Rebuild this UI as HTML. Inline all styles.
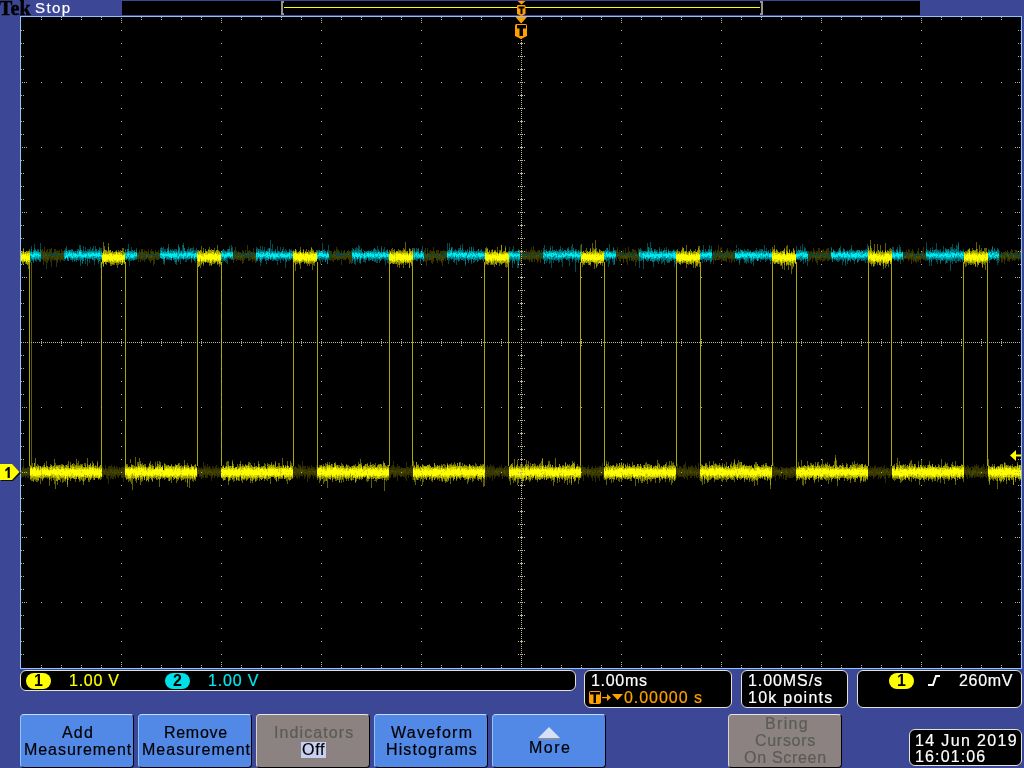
<!DOCTYPE html>
<html><head><meta charset="utf-8">
<style>
*{box-sizing:border-box}
html,body{margin:0;padding:0}
body{width:1024px;height:768px;overflow:hidden;background:#3c4896;position:relative;font-family:"Liberation Sans",sans-serif;}
.a{position:absolute;white-space:nowrap;line-height:17px;font-size:16px;-webkit-text-stroke:0.2px currentColor;will-change:transform}
.pn{position:absolute;background:#000;border:1px solid #e4e0d4;border-radius:6px}
.bt{position:absolute;top:714px;height:54px;background:#5288e6;border-radius:4px;border-top:1px solid #c0dcff;border-left:1px solid #8cc4ff;border-right:1px solid #000;border-bottom:1px solid #000;color:#000;font-size:15px;line-height:17px;text-align:center;letter-spacing:1.3px;white-space:nowrap}
.gr{background:#8c8282;border-top-color:#e8e4e0;border-left-color:#d8d4d0;color:#5c5c54}
.w{color:#fff}.y{color:#ffff00}.c{color:#00e8f0}.o{color:#ffa000}
</style></head><body>
<svg class="a" style="left:0;top:0" width="1024" height="768" viewBox="0 0 1024 768">
<g shape-rendering="crispEdges">
<rect x="122" y="1" width="798" height="14" fill="#000"/>
<rect x="281" y="1" width="2" height="14" fill="#9a9090"/>
<rect x="283" y="1" width="1" height="2" fill="#9a9090"/>
<rect x="283" y="13" width="1" height="2" fill="#9a9090"/>
<rect x="761" y="1" width="2" height="14" fill="#9a9090"/>
<rect x="760" y="1" width="1" height="2" fill="#9a9090"/>
<rect x="760" y="13" width="1" height="2" fill="#9a9090"/>
<rect x="284" y="7" width="476" height="1" fill="#ffff00"/>
<rect x="20" y="16" width="1002" height="653" fill="#8cc4ff"/>
<rect x="21" y="17" width="1000" height="651" fill="#000"/>
<g fill="none" stroke-width="1"><path stroke="#303000" d="M41.5 250v1m1-2v3m0 6v2m1-9v2m0 7v5m1-18v4m0 7v3m1-9v1m0 6v3m1-12v2m0 7v10m1-20v5m0 6v3m1-11v2m0 6v1m1-12v4m0 4v2m1-10v3m0 1v1m0 2v6m1-14v4m0 3v1m0 3v8m1-14v1m0 4v2m1-8v1m0 4v3m1-11v3m0 7v2m1-12v3m0 7v1m1-9v2m0 7v7m1-17v3m0 8v2m1-12v2m0 6v1m1-10v3m0 3v4m1-7v1m0 4v4m1-13v4m0 6v1m1-9v2m0 6v1m1-9v2m0 4v4m74-3v1m1-7v1m0 6v3m1-12v2m0 1v1m0 2v3m1-7v1m0 5v4m1-13v2m0 7v2m1-11v2m0 7v3m1-9v1m0 5v2m1-10v3m0 4v5m1-11v3m0 5v1m2-8v2m1-5v3m0 6v2m1-2v3m1-10v3m0 5v4m1-14v3m0 7v2m1-10v1m0 6v2m1-9v2m0 7v6m1-13v3m0 2v6m1-14v2m0 5v2m1-7v1m0 4v3m1-2v2m1-10v3m0 5v2m1-3v2m74-7v3m0 5v3m1-13v1m0 8v1m1-13v6m0 5v1m1-8v3m0 4v3m1-9v1m0 6v1m1-9v2m0 5v2m1-8v1m0 5v2m1-8v1m0 6v2m1-8v1m0 4v2m1-10v4m0 7v3m1-13v1m0 6v5m1-10v1m0 3v3m1-10v3m0 4v1m1 0v1m1-14v7m0 5v1m1-7v1m0 7v2m1-11v4m0 3v4m1-10v2m0 4v3m1-2v1m1 0v3m1-14v5m0 5v2m1-8v1m0 5v3m1-8v1m0 6v3m74-13v4m0 1v1m0 3v1m1-9v1m0 6v3m1-10v3m0 3v3m1-6v1m0 3v3m1-3v4m1-12v1m0 7v2m1-9v3m0 5v1m1-13v6m1-4v3m0 7v2m1-11v2m0 6v2m1-9v3m0 5v1m1-2v1m1-9v2m0 6v7m1-7v1m1-8v2m0 5v2m1-10v1m0 7v2m1-4v1m1-5v1m0 5v1m1-2v1m1-8v3m0 5v2m1-3v2m0 2v3m1-10v1m0 4v4m1-13v1m0 6v7m73-14v3m0 7v1m1-13v5m0 6v3m1-8v1m0 3v8m1-18v4m0 8v1m1-3v2m1-9v3m0 6v1m1-11v4m1-3v2m0 7v3m1-12v1m0 7v5m1-17v7m0 6v2m1-11v1m1 1v1m1-4v4m0 5v2m1-11v3m0 5v1m0 1v3m1-13v4m0 5v1m1-7v1m0 5v2m1-10v2m0 5v3m1-10v4m0 6v2m1-12v3m0 6v6m1-16v4m0 6v1m1-10v1m0 6v1m1-8v1m0 5v4m1-10v2m0 4v1m74-6v2m0 5v3m1-10v1m0 4v1m0 1v3m1-12v1m0 7v1m1-7v2m1-2v1m0 6v1m1-9v3m0 5v1m1-11v3m0 6v1m1-7v2m0 4v2m1-9v3m0 5v1m1-8v1m0 6v3m1-12v2m0 2v1m0 2v3m1-13v6m0 7v2m1-12v2m0 6v4m1-16v6m0 3v1m0 2v1m1-9v3m0 1v1m0 4v3m1-11v2m0 5v1m1-7v1m0 6v1m1-9v3m0 7v2m1-13v3m0 5v3m1-11v1m0 6v2m1-7v1m0 5v1m0 2v2m1-13v3m0 5v1m1-7v1m0 5v1m74-9v2m0 6v3m1-14v4m1 1v1m0 3v1m0 1v1m1-9v3m0 4v4m1-9v2m0 4v4m1-10v1m0 5v1m1-7v2m0 4v1m1-9v3m0 1v1m0 6v2m1-10v2m0 3v1m1-11v6m1 5v3m1-10v1m0 6v6m1-18v6m1-2v4m0 5v1m1-9v1m0 4v1m1-6v2m0 6v1m1-12v6m0 4v2m1-12v5m0 4v4m1-12v3m1-3v4m0 3v9m1-8v4m1-4v2m1-12v3m0 8v2m74-8v1m1-3v1m0 6v6m1-13v2m0 5v2m1-10v3m0 7v1m1-9v2m0 4v2m1-10v1m0 7v2m1-15v8m0 6v1m1-9v2m0 5v2m1-12v5m1-6v7m0 3v5m1-12v3m0 5v2m1-7v1m1-3v2m0 5v3m1-9v1m0 5v3m1-11v2m0 7v3m1-14v2m0 7v1m1-7v2m1-1v1m0 5v4m1-12v3m0 1v1m0 3v1m1-8v3m0 5v4m1-5v3m1-11v3m0 5v2m1-9v2m0 6v3m74-11v1m0 5v5m1-10v2m0 3v1m0 1v2m1-10v3m0 5v1m1-9v3m0 3v1m1-6v2m0 4v4m1-14v4m0 5v2m1-9v2m1 0v3m0 4v2m1-10v2m0 6v4m1-12v2m0 5v7m1-17v6m0 4v2m1-12v7m0 4v1m1-8v1m0 5v3m1-11v3m0 5v2m1-10v4m0 3v1m0 1v3m1-13v4m0 5v3m1-10v2m0 5v3m1-10v2m0 5v2m1-11v2m0 6v2m1-11v5m0 5v3m1-13v5m0 5v3m1-10v4m0 4v1m1-9v1m0 6v1m73-7v6m0 1v3m1-10v2m0 4v1m1-7v3m0 3v1m1-9v3m0 4v2m1-7v1m0 5v1m1-10v5m0 4v3m1-11v3m0 5v2m1-2v1m1-8v2m0 7v4m1-15v3m0 5v3m1-9v3m0 5v3m1-9v1m0 5v2m1 0v1m1-9v1m0 5v4m1-12v3m0 5v2m1-13v4m0 7v3m1-9v1m0 5v1m1-7v1m0 6v3m1-12v2m0 5v1m1-8v2m0 5v1m1-12v6m0 6v1m1-2v2m1-9v2m0 5v3m74-10v3m0 4v3m1-4v1m1-6v1m0 6v4m1-9v1m0 2v1m0 1v3m1-10v2m0 4v1m1-7v2m0 6v4m1-13v2m0 4v3m1-8v1m0 4v1m1-8v2m0 5v4m1-9v2m0 5v2m1-8v1m0 6v2m1-11v2m1-4v4m0 4v2m1-9v3m0 6v2m1-8v1m0 4v2m1-10v1m0 1v2m0 4v3m1-11v4m0 4v2m1-10v3m0 1v1m0 3v1m1-8v3m0 3v2m1-6v2m0 4v2m1-9v2m0 4v1m1-10v3m0 6v2"/><path stroke="#404000" d="M41.5 251v4m1-3v6m1-5v1m0 3v3m1-9v7m1-5v1m0 2v3m1-7v3m0 1v3m1-1v2m1-6v1m0 1v4m1-7v1m0 2v1m1-5v1m0 2v1m1-2v1m0 1v3m1-2v1m1-5v1m0 2v1m1-5v1m0 4v2m1-7v2m0 3v2m1-6v1m0 2v4m1-7v8m1-8v6m1-6v1m1 0v1m0 1v2m1-5v1m0 2v3m1-6v1m0 2v3m1-6v1m0 1v2m74-4v2m0 2v1m1-5v2m0 2v2m1-7v1m1 0v2m0 2v1m1-7v4m1-4v7m1-5v2m0 2v1m1-5v4m1 1v1m1-8v4m0 2v2m1-5v1m0 1v2m1-6v3m0 2v1m1-4v4m1-1v2m1-7v3m0 2v2m1-7v2m0 2v2m1-5v1m0 2v4m1-4v2m1-6v2m0 2v1m1-4v1m0 1v1m1-4v2m0 2v2m1-5v1m0 3v1m1-5v2m74 0v5m1-9v4m0 3v1m1-6v2m0 1v2m1-2v2m1-1v2m1-6v3m0 1v1m1-5v3m0 1v1m1-5v1m0 3v2m1-5v1m0 2v1m1-1v4m1-9v3m0 2v1m1-2v1m2-4v1m0 2v2m1-6v2m1-2v2m0 3v2m1-5v1m0 1v1m2-5v3m0 2v1m1-2v3m1-6v2m0 2v1m2-4v2m0 2v2m74-6v1m0 1v3m1-7v3m1 1v1m1-2v3m1-6v2m0 2v2m1-7v3m0 1v3m1-2v3m1-6v1m0 2v3m1-3v1m0 1v1m1-7v2m0 3v1m1-1v2m1-2v1m1-6v1m0 4v1m1-2v2m1-5v5m1-7v4m0 1v2m1-4v2m0 1v3m1-6v4m1-7v2m0 1v1m0 1v1m1-4v1m0 2v2m1-7v4m0 1v1m0 2v2m1-6v4m1-8v3m0 2v1m73-1v4m1-7v2m1 0v1m1-4v2m0 2v4m1-7v1m0 1v1m1-2v2m0 1v3m1-6v6m1-7v1m0 3v3m1-8v7m1-4v1m0 1v3m1-8v2m0 3v1m1-4v1m0 1v2m1-4v5m1-6v5m0 1v1m1-2v1m1-5v1m0 1v3m1-6v5m1-1v4m1-5v4m1-4v4m1-8v3m0 1v2m1-6v5m1-4v4m74-1v3m1-6v2m0 1v1m0 1v1m1-8v3m0 3v1m1-1v2m1-5v5m1-5v1m0 2v2m1-7v2m0 3v1m1-1v1m1-4v5m1-6v1m0 3v2m1-7v2m1-1v1m0 1v1m0 1v3m1-8v6m1-6v3m0 1v2m1-3v4m1-6v1m0 1v3m1-1v2m1-5v2m0 1v4m1-8v1m0 2v2m1-7v2m0 3v1m1-4v5m0 1v2m1-8v1m0 3v1m1-5v2m0 2v1m74-6v6m1-7v2m0 1v1m0 1v1m1-4v2m0 2v1m1-5v1m0 2v1m1-3v4m1-2v2m1-1v1m1-5v1m0 1v6m1-5v2m1 0v1m1-4v1m0 1v2m1-6v6m1-6v2m0 1v2m1-3v5m1-7v1m1 3v3m1-3v2m1-2v1m1-2v4m1-6v1m0 1v1m1-5v3m0 1v1m1-3v4m1-7v4m0 1v3m74-2v3m1-8v2m1-1v1m0 2v2m1-1v3m1-6v1m0 1v2m1-7v5m1-3v1m0 2v3m1-6v2m0 2v1m1-5v1m0 4v1m1-4v2m1-4v1m0 2v2m1-4v2m0 1v4m1-8v1m0 3v1m1-4v1m0 1v2m1-6v1m0 5v1m1-9v7m1-4v6m1-4v3m1-5v1m0 1v3m1-1v2m1-7v6m1-5v1m0 3v1m1-5v1m0 3v2m74-7v5m1-3v1m0 1v1m0 1v1m1-2v2m2-5v1m0 1v2m1-6v2m0 2v1m1-5v3m1 0v1m0 1v2m1-6v2m0 2v2m1-6v1m0 2v2m1-2v2m1-3v2m0 1v1m1-6v2m0 1v2m1-5v1m0 3v1m1-3v1m1-3v1m0 1v3m1-5v1m0 1v1m0 1v1m1-5v2m0 2v1m1-7v4m0 1v1m1-4v2m0 2v1m1-1v1m1-3v4m1-6v5m73 0v1m1-2v1m1-3v1m1-3v1m0 1v2m1-4v1m0 2v2m1-2v2m1-4v4m1-5v1m0 2v2m1-5v2m0 2v3m1-8v2m0 2v1m1-2v4m1-5v1m0 2v2m1-5v1m0 2v4m1-3v1m1-5v1m0 2v2m1-7v3m0 1v3m1-1v1m1-5v1m0 1v4m1-7v1m0 3v1m1-5v2m0 2v1m1-2v3m1-4v1m0 1v1m1-5v5m74-3v2m1-3v1m0 1v1m1-3v1m0 3v1m1-3v1m0 1v1m1-3v2m1-4v3m0 1v2m1-7v2m1-2v2m1-3v2m0 2v1m1 0v2m1-5v6m1-3v2m1-6v1m0 2v1m1-3v2m0 2v1m1-5v1m1-1v1m0 1v2m1-2v2m1-5v1m0 1v1m0 1v1m1-4v1m0 1v1m1-1v3m1-2v1m1-6v2"/><path stroke="#505000" d="M43.5 255v2m2-3v2m1-1v1m1 1v1m1-3v1m4 0v1m7-3v1m4-1v1m74 0v2m1-2v2m3-1v2m5-3v2m1-2v1m3 0v1m1-2v2m4-3v1m3-1v1m1 0v1m76-1v1m2 0v1m1-1v1m2-1v1m1-2v2m2-2v1m3-2v1m2-1v1m6 0v3m1-2v2m78-4v1m2 0v1m2 1v1m2-2v1m9-3v1m77 0v1m1 0v2m1-4v2m2 0v1m4-1v1m6-2v1m83-1v2m3-1v1m1-1v1m3-1v1m7-2v2m2-2v1m79-1v1m1-1v1m4 0v1m2-2v1m1 0v2m1-2v1m4-3v1m1 1v1m4-2v1m1-1v1m77-2v1m6 1v1m3-2v1m2 0v1m1-2v1m6-1v2m84-1v1m4 0v1m1-3v1m4 0v1m80-1v1m1-1v2m5-4v2m1-1v2m1-3v2m4 0v2m1-2v1m2-1v2m2-4v1m1 0v1m2 0v1m77-2v3m3-1v1m3-4v2m1-1v2m5-2v3m7-4v1"/><path stroke="#606000" d="M21.5 252v1m0 8v1m1-11v1m0 11v1m1-16v1m0 13v3m1-13v1m1 8v3m2-13v1m1 12v5m1-20v2m0 12v1m1 201v1m0 13v1m1-17v3m0 13v2m1-18v5m0 10v3m1 0v1m1-3v1m1-22v9m0 12v2m1-1v2m1-18v3m0 13v2m1-17v1m0 14v1m1-15v3m1 9v6m1-17v1m0 10v1m1-13v1m0 13v1m1-16v2m0 11v1m1-16v2m0 12v1m1-1v1m1-17v5m0 11v1m1-1v2m1-12v2m0 8v1m1 2v6m1-22v2m0 10v3m1-1v3m1-15v1m0 10v1m1 0v2m1-21v6m0 13v6m1-21v4m0 11v11m1-24v1m1-1v1m0 15v4m1-20v1m2-1v2m0 1v1m0 9v4m1-18v2m0 12v1m1-15v1m0 13v5m1-5v4m1-16v2m0 11v2m1-16v2m0 13v2m1-4v1m1-15v2m0 19v2m1-26v5m0 11v3m2-18v3m0 14v2m1-16v1m0 12v1m2-16v3m0 12v1m1-15v3m1-2v1m0 13v3m1-23v6m1-2v3m1-5v5m1-1v1m0 14v2m1-18v2m0 12v3m1-17v1m0 14v1m1-16v2m0 11v4m1 1v3m1-22v3m0 11v4m1-18v2m0 14v1m2-22v6m1 1v2m0 13v2m1-4v4m1-19v1m1 2v1m0 11v1m1-18v4m0 11v2m1-15v1m0 14v2m1-14v2m1-3v1m1 0v2m1-7v2m1 4v1m0 11v1m1-14v1m0 11v1m1-2v3m1-18v4m0 11v2m1-216v1m1-22v9m0 15v1m1-21v3m2 1v1m0 11v3m1-14v1m1-9v4m0 15v1m1-13v1m0 11v1m1 1v2m1-2v2m1-2v1m1-13v1m0 11v1m1-2v2m1-14v1m1-2v1m0 12v2m1-2v5m1-18v2m0 11v2m1-14v1m0 10v2m1-14v2m0 11v1m1-13v2m0 9v3m1-17v3m0 1v2m0 10v1m1-17v4m0 10v1m1-11v1m1 224v1m1-14v1m0 14v1m1-16v2m1 13v3m1-16v1m0 12v2m1-22v4m0 17v2m1-18v1m0 13v6m1-6v12m1-25v3m2-11v10m0 12v2m1-15v1m0 13v3m1-21v5m1-5v2m1-6v8m0 10v2m1-17v3m0 16v5m1-21v1m0 14v3m1-19v3m0 13v2m2-17v3m1-3v2m0 10v1m1-10v1m1-1v1m1-2v1m0 14v1m1-19v1m0 13v2m1-18v4m1 0v3m0 11v1m1-16v2m0 15v1m2-5v2m1-17v5m1-1v1m0 12v1m1-19v3m0 13v3m1-16v2m1-5v4m0 15v7m1-25v3m1 12v1m1-13v1m0 11v2m2-16v1m0 14v2m1-16v2m0 11v2m1-14v1m0 11v1m1-13v1m1 12v3m2-3v2m1-16v1m0 14v4m1-17v1m1-1v1m0 11v2m1-14v1m1-3v1m1 14v4m1-4v2m1-18v1m0 15v1m1-17v3m0 11v1m1-1v2m1-14v3m0 12v1m1-15v1m0 11v2m1-14v2m0 11v1m1-20v5m0 13v1m1-14v2m0 11v4m1-17v2m0 11v1m1-16v3m0 17v4m1-22v1m0 12v1m1-12v1m0 10v10m1-9v1m1-16v1m0 13v1m1 0v2m1-15v1m0 10v5m1-17v4m0 10v1m1-16v1m0 14v2m2-231v2m0 11v2m1-15v1m2 10v7m1-22v5m0 13v1m1-13v1m0 9v1m1-15v3m0 13v2m2-17v2m0 11v1m2-12v1m0 10v1m1-14v1m0 12v1m1-16v3m0 13v3m1-3v2m1-16v2m0 14v1m1-5v3m1-2v2m1-16v5m0 10v1m1-13v1m0 10v1m1-2v1m1-17v5m0 14v1m1-15v1m0 11v2m1-13v1m0 12v3m1-15v1m0 11v1m1 202v1m1-2v1m0 11v1m1-14v1m0 14v1m2-15v1m0 11v2m1-18v4m1-5v6m0 10v1m1-17v4m0 16v4m1-5v1m1-3v2m1-14v2m1-8v2m0 17v1m1-16v2m0 13v3m1-4v3m1-4v1m1 2v1m1-17v5m0 8v3m1-14v2m0 12v1m1-17v3m0 10v4m1-20v3m0 12v1m1-11v1m0 13v1m1-17v2m0 13v4m1-18v1m0 13v1m1-14v1m0 12v1m1-16v1m0 13v1m1-14v1m0 14v1m1-16v1m0 13v1m1-18v2m0 14v1m1-17v4m1-3v4m0 13v3m1-5v3m1-15v1m0 14v2m1-4v1m1-17v4m0 11v1m1-13v1m0 14v1m1-3v2m1-3v2m1-19v3m0 13v1m1-14v3m0 11v3m1-14v1m1-2v1m1-1v1m2-4v3m0 13v2m1-17v3m1 1v1m0 9v2m1-17v2m0 1v1m0 9v5m1-17v2m1-2v2m0 12v1m1-1v6m1-22v2m1 1v1m1-2v1m1 0v2m0 11v1m1-18v2m0 15v2m1 1v1m1-16v1m1-4v4m0 12v2m1-18v3m0 12v1m1-13v2m0 9v2m1-13v1m0 11v1m1-21v10m0 10v1m1-4v1m1-9v1m1-3v1m0 12v1m1-13v2m0 10v3m1-20v4m0 12v7m1-5v1m1-13v1m0 12v1m1-20v4m1-2v3m0 11v2m1-1v1m1-229v1m0 13v1m1-14v1m0 10v1m1 2v6m1-21v2m0 10v2m1-12v1m0 9v2m1-2v1m1 1v1m1-18v3m0 13v6m1-17v1m0 9v1m1-11v1m1-4v1m0 11v1m1 1v1m1-13v1m0 10v1m1-14v3m0 11v1m1-1v3m1-16v3m1-2v1m0 11v3m1-16v2m0 11v1m1-17v1m0 14v2m1-15v2m0 11v8m1-20v1m0 12v2m1-13v1m0 10v3m2-16v2m0 9v1m1 199v4m0 13v2m1-13v1m0 9v1m1-13v2m0 12v4m1-18v1m0 14v1m1-4v2m1-13v1m1-3v2m0 12v6m1-7v5m1-19v4m0 11v3m1-17v2m1-4v2m0 14v10m1-10v1m1-17v3m1 0v1m0 13v1m1-4v2m1-14v3m0 13v2m1-5v2m1-1v1m1-17v2m0 15v2m1-16v1m0 12v3m2-16v2m0 11v2m1-15v3m0 14v1m1-4v1m1-17v3m0 11v6m1-19v2m0 13v1m1-15v1m0 11v5m1-15v1m0 9v1m1-12v2m0 10v1m1-15v1m0 14v2m1-16v1m0 12v1m1-14v3m0 11v2m1-15v1m1 10v3m1-14v2m0 12v1m1-5v4m1-15v1m0 12v2m1-15v1m1-2v3m0 15v1m1-17v1m0 12v2m1-3v1m1-17v3m0 12v2m1 0v1m1-21v5m0 13v2m1-16v2m0 13v2m1-13v2m2-4v1m0 11v1m2-14v3m0 9v5m1-18v1m0 15v3m1-3v2m1-16v2m1-5v3m0 12v1m1 1v9m1-24v3m0 10v2m1-15v2m1 14v1m1-18v4m0 12v2m1-2v3m1-17v1m0 12v2m1-16v1m1-1v1m1 13v1m1-15v1m0 13v1m1-13v2m0 10v2m1-19v2m1 17v11m1-26v1m0 12v2m1-14v1m0 11v3m1-16v2m0 11v2m1-3v3m1-230v3m0 9v1m2-14v4m1-5v4m0 11v1m1-14v2m1-3v2m0 12v1m1-12v1m0 9v2m2-2v5m1-18v3m0 11v2m1-15v1m0 14v3m1-18v1m0 12v1m1-13v1m0 11v2m1-15v2m0 11v1m1-16v3m0 12v5m1-19v1m1-8v9m0 12v2m1-14v1m0 10v1m1 0v1m1-11v1m1-6v1m1 0v2m0 11v1m1 1v2m1-18v2m0 13v3m1 195v6m0 10v3m1-15v1m0 14v2m1-15v1m0 9v8m1-6v1m2-16v2m0 12v2m1-13v1m1 9v4m2-17v1m0 12v8m1-20v1m0 12v4m1-5v2m1-1v1m2-2v1m2-14v1m0 14v1m1-3v2m1-12v1m0 10v3m1-1v2m1-15v1m0 9v1m2-13v2m0 11v1m1-13v1m0 10v1m1 1v1m1-2v1m1-14v1m0 12v3m1-15v2m1-4v2m0 13v2m1-16v1m0 15v1m1-18v2m0 1v1m0 10v1m1-15v4m0 11v2m1-16v2m0 14v2m1-16v1m0 13v1m1-19v1m0 15v3m1-17v1m0 14v1m1-17v2m1-2v1m0 14v5m1-21v2m0 12v1m1-13v1m0 11v1m1-14v1m0 15v1m1-19v4m1-2v1m0 11v1m1 3v1m1-4v2m1-2v1m1-16v1m0 15v1m1-17v4m0 12v2m1-3v1m1-15v4m2-3v1m0 13v2m1-15v1m0 12v2m1-15v1m1 0v1m0 12v5m1-18v1m0 13v2m1-4v1m1-14v1m0 12v2m2-15v2m0 12v3m1-17v1m0 12v3m1-15v1m0 11v1m1-16v4m0 10v2m1-15v3m1 11v2m1-14v1m0 12v2m2-17v2m0 13v1m1-15v1m0 13v3m1-18v2m1-2v1m0 13v9m1-29v3m0 18v7m1-238v3m0 11v3m1-18v2m1-1v1m0 15v1m1-2v2m1-15v1m0 2v1m0 8v1m1-11v1m0 9v3m1-15v2m0 12v1m1-16v1m0 14v1m1-2v2m1-15v1m0 10v6m1-17v1m2-4v5m0 10v1m1-10v1m0 8v1m1-13v2m0 11v3m1-16v1m0 12v1m1 0v1m1-13v1m0 10v1m1-13v1m1 10v1m1-17v2m0 15v4m1-4v5m1-16v1m0 11v3m1-16v1m0 13v2m1 199v1m0 12v2m1-16v1m0 12v7m2-22v2m0 13v2m1-13v1m0 9v6m1-24v7m0 14v1m1-14v1m0 12v2m1-17v1m0 12v1m1-19v4m0 15v6m1-19v2m0 11v4m1-17v1m0 11v1m1-15v3m1-4v2m0 14v1m1-16v4m0 13v3m1-18v1m1-1v2m1-4v1m0 12v4m1-21v6m1-2v2m0 11v2m1-18v4m0 12v3m1-14v3m0 10v3m1-19v4m0 13v1m1-4v2m1-1v2m1-16v3m1-4v3m1-2v2m0 13v1m1-14v1m0 11v2m1-15v1m0 14v2m1-16v1m1-3v1m1-2v3m0 13v1m1-19v5m0 12v1m1-21v1m1 6v1m0 11v1m1 1v1m1-3v1m1-12v1m1-2v1m0 12v1m1-18v3m0 14v1m1-18v6m0 10v1m1-14v1m0 13v1m1-1v3m1-3v2m1-13v1m0 12v6m1-19v1m0 11v3m1-24v8m1 11v1m1-11v1m0 12v3m2-4v3m1-5v1m1-11v1m0 10v1m1-14v1m0 13v1m1-15v1m0 11v1m1-12v1m0 12v4m1-21v1m0 17v1m1-3v2m1-16v1m0 15v5m1-20v1m0 12v1m1-15v2m0 12v5m1-17v1m0 9v3m1 4v2m1-24v3m2-2v2m0 17v1m1-14v1m0 11v1m1-15v1m0 10v1m1-14v2m0 11v1m1-12v1m0 11v6m1-18v1m0 11v2m1-15v2m1-223v7m1 12v4m1-3v1m1-13v1m0 10v2m1-15v2m0 10v1m1-15v4m1 10v1m1 0v2m2-17v1m0 15v2m2-23v8m1-3v3m0 11v1m1-14v1m0 13v6m1-29v9m0 14v1m1-16v4m0 15v1m1-17v1m0 11v3m1-14v1m1-4v1m1 0v2m0 12v1m2-14v1m0 11v3m1-4v1m1 215v2m1-1v1m1-19v3m0 15v6m1-21v3m0 11v1m1-17v4m1 0v1m0 12v1m1-15v2m1 11v5m1-18v1m1 13v3m1-16v1m0 12v1m1-14v1m0 9v1m1-14v2m0 14v1m1-16v3m1 10v4m1-3v4m1-17v2m0 11v1m1-17v1m0 16v3m1-17v1m0 10v4m1-17v1m1 14v1m1-15v1m1 1v1m0 10v2m1-16v2m0 14v1m1-14v1m1-3v2m0 12v1m1-13v1m0 12v2m1-3v3m1-19v4m0 10v1m1-12v1m1 12v1m1-2v9m1-20v1m2-3v2m0 14v3m1-17v1m0 11v1m1 0v2m1-15v1m0 9v7m1-2v2m1-18v3m0 9v4m1-2v3m1-19v4m1-5v6m0 10v3m1-17v1m0 15v4m1-20v3m1-3v3m0 12v1m1-15v1m0 13v3m1-4v3m2-15v1m0 11v1m1-13v1m0 11v1m1-14v1m0 13v4m2-23v5m1-2v5m0 9v1m1-14v1m0 15v3m1-16v1m0 10v3m1-3v1m1 0v1m1-15v1m1-1v2m0 11v1m1 0v3m1-20v5m0 10v2m1-13v2m0 8v3m1-14v2m1-6v5m0 14v2m1-17v1m0 12v2m1-19v5m0 12v7m1-22v3m0 13v4m1-21v3m0 12v3m1-15v1m1 0v1m0 11v2m1-230v2m1-3v2m0 11v1m1-12v2m0 9v1m1-12v1m1 0v1m0 11v1m1-15v1m0 10v2m1-16v2m0 14v1m1-2v1m1-12v1m0 10v1m1-2v2m1-18v6m0 13v4m1-16v1m1-2v2m0 9v3m1-2v1m1-15v1m0 1v2m1 11v1m1-13v1m1-2v1m0 12v4m1-7v1m1-13v3m0 11v5m2-18v1m0 14v2m1-21v2m0 15v1m1-18v4m0 13v4m1 197v3m0 11v3m1-17v2m0 13v3m1-3v6m1-9v1m1 3v4m1-21v1m0 14v1m1-16v2m0 14v1m1-15v2m0 14v2m1-16v1m0 12v2m1-21v4m0 12v3m1-1v1m1-2v1m1-2v1m1-17v5m0 11v1m1-14v2m0 13v3m1-19v1m0 15v1m1-16v1m0 14v1m1-15v1m0 13v1m1-15v1m0 12v2m1-17v2m0 13v1m1-14v2m0 11v1m1-13v1m0 10v4m1-18v2m0 13v4m1-15v1m0 10v2m1-16v4m0 9v2m1-13v1m0 10v3m1-18v4m0 12v4m1-3v1m2-3v1m1-14v1m0 13v1m1-17v4m0 12v2m1-14v1m0 12v1m1-17v2m0 13v2m1-21v2m0 15v6m1-18v1m1 0v2m0 11v1m1-16v1m1-4v8m0 9v1m1-16v4m0 12v1m1-17v3m0 13v2m2-15v1m1 11v1m1-14v1m0 15v2m1-4v1m1-14v1m0 13v1m1-1v1m2-15v1m0 14v2m1-4v1m1-14v1m0 12v3m1-14v1m0 12v2m1-3v2m1-17v1m0 15v6m1-24v4m0 13v1m1-18v4m0 14v1m1-1v5m1-8v2m1-13v1m1 11v1m1-14v2m0 10v1m1-13v2m0 11v1m1-15v1m0 11v1m1-11v1m0 12v1m1-17v2m0 12v3m1-17v2m1 15v1m1-15v1m0 11v1m1-13v1m0 11v2m1 5v4m1-11v1m1-232v4m0 12v1m1-15v1m0 12v1m1-18v4m1 2v2m0 10v1m1-15v1m0 12v1m1-13v1m0 12v1m2-12v1m0 9v2m1-13v1m0 11v3m1-15v2m0 12v1m1-3v6m1-19v1m1-3v1m0 16v5m2-24v4m0 15v1m1-21v6m0 13v1m1 0v5m1-21v1m0 12v3m1 0v1m1-15v1m0 11v11m1-22v1m0 11v5m1-21v1m0 17v1m1-17v1m0 11v1m2 202v1m0 12v3m1-14v1m0 11v1m1-18v5m1 12v1m1-13v1m1-8v7m0 11v1m1-13v1m0 11v7m1-6v7m1-9v3m1 0v4m1-18v1m0 12v1m1-19v5m0 11v1m2-12v1m1-4v3m1-3v2m1 11v1m1-13v1m0 13v2m1-14v2m0 13v2m1-21v4m0 13v1m1-14v1m1-5v2m0 13v1m1-16v4m0 13v3m1-17v1m0 11v1m1-12v2m0 11v1m1-16v1m0 14v1m1-21v8m0 10v3m1-16v2m0 11v1m1-13v2m1-4v1m0 15v1m1-16v1m0 13v3m1-19v3m0 13v2m1-2v6m1-20v1m0 12v3m1-14v1m1-1v1m0 13v2m1-16v1m2-6v6m0 10v2m1-24v3m0 20v1m1-19v5m0 13v1m1-13v1m0 14v5m1-8v1m1-14v1m1 1v1m1 9v1m1-15v2m0 12v1m1-13v2m0 9v2m1-11v1m0 10v3m2-18v2m0 13v1m1-15v3m0 12v2m1-3v2m1-2v1m1 1v3m1-18v1m0 12v1m1-17v5m0 10v1m1-14v1m1-4v4m0 13v4m1-18v2m0 14v2m1-18v4m1-5v4m0 11v1m1-14v2m0 9v1m1-13v2m0 11v1m1 3v2m1-3v1m2 0v1m1-17v1m0 12v3m1-17v1m0 15v2m1-4v1m1 0v1m1-234v2m0 14v2m1-14v1m0 11v1m1-23v6m0 16v2m1-16v2m0 14v2m1-15v1m0 11v1m1-14v2m0 14v1m1-23v7m0 13v2m1-13v1m0 7v3m1-13v1m1-8v9m0 10v2m1-3v1m1-12v1m1-7v6m0 14v1m1-4v1m1-13v1m0 10v3m1-12v1m0 13v3m1-17v1m1-10v7m0 14v4m1-4v2m1-16v1m1 12v4m1-18v3m1-4v3m1-2v2m0 12v1m1 214v1m1-14v1m0 12v2m1-16v2m0 12v3m1-3v2m1-17v4m0 11v1m1-21v7m0 13v1m1-14v2m0 10v2m1-18v7m1 12v3m1-18v1m0 12v4m1-17v1m0 14v1m1-17v1m0 12v3m1-15v3m1-4v3m1-1v2m0 9v1m2-12v1m0 12v1m1-17v1m0 15v2m1-20v6m1-7v6m0 11v5m1-18v2m0 11v1m1-12v1m2-3v2m0 12v3m1-14v1m0 10v1m1-12v1m0 10v1m1-18v4m1 15v5m2-26v6m0 13v1m1-13v1m1-2v3m1-2v1m0 12v3m1-17v2m1 11v2m1-15v2m0 10v1m1 2v1m1-20v3m0 14v1m1-14v1m0 12v1m1-13v1m0 12v1m1-1v3m1-4v1m1-1v3m1-16v1m0 13v2m2-3v4m1-18v2m0 13v1m1-15v2m0 10v2m1-12v1m0 11v4m1-24v7m1 1v1m1 10v2m1-15v1m0 12v6m1-22v2m0 13v2m1-15v2m0 11v2m1-16v3m0 12v1m1-13v1m0 12v2m1-14v1m0 11v1m1-4v1m1-13v4m0 10v2m1-18v3m0 13v1m1-14v2m2-6v5m0 15v4m1-19v1m1-2v1m0 12v2m1-14v1m0 10v1m2-1v2m1-15v1m1 13v1m1-15v2m0 12v4m1-219v1m1-13v2m0 9v5m1-16v1m0 10v4m1-16v2m0 10v1m1-14v1m0 13v2m1-17v1m0 14v1m1-13v2m0 10v2m1-14v1m0 11v2m1-17v3m0 12v1m1-1v2m1-15v1m1-1v1m0 15v1m1-25v7m1 0v3m0 12v3m1-15v1m1-8v6m1-1v2m0 10v1m1-15v4m0 10v2m1-13v1m0 15v1m1-6v2m1-16v4m0 11v2m1-17v5m0 9v8m1-22v4m0 10v1m1-11v1m0 9v1m1 196v6m0 12v4m1 2v2m1-8v3m1-14v1m0 11v1m1-15v3m0 11v2m1-14v2m0 11v2m1-17v2m0 12v1m1-11v1m0 10v1m1-2v3m1-15v1m0 14v8m2-23v1m0 13v1m1-17v1m0 16v2m1-19v3m0 14v1m1-18v1m0 14v1m1-13v1m0 11v1m0 1v1m1-20v1m1 0v3m0 11v1m1 3v3m1-19v1m0 11v1m1-13v2m1 13v1m1-16v1m1 0v2m0 11v1m1-16v2m0 12v2m2-14v1m1 13v2m1-16v1m1-5v2m0 13v1m1-13v3m1 11v2m1-2v1"/><path stroke="#2a2a00" d="M21.5 476v2m1-11v1m0 7v2m1-18v7m0 10v1m1-9v1m0 6v1m1-8v1m0 7v2m1-10v1m0 6v1m1-9v1m0 7v3m1-11v1m0 7v3m1-14v5m0 6v1m73-10v1m0 9v1m1-9v1m0 5v3m1-8v1m1-5v3m0 6v1m1-7v1m0 7v2m1-9v2m0 5v3m1-13v2m0 8v8m1-18v3m0 6v1m1-10v2m0 7v4m1-14v4m0 7v2m1-11v2m0 6v4m1-12v3m0 6v3m1-3v1m1-9v1m0 6v4m1-13v3m1-2v2m0 6v2m1-8v1m0 5v3m1-3v1m1-8v2m0 4v1m1-8v2m0 7v2m1-11v2m0 8v1m1-11v1m0 9v5m1-16v2m0 6v3m73-9v2m0 5v2m1-11v3m1-1v1m0 6v2m1-9v1m0 7v1m1-10v2m0 7v3m1-3v2m1-16v7m0 6v3m1-12v2m0 6v1m1-10v4m0 8v1m1-11v2m0 6v3m1-14v4m0 7v3m1-11v2m0 5v1m1-9v2m0 7v1m1-9v2m0 6v1m1 0v5m1-15v4m0 6v2m1-11v2m1-1v1m0 8v1m1-12v3m1-4v3m0 6v2m1-8v1m0 7v2m1-11v2m0 7v1m1-9v2m0 4v3m1-10v3m0 5v1m73-10v3m0 6v3m1-4v3m1-11v1m0 8v1m1-9v1m0 7v3m1-10v1m0 5v5m1-15v5m0 5v3m1-12v3m0 7v3m1-13v2m0 7v2m1-9v2m0 6v1m1-15v7m0 5v4m1-11v3m0 5v1m1-9v3m0 7v3m1-13v3m0 6v2m1-3v1m1-9v4m0 7v5m1-15v1m0 8v2m1-12v3m0 7v3m1-11v1m0 6v2m1-12v3m0 6v1m1-8v2m0 6v1m1-9v2m0 5v5m1-12v3m0 5v1m1-7v1m0 5v2m1-12v3m0 4v1m0 3v2m73-11v3m0 7v1m1-11v3m0 7v1m1-12v3m0 5v1m1-10v3m1-7v6m0 8v3m1-12v4m1-3v2m0 7v2m1-11v2m0 4v3m1-12v5m0 7v5m1-15v2m0 6v1m1-9v3m0 6v1m1-8v1m0 7v1m1-10v2m0 7v1m1-2v1m1-8v1m0 6v2m1-3v3m1-3v4m1-16v8m0 1v1m0 3v6m2-14v2m0 6v3m1-10v1m0 4v2m1-9v2m0 5v1m0 1v1m1-11v4m0 7v1m1-11v3m0 5v1m0 1v4m73-14v1m0 8v2m1-10v3m0 7v3m1-15v1m0 9v2m1-10v2m0 6v2m1-11v2m0 8v2m1-14v7m0 4v3m1-12v2m0 7v1m1-10v3m0 7v5m1-16v5m1-3v1m0 8v3m1-10v1m0 5v2m1-2v1m1-9v2m0 6v1m1-8v1m0 6v2m1-11v3m0 6v2m1-10v1m0 5v1m1-9v4m0 5v2m1-8v1m0 7v3m1-11v2m0 4v2m1-9v1m0 7v2m1-11v3m1-3v3m0 7v1m1-11v4m0 6v1m1-10v1m0 6v5m73-12v1m0 8v2m1-13v2m1 0v1m0 7v6m1-14v1m0 6v1m1-8v1m0 7v1m2-9v1m0 7v2m1-12v3m0 7v3m2-4v2m1-9v2m0 7v2m1-12v2m0 9v4m1-13v2m0 5v1m1-8v1m0 7v2m1-12v2m0 7v7m1-14v1m0 1v2m1-5v1m0 7v3m1-11v3m0 6v2m1-12v2m0 8v5m1-15v1m0 7v2m1-9v1m0 7v1m1-13v5m0 6v1m1-8v1m0 9v2m73-15v3m0 1v1m0 4v5m1-14v3m0 7v2m1-8v1m0 6v3m1-12v2m0 8v1m1-11v2m0 1v1m0 6v1m1-10v2m0 5v3m1-9v1m0 7v1m1-12v4m0 7v2m1-14v4m0 7v4m1-17v7m0 7v1m1-10v2m0 5v4m1-9v1m0 6v4m1-14v2m0 7v1m1-9v2m0 5v2m1-1v3m1-13v3m0 7v3m1-12v3m0 6v1m1-9v2m0 4v3m1-9v4m0 5v2m1-13v4m0 5v2m1-9v1m0 8v2m1-9v2m0 3v1m0 1v2m1-15v5m0 6v3m1-8v1m0 8v2m73-4v2m1-15v5m0 8v1m1-11v2m0 7v2m1-10v2m0 6v6m1-14v2m0 6v1m1-9v3m1 5v1m1-8v1m0 7v3m1-12v1m1-1v2m0 7v2m1-11v1m1 0v1m0 7v3m1-11v1m1-1v1m0 6v5m1-13v1m0 9v3m1-12v2m0 5v2m1-9v1m0 6v3m1-10v1m0 1v1m0 5v2m1-11v2m0 7v2m1-11v2m0 5v4m1-3v3m1-11v1m0 7v2m1-11v2m0 6v2m1-9v2m0 7v1m73-9v1m0 5v3m1-9v2m0 5v1m1-10v4m0 5v2m1-9v2m0 5v1m1-9v2m0 6v1m1-8v1m0 8v2m1-13v2m0 7v2m1-12v3m0 7v2m1-9v1m0 6v1m1-9v2m0 5v1m1-8v2m0 1v1m0 4v4m1-12v2m0 6v2m1-10v2m0 6v4m1-13v5m0 6v1m1-10v2m0 5v1m1-9v2m0 6v2m1-12v3m0 7v4m1-4v8m1-16v2m0 5v1m1 0v1m1-8v3m0 4v3m1-9v1m0 6v2m1-13v3m0 7v2m1-10v2m73-4v1m0 7v1m1-7v2m0 5v1m1-8v3m0 6v1m1-12v4m0 5v5m1-13v1m0 6v2m1-7v1m0 6v3m1-11v1m0 8v1m1-10v1m0 8v2m1-12v3m0 8v1m1-11v2m0 6v1m1-11v3m0 7v3m1-12v3m0 5v3m1-13v3m0 2v2m0 4v2m1-11v3m0 7v1m1-12v2m0 7v3m1-9v2m0 5v2m1-1v2m1-12v2m0 6v3m1-10v3m0 4v4m1-14v6m0 5v2m1-10v3m0 5v1m1-7v3m0 3v2m1-11v3m0 5v4m1-10v1m0 5v2"/><path stroke="#383800" d="M21.5 470v1m0 2v3m1-8v7m1-9v10m1-7v3m0 1v2m1-6v2m0 3v2m1-7v2m0 2v2m1-7v4m0 2v1m1-7v7m1-6v3m0 1v2m73-8v9m1-7v2m0 1v2m1-4v1m0 2v2m1-7v6m1-5v7m1-5v1m0 1v3m1-8v8m1-7v6m1-7v3m0 2v2m1-6v1m0 2v4m1-7v3m0 1v2m1-5v2m0 1v3m1-10v4m0 4v2m1-7v3m0 1v2m1-6v3m0 1v2m1-6v1m0 2v3m1-5v2m0 1v2m1-8v5m0 1v2m1-5v4m1-5v2m0 2v3m1-7v8m1-9v4m0 3v2m1-9v3m0 1v2m73-4v2m0 2v1m1-6v1m0 2v2m1-5v6m1-6v2m0 1v4m1-7v2m0 1v4m1-7v1m0 4v2m1-7v6m1-7v1m0 2v3m1-5v2m0 2v4m1-8v1m0 1v4m1-7v4m0 2v1m1-6v2m0 2v1m1-6v3m0 1v3m1-6v2m0 2v2m1-6v3m0 1v3m1-6v2m0 3v1m1-7v6m1-6v2m0 3v3m1-8v7m1-8v3m0 2v1m1-5v7m1-7v3m0 1v3m1-6v1m0 2v1m1-4v1m0 1v3m73-6v6m1-8v5m0 1v1m1-7v5m0 1v2m1-7v7m1-6v1m0 2v2m1-5v5m1-6v4m0 1v2m1-8v2m0 3v2m1-5v1m0 2v1m0 1v1m1-7v2m0 2v1m1-4v2m0 1v2m1-5v3m0 1v3m1-7v3m0 1v2m1-6v5m1-4v2m0 1v4m1-9v3m0 1v4m1-7v2m0 1v1m0 1v2m1-7v2m0 2v2m1-7v6m1-5v1m0 2v3m1-6v2m0 1v2m1-4v1m0 3v1m1-5v1m0 2v2m1-7v4m0 1v3m73-6v7m1-7v2m0 1v4m1-8v1m0 2v2m1-6v2m0 2v2m1-7v4m0 1v3m1-5v1m0 1v5m1-8v2m0 3v2m1-7v4m1-4v2m0 1v4m1-8v6m1-5v2m0 1v3m1-6v7m1-7v2m0 3v2m1-8v4m0 1v2m1-6v2m0 1v3m1-7v2m0 1v3m1-6v2m0 3v1m1-4v1m0 1v3m1-8v8m1-6v3m0 1v2m1-6v1m0 1v2m1-5v5m0 1v1m1-6v3m0 1v3m1-7v1m0 3v1m0 1v1m73-9v3m0 2v3m1-5v3m0 1v3m1-11v9m1-6v2m0 1v3m1-7v8m1-5v4m1-7v7m1-6v7m1-6v5m1-7v3m0 2v3m1-6v1m0 1v3m1-7v2m0 3v2m1-6v3m0 1v2m1-6v2m0 1v1m0 1v1m1-6v2m0 1v3m1-7v5m1-4v2m0 1v2m1-5v7m1-6v1m0 1v2m1-6v2m0 4v1m1-6v2m0 3v2m1-7v7m1-6v6m1-8v2m0 2v2m73-6v3m0 1v4m1-9v4m0 2v3m1-8v2m0 3v2m1-7v2m0 2v2m1-6v3m0 2v2m1-6v5m1-6v2m0 4v1m1-7v2m0 3v2m1-6v2m0 2v2m1-6v1m0 2v2m1-5v7m1-8v4m0 2v3m1-7v2m0 1v2m1-6v3m0 1v3m1-8v2m0 2v3m1-6v1m0 2v4m1-8v3m0 2v2m1-5v1m0 1v4m1-8v2m0 2v4m1-9v3m0 3v1m1-6v5m0 1v1m1-7v3m0 1v2m1-6v5m0 1v3m73-8v2m0 1v1m1-6v5m0 1v1m1-5v2m0 1v1m1-5v2m0 3v3m1-8v1m0 1v6m1-7v5m1-5v1m0 2v4m1-7v1m0 1v5m1-8v3m0 3v1m1-6v7m1-7v5m1-4v1m0 3v2m1-8v7m1-6v2m0 2v1m1-7v3m0 3v2m1-7v4m0 1v2m1-6v3m0 1v2m1-6v4m1-2v1m0 2v2m1-7v2m0 1v2m1-6v4m0 3v1m1-5v1m0 1v1m1-6v2m0 1v1m0 1v1m1-4v2m0 2v4m73-11v3m0 3v3m1-8v8m1-8v3m0 2v2m1-6v2m0 1v3m1-6v1m0 2v3m1-5v1m0 2v2m1-6v2m0 1v3m1-6v1m0 3v3m1-6v2m0 2v2m1-7v2m0 2v3m1-8v2m0 3v1m1-5v3m0 1v3m1-7v6m1-6v1m0 3v2m1-7v2m0 4v3m1-7v2m0 1v2m1-6v6m1-6v1m0 1v5m1-7v2m0 1v4m1-7v1m0 3v1m1-7v5m0 1v2m1-7v1m0 2v4m1-7v1m0 3v2m1-5v7m73-7v3m0 1v1m1-4v1m0 3v1m1-5v5m1-5v1m0 2v2m1-6v3m0 1v2m1-6v8m1-9v7m1-7v7m1-6v1m0 1v1m0 1v2m1-6v3m0 1v1m1-5v1m0 1v2m0 1v1m1-6v2m0 3v1m1-6v6m1-4v6m1-5v3m1-6v2m0 2v2m1-7v7m1-6v3m0 1v2m1-6v1m0 2v2m1-6v3m0 1v3m1-4v1m0 1v2m1-5v4m0 1v1m1-8v7m1-6v3m0 1v2m73-9v7m1-4v1m0 1v3m1-4v3m0 1v2m1-7v5m1-7v4m1-2v2m0 3v1m1-7v8m1-6v3m0 1v2m1-7v2m0 4v2m1-8v1m0 4v1m1-7v3m0 1v3m1-6v1m0 3v1m1-7v2m0 2v4m1-6v3m0 2v2m1-9v5m0 1v1m1-4v1m0 3v1m1-7v4m0 2v2m1-8v3m1-1v3m1-3v2m0 1v2m1-5v1m0 2v1m1-2v1m0 1v1m1-6v2m1-2v2m0 2v1"/><path stroke="#484800" d="M21.5 471v2m3-1v1m1-2v3m1-3v2m1-1v2m2-2v1m74-2v1m1-1v2m3-1v1m3-2v2m1-3v2m1 0v1m1-1v1m1-3v4m1-2v1m1-1v1m1-3v2m1 0v1m1-1v1m2-2v2m2-1v3m1-4v1m73 0v2m1-4v2m2-1v1m1-1v1m1-2v4m2-5v2m1 0v2m1-3v1m1 1v2m1-3v2m1-2v1m1-1v2m1-1v1m1-1v3m2-4v3m2-3v2m2-1v1m1-2v2m1-2v1m74 0v1m1-1v1m2-3v2m2 0v1m1-4v3m1-2v2m0 1v1m1-4v2m1-1v1m1 0v1m1-1v1m2-1v1m1-2v1m1-1v1m0 1v1m1-3v2m2-3v2m1-1v1m1-1v3m1-3v2m75-1v1m1-3v2m1-2v2m1-1v1m1-1v1m1-1v3m2-3v1m2-1v1m2-1v3m1-2v1m1-2v1m1-2v1m1-1v3m3-1v1m1-3v1m2 1v1m1-3v3m73-3v2m1 1v1m2-3v1m6-1v2m1-2v1m1-2v3m1-1v1m1-2v1m0 1v1m1-3v1m2-1v1m2-1v1m1-2v4m1-3v3m3-4v2m73-1v1m1-1v2m1-3v3m1-3v2m1-1v2m2-3v4m1-4v3m1-2v2m1-3v2m2 0v2m1-2v1m1-1v1m1-3v2m2-1v2m1-2v1m1-2v2m1-2v3m1 0v1m1-3v1m1 1v1m73-3v1m1 0v1m1-2v1m0 1v2m1-5v3m3-3v2m1-2v1m1 0v3m3-3v3m2-3v2m1-3v3m1-1v1m1-1v1m2-1v2m1-3v1m1 0v3m1-3v1m1-3v1m0 1v1m1-1v2m73-4v3m2-2v2m1-2v1m1-2v2m1-1v2m1-2v1m1-2v3m1-1v2m1-3v2m1-3v3m1-1v1m2-3v3m1-3v4m1-2v1m3-2v1m1-2v3m1-1v1m1-4v2m1-2v3m74 0v1m1-2v3m2-3v2m1-1v1m4-3v1m0 1v1m1-1v1m1 0v1m1-3v3m3-4v2m1-1v2m2-1v1m1-3v2m1-1v1m1 0v1m1 1v1m2-3v1m74-3v1m1 2v1m2-3v2m1-2v3m2-1v1m1-3v4m1-5v4m1-3v1m1-2v3m2-1v2m1-2v1m1-2v3m1-2v2m1-3v3m1-1v1m1-2v1m1-2v2m1 0v1m1-3v3m1-3v2"/><path stroke="#004a50" d="M30.5 251v1m0 10v1m1-17v3m0 10v2m1-1v1m1-11v1m0 11v1m1-19v4m0 11v1m1-11v1m1 9v3m1-13v2m0 8v1m1-11v1m1 11v1m1-19v6m0 12v1m1-7v4m2-5v1m4-1v3m2-3v2m1-2v1m1-3v2m1 0v2m1-2v2m1-3v4m1-3v3m1-3v2m3-1v1m1-1v1m1-2v2m1-2v2m2-6v1m0 8v2m1-13v2m0 9v1m1-14v3m1 11v1m3-2v1m1-11v1m1-1v1m0 10v2m1-3v1m1-9v1m0 9v1m1-3v2m1-10v2m0 7v2m1-13v2m1-2v1m0 8v3m1-16v5m0 9v1m1-15v3m0 14v4m2-15v1m0 11v1m1-18v4m1 1v1m1-5v4m0 9v4m1-6v1m1-10v3m0 9v5m1-17v2m1-2v1m0 9v4m1-16v4m1-1v1m0 7v1m1-11v1m1-3v5m0 8v2m1 0v4m1-19v3m0 9v2m3 2v2m1-17v2m1-1v3m0 8v9m1-20v3m0 8v1m24-11v1m3-6v5m0 11v1m1-1v6m1-7v2m1-14v4m0 9v1m2-1v1m2-2v1m1-12v2m0 9v1m3-6v2m1-1v2m1-2v1m2-1v2m2-3v4m3-3v2m2-3v2m2-2v2m1-2v2m2-1v1m1-2v1m0 1v1m1-3v2m1-1v2m1-1v1m1-9v2m1-3v1m1 0v3m1-4v5m0 9v3m1-15v2m0 11v3m1-16v2m1 8v1m1-12v1m0 10v1m1-16v3m0 12v1m1-1v1m1-11v1m1 0v1m0 9v1m1-12v2m1-1v1m1-2v2m0 8v3m1-13v2m0 11v2m1-15v1m0 12v3m1-14v1m0 7v1m1-16v2m0 15v1m1-15v1m0 11v1m1-1v5m1-14v1m1-6v7m1-9v2m2 14v3m1-11v1m0 7v3m1-13v1m0 9v1m1-13v4m0 8v1m1-11v2m1-3v1m0 9v1m1-11v3m0 10v2m1-15v3m0 7v1m1-12v3m0 9v1m1-10v3m1-3v1m0 8v4m1-15v3m26-1v1m0 8v4m1-3v1m1-11v1m1 9v2m1-11v1m0 7v4m1-14v2m0 7v6m2-18v3m0 9v1m1-8v1m0 6v1m1-14v3m0 11v1m1-13v4m0 8v1m2-5v3m2-4v2m1-3v3m2 0v1m1-3v2m2-2v3m1-1v1m1-3v2m1-3v4m1-2v1m1-2v3m1-2v2m1-2v1m1-3v4m1-2v2m1-5v4m1-1v2m1-4v2m2-8v2m0 12v1m1-14v4m0 8v1m1-3v1m1-10v3m0 7v2m1-15v4m0 12v4m1-16v1m0 10v2m1-17v5m0 8v1m1-10v1m0 7v1m1-12v3m1 1v1m1 8v4m1-15v2m1-3v3m0 9v1m2-21v12m1-3v2m0 8v1m1-16v7m0 8v2m1-10v1m0 8v1m2-12v1m0 10v1m1-9v1m0 7v1m1-15v5m0 8v6m1-6v2m1-10v1m0 7v1m1-13v4m0 9v3m1-12v1m1-3v1m0 8v2m1-13v5m0 8v1m1-3v1m1-10v3m0 8v8m1-18v1m1 8v1m1-1v2m1-2v2m1-11v1m1-2v2m1 8v1m25-10v1m1-1v1m0 8v1m1 0v1m1-3v6m1-5v1m1-17v7m0 9v3m1-3v1m1-11v2m0 7v2m2-8v1m1-3v1m1-6v7m0 6v2m2-5v3m1-4v2m2-1v1m1-2v1m1-1v1m1-1v2m1-4v4m1-2v3m1-3v2m1-3v4m1-4v4m1-4v3m2-1v1m1-3v1m1-1v1m1-1v1m0 1v1m1-1v1m1-1v1m1-4v2m1 0v2m1-8v3m0 10v2m1-4v1m1-10v1m0 11v2m1-16v2m0 11v4m1-18v3m0 9v1m1-12v3m0 9v2m1-17v4m1-3v4m0 11v2m1 0v1m1-16v1m1 9v1m1-9v1m0 2v1m0 5v3m1-2v2m1-11v1m0 8v3m1-12v1m0 7v1m2-10v1m0 9v1m1-1v1m2-11v2m0 7v1m1-9v1m1-3v1m0 9v2m1-2v3m1-13v1m0 11v1m1-12v1m0 8v4m1-17v6m0 7v4m1-14v1m0 9v1m1 0v3m2-17v2m0 11v1m2-11v2m0 7v1m1-12v5m0 6v3m1-10v1m0 7v6m1-15v1m1-2v1m0 10v3m1-3v4m25-16v3m0 9v1m1-13v1m1 10v1m1-12v3m0 9v1m1-12v2m0 8v2m1-13v1m1 9v1m1-8v1m0 9v3m1-15v2m1-5v5m1 10v1m1-9v3m1 0v3m3-5v1m0 1v2m3-4v3m2-3v1m1-1v3m1-2v1m3-2v4m3-3v2m1-3v2m1-2v2m1-1v1m3-13v8m1 8v5m1-21v5m0 10v3m1-3v1m1-12v1m0 11v1m1-13v6m1 6v3m1-12v1m0 10v2m1-14v1m0 7v1m1-8v1m0 9v5m2-17v2m0 11v1m1-14v2m0 10v1m1-16v3m2-4v4m1 2v2m0 7v2m1-2v2m1-11v1m0 13v2m1-15v1m0 6v1m1-10v1m1 11v2m1-16v3m1 9v1m1 2v2m2-17v2m0 11v3m1-3v2m1-11v1m0 8v1m2-11v2m0 9v1m1-4v3m1-10v1m0 7v1m1-10v1m1-2v1m1 1v1m0 7v1m1-9v1m0 9v1m1-11v1m0 7v1m25-13v4m0 11v1m1-3v1m1-2v1m1-11v1m0 13v5m1-22v5m1 11v2m1-5v1m1 0v1m1-1v8m1-19v1m0 15v3m1-8v1m1-7v2m1-1v1m1-2v1m1-1v3m1-4v1m1 1v1m1-2v2m1-2v3m2-3v2m1-1v2m1-3v1m0 1v1m3-4v1m1 0v1m1-2v2m1 1v1m1-3v1m1-2v3m2-2v3m1-2v2m1-9v3m0 8v1m1-15v5m1 0v2m0 8v1m1-12v2m0 8v4m1-12v1m0 8v1m2-11v1m0 9v4m1-18v2m0 11v4m1-3v8m1-22v4m1 0v1m0 8v4m2-4v2m1-12v2m0 8v2m2-11v2m0 9v2m1-14v1m0 10v2m1-16v3m0 10v1m1-10v1m0 9v2m1-14v4m0 7v8m1-9v1m1-1v1m3-11v1m0 10v1m1-13v2m0 10v2m1-11v1m0 8v7m1-16v1m0 7v1m1-13v4m0 8v1m1-15v6m0 10v2m1-14v1m1 9v2m1-11v1m0 11v11m1-23v2m0 9v2m1-11v1m0 7v1m1 1v2m1-12v1m1-7v5m0 10v1m26-13v3m0 10v1m1-4v3m1-11v1m0 9v7m1-23v7m0 8v5m1-13v1m0 7v1m1-9v1m1-1v1m0 7v3m1-15v1m0 11v6m1-1v1m1-15v1m0 7v1m2-6v1m2 0v2m2-3v3m1-2v2m3-2v2m1-3v2m2 0v1m2-1v2m1-3v2m1-1v2m1-3v3m1-4v3m2 1v1m2-3v1m1-7v1m0 11v7m1-20v2m0 8v3m1-12v2m0 9v1m2-10v1m0 10v7m1-11v1m1 0v1m1-9v1m0 8v1m1-18v8m0 9v2m1-2v1m1-13v3m1-9v9m2-1v1m1 11v5m1-18v1m0 11v1m1-13v2m0 9v1m1-11v1m0 9v1m1-11v2m0 9v1m1-10v1m0 7v4m1-17v2m1 9v1m1-10v2m0 9v4m1-13v1m0 7v4m1-13v1m0 10v1m1-14v2m0 10v5m2-18v3m0 9v3m1-10v1m0 8v2m1-14v1m0 12v1m1-1v1m1-3v1m1-10v1m1 6v2m1-11v1m0 9v1m1-10v1m0 11v5m1-8v5m25-14v1m2 8v4m1-18v5m1 9v3m1-13v2m1 0v1m1-1v1m1-3v1m0 10v1m1-16v5m1-1v2m0 11v2m1-18v3m0 12v1m1-8v3m1-2v3m1-4v2m1-3v4m1-2v1m1 0v1m1-3v2m1-1v1m1-2v4m1-4v1m1-1v1m1 1v1m1-3v2m1-3v1m1-1v5m3-5v2m2-1v1m2-1v3m1-3v3m2-12v3m0 1v1m0 1v1m0 7v2m1-9v1m0 6v1m1-12v3m0 8v1m1-9v1m0 11v2m1-16v1m0 9v1m1-2v1m1-1v1m1 0v1m1-11v2m0 9v3m1-13v1m0 10v2m1-2v3m1-15v3m0 8v2m1-13v2m0 8v4m1-12v1m0 6v1m1-9v1m0 10v2m1-2v3m1-4v2m1-11v1m0 9v5m1-15v1m0 7v1m1-10v1m1-3v3m1-1v2m1 8v1m1-12v2m0 7v1m1-10v2m0 8v3m1-13v1m0 9v1m1-11v1m0 9v1m1-1v1m1-15v5m1 10v2m1-14v3m0 8v2m1-10v1m0 7v1m1-10v1m2-2v2m0 10v3m1-4v1m25-15v4m0 9v1m1-1v1m1-11v1m0 9v1m1-1v1m1-14v4m0 10v2m1-12v1m1-7v6m0 9v1m1 0v4m1-17v2m1-1v3m0 10v2m2-12v2m0 8v5m2-11v1m1-2v3m1-3v3m1-2v1m1-2v2m1-1v3m2-3v2m1-3v2m1-2v2m3-2v3m1-3v1m0 1v1m1-3v1m1-1v1m1 0v2m1-2v1m1-1v2m1-4v4m2-5v1m1-6v1m0 3v1m0 6v2m2-11v1m0 8v1m1 0v2m1-10v1m0 7v1m1 0v1m1-10v1m0 8v2m1-13v2m0 9v2m1-2v1m1-15v4m0 9v1m1-1v1m1-9v1m0 8v5m1-17v1m0 12v1m1-13v1m0 9v1m1-9v1m0 11v3m2-16v1m0 10v3m1-13v1m2-3v2m0 10v1m1-17v3m1 2v1m1-1v1m0 9v1m1 0v3m1-13v1m1-2v1m1 11v1m1-2v1m2-11v1m2 7v2m1-11v2m0 8v1m1-11v1m0 9v1m1-12v2m0 8v4m1-14v2m0 7v2m1-16v6m0 9v4m25-16v3m1-3v3m1 1v1m0 8v1m1-2v1m1-11v1m0 9v1m1-13v3m1 10v2m1-17v4m0 10v1m1-13v3m0 10v4m1-6v2m1-9v1m2 2v2m2-2v1m1-1v2m1-2v2m1-3v1m4 0v1m1 0v2m1-2v2m1-3v2m1-1v1m1-1v1m1-2v2m1-1v1m1-1v2m1-1v1m1-4v3m1-3v2m2-13v7m0 10v1m1-10v1m0 8v2m1-11v2m0 7v1m1 2v4m1-18v2m0 9v1m1 2v4m1-19v3m0 8v2m1-10v2m0 7v1m2-11v1m0 9v1m1-17v7m0 10v2m1-13v2m0 8v5m1-14v1m1-1v2m1-3v2m0 12v1m1-4v1m1-10v1m0 8v1m1-15v5m0 8v2m2-13v1m0 10v5m1-15v1m1-1v1m0 10v3m1-3v1m1-11v2m0 8v1m1-14v4m0 10v10m1-24v2m0 11v2m1-18v5m0 12v3m1-15v1m0 9v2m1-13v3m1-2v1m0 2v1m0 6v4m1-18v4m0 10v4m1-17v5m0 7v3m1-19v2m0 17v1m1-11v1m0 8v1m1-11v1m0 8v3m1-3v1m1-9v1m0 9v1m1-13v2m0 9v1m25-12v1m0 9v2m1-11v1m0 9v3m1-12v1m1-3v1m0 9v1m1-14v1m0 11v1m2-11v1m1 1v2m1 7v2m1-13v2m0 10v5m1-16v1m0 10v3m1-9v1m0 2v1m1-3v1m1-3v1m1-1v1m0 1v1m1-2v2m2-1v2m1-2v2m2-3v1m2-2v4m1-3v2m1-3v1m0 2v2m2-3v1m1-2v2m1 0v1m1-2v1m1-1v1m1-2v3m1-2v3"/><path stroke="#007880" d="M30.5 256v6m1-13v3m0 6v1m1-7v2m0 5v1m1-9v1m0 7v3m1-14v3m0 6v2m1-9v1m0 8v2m1-10v1m0 6v1m1-8v1m0 6v1m1-9v2m0 7v1m1-8v1m0 4v4m1-12v4m0 5v3m24-10v2m0 5v1m1-9v2m1-3v2m1 0v1m0 7v1m1-10v3m0 4v4m1-11v1m0 6v1m1-8v2m0 6v1m1-9v2m0 6v2m1-10v3m0 6v1m1-9v1m0 6v1m1-7v1m0 5v3m1-10v2m0 5v1m1-6v1m0 5v1m1-2v2m1-10v3m0 4v1m1-8v1m0 6v2m1-11v2m0 8v4m1-12v2m0 6v2m1-8v2m0 5v4m1-13v3m0 5v3m1-9v1m0 4v1m1-7v2m0 5v2m1-9v2m1 5v3m1-10v1m0 6v1m1-9v2m0 6v1m1-8v1m0 6v1m1-8v1m0 5v1m1-9v3m0 7v1m1-9v1m0 4v3m1-8v2m0 5v3m1-12v3m1-3v3m0 6v1m1-8v2m0 4v3m1-10v2m0 6v4m1-13v2m0 6v1m0 1v2m1-10v2m0 4v2m1-8v1m0 6v1m24-9v3m0 5v2m1-8v1m0 6v1m1-11v3m0 6v1m1-10v2m0 6v3m1-9v2m0 2v1m0 3v1m1-9v1m0 6v1m1-8v1m0 6v2m1-10v3m0 5v2m1-9v2m0 6v1m1-10v2m0 6v2m1-3v2m1-9v2m0 5v2m24-9v3m1-5v3m0 7v1m1-8v2m0 5v1m1 0v2m1-10v2m0 6v3m1-11v1m0 5v1m1-1v2m1-10v2m0 7v1m1-12v3m0 7v2m1-8v2m0 5v1m1-9v3m0 5v2m1-9v2m0 6v1m1-9v2m1 5v2m1-9v1m1-1v2m0 6v3m1-12v2m0 6v4m1-10v1m1-7v4m0 9v2m1-13v5m0 4v2m1-8v2m0 4v2m1-8v1m0 6v1m1-7v2m0 4v1m1-14v8m0 6v1m1-12v3m0 6v2m1-8v1m0 6v1m1-7v1m0 5v1m1-9v2m0 6v1m1-8v1m0 5v2m1-8v1m0 6v1m1-10v3m0 4v2m1-7v1m0 6v3m2-11v4m0 3v2m1 0v2m1-10v2m0 4v2m1-8v1m0 5v2m25-8v2m0 6v2m1-10v1m0 5v2m1-10v4m0 4v3m1-9v3m0 5v2m1-10v1m0 6v2m1-8v1m0 5v1m1-8v1m0 5v1m1-9v3m0 5v1m1-9v3m0 5v1m2-10v4m0 5v2m1-8v1m0 6v1m24-10v3m0 8v1m1-9v1m0 6v1m1-11v2m0 6v1m1-6v1m0 5v1m1-9v2m0 8v2m1-11v1m0 7v2m1-10v1m0 6v1m1-8v1m0 5v1m1-8v3m0 4v2m1-7v1m0 5v3m1-3v2m1-9v1m0 6v2m1-9v1m0 7v1m1-12v1m0 8v2m1-7v2m0 5v1m1-9v2m0 4v2m1-8v1m0 5v2m1-7v1m0 6v1m1-9v2m0 6v1m1-10v2m0 7v1m1-2v2m1-9v2m0 4v2m1-8v1m0 6v1m1-7v1m0 5v1m1-7v1m0 4v3m1-2v1m1-9v1m1 1v2m0 4v2m1-9v2m1-1v1m0 6v1m1-9v2m0 5v4m1-10v1m0 5v1m1-7v1m0 4v2m1-10v3m1-1v2m0 5v2m1-9v2m0 5v1m1-8v2m0 4v2m25-8v1m1-1v2m0 4v2m1-9v2m0 6v2m1-9v1m1-1v1m0 5v2m1-9v2m0 5v2m1-9v4m0 4v1m1-8v1m0 5v1m1-7v2m0 5v4m1-9v1m0 5v1m1-9v1m0 6v6m1-12v2m24-3v1m0 6v3m1-12v3m0 5v2m1-8v2m0 6v3m1-12v2m0 5v4m1-11v2m0 5v2m1-8v2m0 6v1m1-11v3m0 5v2m1-9v3m0 4v4m1-11v3m0 7v3m1-14v4m0 5v1m1-7v1m0 4v1m1 0v1m1-8v2m0 6v1m1-8v1m0 5v2m1-2v1m1-8v2m0 4v1m1-7v1m0 6v2m1-9v2m0 5v2m1-9v1m0 5v3m1-2v1m1 0v2m1-11v2m0 6v1m1-11v5m0 5v1m1-9v2m0 6v3m1-10v2m0 4v2m1-7v1m0 5v1m1-9v2m0 6v1m1-8v1m0 7v1m1-8v1m0 5v3m1-13v4m0 6v1m1-7v1m0 4v2m1-8v1m0 5v1m2-6v1m0 5v1m1-8v2m0 4v3m1-10v1m0 6v3m1-8v2m0 5v1m25-9v2m0 5v2m1-11v2m0 8v1m1-8v1m0 4v2m1-8v1m0 6v2m1-9v1m0 6v1m1-10v3m1 1v1m1-2v1m0 5v3m1-10v1m0 6v1m1-8v2m0 4v3m1-8v1m0 6v2m24-10v1m0 6v2m1-10v2m0 6v1m1-11v4m0 5v1m1-8v1m0 6v1m1-10v1m0 9v1m1-2v2m1-8v1m0 5v2m1-8v1m0 6v3m1-11v2m0 4v1m0 1v2m1-9v1m0 6v2m1-9v2m0 5v2m1-10v1m0 8v2m1-11v2m0 5v3m1-12v4m0 6v1m1-9v2m0 5v3m1-12v4m0 5v3m1-8v1m0 5v1m1-7v1m0 5v1m1-8v1m0 6v6m1-8v2m1-8v5m0 3v2m1-8v1m0 6v2m1-11v1m0 7v2m1-9v2m0 5v1m1-12v4m0 8v3m1-11v1m1-3v3m0 5v3m1-9v2m0 6v1m1-8v1m0 5v2m1-9v1m0 6v2m1-8v2m0 4v3m1-12v3m0 5v1m1-6v1m1-2v2m0 6v1m1-10v3m0 4v2m1-1v1m1-7v1m0 4v4m1-9v1m25-2v1m0 7v3m1-11v2m0 5v2m1-9v1m0 5v2m1-9v2m0 6v5m1-12v2m0 6v2m1-9v1m0 4v5m1-11v2m0 5v1m1-8v2m0 6v1m1-9v2m0 4v3m1-10v3m0 6v6m1-15v2m0 7v1m24-9v1m0 6v1m1-9v2m0 6v6m1-12v2m0 3v3m1-3v2m1-1v2m1-9v2m0 5v1m1 0v1m1-12v4m0 5v2m1-8v1m0 7v1m1-10v3m0 4v3m1-9v1m0 5v2m1-9v2m0 4v2m0 1v1m1-2v1m1-8v2m0 5v1m1-8v1m0 3v1m0 2v2m1-8v1m0 6v2m1-11v2m0 6v2m1-11v3m0 6v1m1-8v2m0 5v2m1-3v2m1-8v1m1-2v4m0 3v1m1-8v1m0 6v2m1-8v2m0 3v4m1-11v3m0 6v1m1-10v2m0 7v1m1-8v2m0 5v1m1-8v1m0 5v1m1-8v2m0 4v2m1-8v2m0 7v1m1-11v2m0 7v1m1-8v2m0 4v1m1-8v1m0 7v3m1-10v1m0 5v3m1-8v1m0 5v1m1-9v2m0 7v2m1-9v1m0 5v2m1-10v2m0 6v2m24-9v1m0 7v1m1-10v3m0 6v1m1-9v1m0 5v4m1-13v3m1 0v2m0 4v3m1-9v1m0 6v1m1-1v1m1-7v1m0 4v1m1-6v1m1-5v3m0 6v2m1-9v3m0 5v6m1-13v1m0 5v1m24-8v2m0 5v4m1-11v2m0 5v1m1-7v2m0 5v2m1-9v2m0 5v2m1-1v3m1-11v2m1-2v1m1 5v3m1-9v1m0 6v2m1-13v3m0 9v1m1-9v1m0 6v1m1-8v1m0 5v4m1-13v3m0 8v2m1-10v1m0 7v3m1-10v1m0 6v3m1-12v1m0 8v2m1-10v1m0 6v2m1-9v1m0 6v2m1-8v2m0 5v2m1-8v1m0 5v1m1-11v3m0 7v2m1-10v1m1-1v1m0 5v3m1-8v1m0 5v1m1-1v3m1-11v3m0 4v3m1-10v3m0 5v2m1-10v2m0 6v1m1-6v1m0 4v3m1-11v1m0 7v4m1-11v2m0 6v3m1-11v2m0 6v1m1-8v1m0 5v3m1-10v1m1-2v1m1 0v1m0 7v3m1-11v1m25-1v2m0 6v1m1-8v1m0 5v2m1-10v2m0 6v1m1-9v2m1 0v1m0 5v1m1-8v2m0 4v3m1-2v4m1-10v1m0 4v3m1-10v2m0 6v2m1-10v2m0 6v2m1-9v1m0 6v4m1-13v3m0 6v3m24-10v2m0 5v1m1-9v1m0 1v1m0 5v1m2-8v1m0 6v1m1-7v1m0 5v5m1-13v3m0 5v1m1-9v1m1-1v2m0 5v1m1-7v1m0 6v1m1-8v2m0 6v1m1-9v2m0 6v2m1-10v1m0 6v3m1-3v2m1-9v2m0 3v3m2-8v1m0 6v3m1-9v1m0 7v1m1-4v3m1-1v2m1-9v1m0 5v1m1-8v2m0 5v1m1-8v1m0 6v2m1-8v1m1-2v1m0 7v1m1-9v2m1-2v2m0 5v1m1-9v2m1-2v3m0 5v1m1-8v2m0 5v1m1-9v4m0 3v2m1-8v3m0 4v2m1-9v1m0 4v3m1-7v1m0 5v1m1-8v1m0 5v2m1-1v2m1-9v2m0 5v3m1-9v1m0 5v2m25-10v3m0 5v1m1-8v2m1-3v3m0 5v1m1-9v1m0 7v1m1-9v3m0 4v3m1-9v1m0 4v5m1-11v2m0 6v1m1-8v1m0 7v1m1-11v3m0 6v1m1-8v1m0 7v2m1-10v1m0 5v2m1-6v1m0 5v2m24-13v3m0 6v1m1 1v3m1-12v1m0 6v1m1-7v1m1 0v2m0 4v1m1-7v1m0 4v1m0 1v1m1-8v1m0 5v2m1-9v1m0 4v4m1-12v3m0 6v3m1-10v1m0 7v1m1-7v2m0 4v1m1-7v1m0 5v2m1-11v3m0 5v4m1-11v2m0 6v1m1-7v1m0 5v5m1-12v2m0 5v1m1-8v1m0 6v3m1-9v2m0 6v1m1-11v3m0 6v1m1-9v2m0 5v3m1-13v4m0 6v1m1-8v1m0 7v1m1-9v1m0 6v2m1-9v2m0 5v3m1-9v1m0 6v1m1-9v1m0 6v1m1-9v1m0 7v4m1-12v2m0 6v3m1-11v1m0 7v2m1-2v1m1-9v2m0 6v3m1-3v1m1-7v2m0 4v2m1-9v2m0 5v2m1-9v1m0 5v2m1-8v1m1-2v2m0 5v2m25-9v2m0 6v1m1-9v2m0 6v1m1-7v1m0 6v1m1-8v1m0 4v2m1-9v3m0 4v2m1-9v1m0 7v3m1-9v1m0 6v1m1-11v3m1-2v2m0 6v2m1-8v1m0 4v1m1 1v1m24-11v3m0 5v2m1-8v1m0 5v2m1-7v2m0 3v2m1-8v1m0 7v3m1-12v2m0 6v1m1-7v1m0 5v4m1-12v3m0 4v1m1-6v1m0 5v1m1-9v2m0 5v2m1-9v3m0 5v1m1-9v2m0 6v2m1-9v2m0 5v1m1-8v1m0 6v2m1-8v1m0 5v2m1-9v2m0 5v5m1-11v1m0 6v1m1-8v1m1-2v1m0 6v1m1-7v1m0 5v2m1-11v4m0 5v1m1-9v1m0 8v4m1-13v2m0 7v1m1-11v2m0 8v1m1-8v1m0 6v1m1-2v3m1-12v3m0 4v1m0 2v1m1-11v3m0 6v3m1-11v2m0 6v1m1-8v2m0 3v5m1-11v2m0 1v1m0 4v1m1-10v3m0 5v2m1-8v1m1-8v8m0 6v3m1-9v1m0 4v3m1-9v2m0 5v1m1-8v1m1 7v2m1-10v1m0 6v2m25-10v2m0 6v1m1-8v1m0 5v3m1-2v2m1-10v4m1-7v4m0 6v1m1-7v2m0 5v1m1-10v3m0 6v2m1-2v1m1-8v1m0 5v2m1-9v3m0 5v2m1-10v3m0 5v2"/><path stroke="#00b0b8" d="M30.5 252v2m0 1v1m1-4v2m0 2v2m1-4v1m0 2v2m1-7v2m0 3v2m1-8v2m1-2v3m0 1v4m1-7v1m0 3v2m1-6v2m0 1v3m1-6v2m0 3v2m1-6v2m0 1v1m1-4v2m0 1v2m24-5v5m1-6v4m0 2v1m1-8v2m0 4v1m1-6v3m0 3v1m1-6v1m0 2v1m1-6v1m0 4v1m1-5v2m0 2v2m1-6v1m0 4v1m1-5v3m0 2v1m1-7v1m0 3v2m1-5v1m0 3v1m1-1v1m1-2v3m1-8v4m0 2v1m1-5v2m0 1v1m1-6v1m0 4v1m1-7v2m0 4v2m1-6v2m0 3v1m1-4v1m0 2v2m1-6v2m0 2v1m1-5v1m1-1v1m0 3v1m1-5v1m0 2v2m1-6v6m1-6v1m0 3v2m1-6v2m0 3v1m1-6v2m0 3v1m1-6v2m0 2v1m1-5v1m0 3v3m1-7v1m1 0v1m0 2v2m1-6v2m0 2v2m1-6v1m0 4v1m1-5v1m0 2v1m1-5v1m0 4v1m1-7v2m0 3v1m0 1v1m1-6v2m0 1v1m1-5v3m0 2v1m24-5v1m0 1v3m1-5v3m0 2v1m1-7v2m0 2v2m1-7v2m1 0v1m0 2v3m1-7v3m0 2v1m1-6v2m1-1v1m1-1v2m0 2v2m1-7v1m0 3v2m1-6v3m0 1v1m1-5v1m0 3v1m24-4v1m0 1v3m1-7v2m0 2v3m1-5v1m0 2v2m1-6v1m0 4v2m1-6v1m0 2v1m0 1v1m1-7v2m0 2v1m1-5v2m0 2v1m1-6v3m0 2v2m1-8v3m0 3v1m1-4v1m0 3v1m1-1v1m1-5v1m0 4v1m1-6v1m0 2v2m1-7v3m0 3v1m1-6v1m0 4v2m1-6v1m0 3v2m1-7v1m0 4v1m1-5v6m1-9v6m0 2v1m1-6v1m0 2v1m1-4v1m0 1v2m1-5v1m0 3v2m1-4v1m0 1v2m1-5v1m0 4v1m1-8v2m0 3v1m1-5v1m0 3v2m1-5v5m1-6v2m0 3v1m1-6v1m0 3v1m1-5v1m0 3v2m1-6v1m0 2v1m1-4v2m1-3v3m0 2v2m1-3v2m1-4v1m0 4v1m2-7v2m25-1v1m0 2v3m1-7v1m1 0v1m0 2v1m1-3v1m0 3v1m1-7v2m0 3v1m1-5v1m0 3v1m1-6v1m0 3v1m1-5v1m0 3v1m1-5v1m0 3v1m1-5v2m0 3v1m1-6v2m0 2v1m1-5v1m0 3v2m24-6v1m0 4v3m1-6v5m1-8v2m1 0v1m0 2v2m1-6v2m0 3v3m1-8v3m0 2v2m1-7v2m0 3v1m1-6v1m0 3v1m1-4v2m0 1v1m1-4v1m0 2v2m1-7v2m0 2v1m0 1v1m1-1v1m1-6v3m0 1v1m0 1v1m1-10v4m0 3v1m1-3v1m0 3v1m1-6v1m1-2v1m0 3v1m1-4v1m0 4v1m1-6v1m0 4v1m1-7v2m0 3v2m1-6v1m0 3v1m1-5v1m1-2v4m0 1v1m1-5v5m1-5v1m0 2v1m1-5v1m0 4v1m1-7v3m0 3v1m1-1v1m1-5v1m0 3v1m1-5v2m0 2v2m1-6v2m0 2v1m1-5v1m0 3v1m1-5v1m0 2v1m1-5v1m0 5v1m1-6v5m1-5v1m0 2v2m1-5v2m0 1v1m25-5v3m0 3v1m1-6v2m0 1v1m1-5v1m0 3v2m1-6v1m0 3v2m1-6v1m0 3v1m1-5v1m1 4v1m1-6v2m0 2v1m1-4v1m0 2v2m1-4v1m0 3v1m1-7v1m0 4v1m1-1v1m24-6v1m0 3v2m1-6v1m1 0v2m0 3v1m1-7v1m0 3v1m1-5v1m1 0v1m0 4v1m1-7v2m1 2v1m1-4v2m0 3v2m1-7v1m0 1v1m0 1v1m1-5v1m0 1v2m1-3v1m0 1v2m1 0v1m1-6v3m0 1v1m1-6v3m0 1v2m1-2v1m1-5v1m0 4v1m1-5v1m0 2v2m1-6v1m1-1v2m0 2v2m1-6v2m0 3v2m1-7v2m0 3v1m1-5v5m1-6v2m0 2v2m1-5v1m1-1v1m0 2v2m1-4v4m1-6v2m0 2v1m0 1v1m1-6v1m0 3v1m1-6v2m0 3v1m1-5v2m1-3v1m0 3v1m1-5v1m0 4v1m1-5v2m0 2v1m1-5v1m0 1v2m1-6v3m1 3v2m25-6v5m1-7v4m0 2v2m1-6v1m0 1v2m1-5v1m0 3v2m1-6v4m0 1v1m1-6v2m0 2v3m1-5v1m0 2v1m1-5v2m0 2v1m1-6v1m0 4v1m1-5v1m0 2v1m1-4v3m0 2v1m24-7v1m0 4v1m1-6v2m0 2v2m1-6v2m0 2v1m1-6v2m0 3v1m1-8v3m0 3v3m1-5v4m1-5v1m0 3v1m1-5v1m0 4v1m1-6v1m0 2v1m1-4v2m0 3v1m1-5v2m0 1v2m1-7v3m0 3v2m1-7v1m0 2v2m1-5v2m0 2v2m1-6v1m0 2v2m1-5v1m1 0v1m0 3v1m1-1v1m1-6v1m0 3v2m1-6v1m0 2v1m1-1v1m1-3v1m0 3v2m1-8v4m0 2v1m1-2v2m1-7v3m0 1v4m1-7v3m0 2v2m1-7v1m0 3v1m1-4v1m0 2v3m1-6v2m0 2v1m1-6v2m0 1v3m1-3v3m1-6v1m0 3v1m1 0v2m1-6v1m0 3v2m2-7v2m0 2v2m1-5v1m0 2v1m1-4v2m0 1v3m25-7v1m0 4v2m1-3v2m1-6v1m0 3v1m1-5v2m0 3v1m1-5v2m0 2v2m1-6v1m0 2v1m1-4v1m0 2v2m1-5v2m0 2v2m1-6v1m0 2v1m1-4v1m0 2v3m1-7v2m0 3v2m24-7v4m0 1v1m1-6v1m0 2v3m1-2v1m1-6v6m1-5v2m0 3v1m1-5v1m0 2v2m1-7v2m0 3v3m1-7v2m0 2v1m1-5v1m0 4v2m1-5v2m1-4v1m0 3v1m1-5v2m0 1v1m0 2v1m1-8v2m0 2v3m1-5v1m0 3v1m1-6v3m0 1v2m1-5v2m0 2v2m1-7v3m0 2v1m1-6v4m0 1v1m1-5v2m0 2v1m1-6v1m0 2v2m1-5v2m0 3v1m1-4v1m1-4v2m0 3v1m1-2v1m1-4v2m0 1v3m1-7v3m0 2v2m1-5v1m0 2v2m1-6v1m0 3v1m1-5v1m1-1v2m0 3v2m1-8v3m0 3v1m1-5v2m0 1v1m1-6v1m0 5v1m1-6v2m0 2v1m1-4v1m0 3v1m1-6v3m0 2v2m1-6v2m0 2v1m1-2v2m24-6v1m0 1v1m0 1v3m1-6v3m0 1v2m1-3v1m1-6v3m0 3v1m1-5v1m0 2v1m1-5v1m0 4v1m1-6v1m0 4v1m1-5v1m0 2v1m1-4v2m0 3v1m1-8v3m0 2v1m1-4v1m0 3v1m1-6v2m0 2v1m24-5v1m0 3v1m1-5v5m1-4v5m1-5v1m0 1v3m1-6v1m0 5v1m1-6v1m0 2v2m1-6v3m0 3v1m1-7v2m1-2v1m0 4v1m1-8v4m0 4v1m1-7v3m0 2v1m1-6v1m1-2v3m0 3v2m1-7v2m0 3v2m1-6v1m0 2v3m1-8v4m0 3v1m1-7v2m1-2v2m0 2v2m1-2v3m1-2v2m1-7v2m0 4v1m1-7v2m0 3v1m1-6v1m1 0v5m1-7v3m0 2v2m1-5v1m0 2v1m1-4v1m0 2v2m1-6v1m1 4v1m1-7v2m0 4v1m1-3v4m1-6v1m0 2v3m1-6v1m0 3v1m1-6v3m0 1v2m1-7v2m0 4v2m1-7v1m0 5v1m1-7v2m0 4v1m25-6v1m0 3v2m1-6v2m0 1v2m1-6v1m0 3v2m1-6v2m0 3v2m1-6v1m0 2v2m1-5v1m1-2v2m0 3v1m1-2v1m1-5v1m0 2v3m1-6v1m0 3v2m1-6v1m1-1v1m0 3v2m25-5v1m0 3v1m1-5v1m0 4v1m1-7v3m1-2v1m0 1v1m1-3v1m0 3v1m1-7v3m0 2v2m2-6v2m0 3v1m1-5v1m0 2v3m1-6v1m0 3v2m1-7v2m0 3v1m1-6v1m0 2v3m1-5v1m1-2v1m0 3v2m1-6v2m0 3v1m1-5v1m0 4v2m1-8v1m0 3v1m1-5v2m0 4v1m1-3v2m1-5v1m0 2v2m1-6v3m0 2v1m1-5v1m0 1v2m0 1v3m1-9v3m0 2v2m1-6v1m0 3v1m1-5v1m0 1v3m1-6v1m0 3v3m1-6v5m1-5v1m0 3v1m1-4v1m0 1v1m1 0v1m1-6v1m0 2v1m1-3v1m0 2v2m1-6v5m1-4v1m0 3v1m1-5v1m0 3v1m1-5v1m0 3v1m25-5v1m0 3v1m1-5v1m0 3v2m1-6v1m0 2v2m1-7v3m0 2v2m1-3v2m1-5v1m1-1v1m0 1v4m1-6v1m0 4v2m1-7v2m0 3v1m1-6v1m0 4v2m1-7v2m1 2v1m0 1v1m24-7v1m0 3v1m1-5v1m0 5v1m1-8v2m1-1v2m0 3v2m1-5v1m0 2v1m1-5v1m0 4v1m1-6v1m0 3v1m1-6v1m0 2v1m1-5v2m0 3v1m1-6v2m0 3v2m1-1v1m1-5v1m0 3v1m1-6v1m0 2v2m2-4v1m0 3v1m1-5v1m0 1v1m0 1v1m1-2v2m1-1v3m1-7v2m0 2v2m1-6v5m1-6v1m0 4v1m1-6v2m0 3v2m1-7v2m0 3v1m1-5v1m0 3v1m1 0v1m1-7v1m0 4v1m1-7v3m0 1v3m1-6v1m0 4v1m1-7v3m0 2v2m1-6v1m0 1v1m0 2v1m1-6v4m0 1v1m1-7v4m0 2v1m1-1v1m1-5v1m0 2v2m1-6v1m0 3v1m1-5v3m0 2v1m1-6v1m0 3v1m25-5v3m0 2v1m1-6v1m0 4v1m1-5v1m0 4v1m1-6v2m0 1v1m1-1v1m1-6v2m0 4v1m1-5v1m0 4v1m1-7v2m0 2v3m1-7v2m0 3v1m1-5v1m0 2v1m1-5v1m0 4v2m24-7v1m0 3v1m1-5v2m0 2v1m1-1v1m1-5v3m0 2v2m1-7v2m0 3v1m1-2v2m1-5v1m1 2v2m1-6v2m0 2v1m1-4v1m0 2v2m1-6v2m0 3v1m1-5v1m0 2v2m1-6v6m1-5v2m0 2v1m1-5v1m0 3v1m1-5v1m0 2v3m1-6v1m0 2v4m1-8v3m0 2v1m1-5v1m0 2v2m1-2v2m1-7v3m0 3v2m1-7v1m0 4v2m1-8v3m0 1v1m0 1v2m1-6v2m0 2v2m1-8v3m0 3v1m1-6v1m0 1v2m0 1v2m1-7v1m0 4v1m1-6v1m0 4v1m1-3v1m1 1v1m1-6v1m0 3v1m1-5v2m0 1v3m1-6v1m0 2v3m1-5v2m0 1v1m1-4v1m0 3v1m1-6v1m0 2v4m1-7v2m0 2v3m1-7v3m0 1v2m25-6v2m0 1v3m1-6v1m0 3v1m1-5v3m0 2v1m1-4v1m0 2v2m1-8v2m0 2v2m1-2v3m1-6v4m0 1v1m1-6v3m0 1v1m1-4v1m0 2v1m1-4v2m0 2v1m1-5v1m0 2v2"/><path stroke="#00eaf0" d="M30.5 254v1m1-1v2m1-1v2m1-3v3m1-4v4m1-3v1m1-2v3m1-2v1m1-1v3m1-2v1m1-1v1m25 0v2m1-5v4m1-2v3m1-4v2m1-4v4m1-2v2m1-3v4m1-1v2m1-5v3m1-2v3m1-4v4m1-3v2m1-1v2m1-2v1m1-4v4m1-4v4m1-2v3m1-2v2m1-2v2m1-3v3m1-3v3m1-3v2m2-3v3m1-2v3m1-3v3m1-3v2m1-3v3m1-3v3m1-2v2m1-2v2m1-3v4m1-3v2m1-3v4m1-4v3m1-1v1m1-1v2m24-3v1m1 1v2m1-4v2m1-3v4m1-3v1m1 0v2m1-3v4m1-4v4m1-3v2m1-4v3m1-1v1m1-3v3m24-2v1m1-2v2m1-1v2m1-3v4m1-3v2m0 1v1m1-4v2m1-2v2m1-2v2m1-3v3m1-2v3m1-4v4m1-3v4m1-4v2m1-2v3m1-4v4m1-3v3m1-4v4m2-1v2m1-4v2m1-2v1m1-2v3m1-1v1m1-2v4m1-5v3m1-3v3m2-2v3m1-4v3m1-3v3m1-3v2m1-1v4m1-4v2m1-2v1m1-1v4m1-5v4m1-3v3m25-3v2m1-3v4m1-3v2m1-1v3m1-4v3m1-3v3m1-4v3m1-3v3m1-3v3m1-2v3m1-3v2m1-3v3m24-3v4m1-4v1m1-1v4m1-3v2m1-2v3m1-2v2m1-3v3m1-4v3m1-1v1m1-2v2m1-3v2m0 1v1m1-5v5m1-2v1m0 1v1m1-5v3m1-1v3m1-4v3m1-4v3m1-2v4m1-4v4m1-4v3m1-3v3m1-3v3m1-1v1m2-3v2m1-3v4m1-3v3m1-3v3m1-3v3m1-2v2m1-2v2m1-3v3m1-3v2m1-3v5m2-4v2m1-1v1m25-1v3m1-3v1m1-3v3m1-3v3m1-3v3m1-3v4m1-3v3m1-3v2m1-2v2m1-1v3m1-5v4m1-3v3m24-4v3m1-3v4m1-2v3m1-5v3m1-3v4m1-3v4m1-4v3m1-4v3m1-1v3m1-4v1m0 1v1m1-3v1m1 0v1m1-3v5m1-2v1m1-2v1m1-3v3m1-3v4m1-3v2m1-3v4m1-3v2m1-2v3m1-3v3m2-3v2m1-2v3m1-3v2m1-4v2m1 0v2m0 1v1m1-4v3m1-3v3m1-2v2m1-4v3m1-3v4m1-2v2m1-3v1m1-1v3m1-3v3m26-2v2m1-3v1m1-2v3m1 0v1m1-3v2m1-1v2m1-2v2m1-4v4m1-3v2m1 0v2m24-5v4m1-3v2m1-2v2m1-3v3m1-4v3m2-2v3m1-3v4m1-4v2m1-1v3m1-2v1m1-2v3m1-4v2m1-1v2m1-3v2m1-2v4m1-3v3m1-4v4m1-4v3m1-3v2m1 1v2m1-4v3m1-2v2m1-4v3m1-2v1m1 0v2m1-4v3m1-2v2m1-1v2m1-3v1m1-1v1m1-2v3m1-3v4m1-3v3m1-4v4m1-3v2m1-2v2m1-1v1m25-3v4m1-4v3m1-3v3m1-2v3m1-2v2m1-3v2m1-2v2m1-1v2m1-3v2m1-2v2m1-2v3m24-1v1m1-4v2m1-1v2m2-2v3m1-3v2m1-3v3m1-2v2m1-3v4m1-4v1m0 2v1m1-4v3m1-2v1m1-2v2m1-1v3m2-2v2m1-2v2m1-1v1m1-2v2m1-4v2m1-1v3m1-2v2m1-4v3m1-3v2m1-1v1m1-1v2m1-2v2m1-3v3m1-3v3m1-2v3m1-3v3m1-2v1m1-4v5m1-3v2m1-2v3m1-2v2m1-2v2m1-5v4m24-3v1m0 1v1m1 0v1m1-5v4m1-2v3m1-3v2m1-3v4m1-4v4m1-3v2m1-1v3m1-4v2m1-2v3m1-3v2m24-3v3m3-2v1m1-2v5m1-4v2m1-1v3m1-4v3m1-4v4m1-3v4m1-3v2m1-4v4m1-3v3m1-3v3m1-3v2m1-1v3m1-4v4m1-4v2m1-2v2m1-2v3m1-3v4m1-4v3m1-4v4m2-3v2m1-2v2m1-2v2m1-3v5m1-4v3m1-4v4m1-4v2m1-1v2m1-2v3m1-2v1m1-3v4m1-4v5m1-4v4m25-4v3m1-2v1m1-3v3m1-2v3m1-3v2m1-2v3m1-3v3m1-4v3m1-3v2m1-2v3m1-3v5m1-5v3m24-3v5m1-4v3m1-3v4m1-3v3m1-4v1m0 1v2m1-4v3m1-3v2m1-4v5m1-3v3m1-3v2m1-2v3m1-3v3m1-4v2m1-1v2m1-3v3m1-2v3m1-3v4m1-5v3m1-2v4m1-5v3m1-2v2m1-1v2m1-3v1m0 2v1m1-3v2m1-3v3m1-3v1m1-2v3m2-2v3m1-2v1m1-2v3m1-4v2m1-1v2m2-2v3m1-3v3m1-3v3m25-3v3m1-3v3m1-3v2m1-2v2m1-3v2m1-2v3m1-3v1m1-1v4m1-3v3m1-4v4m1-3v3m1-3v2m0 1v1m24-5v3m1-3v5m1-5v4m1-3v3m1-2v2m1-3v3m1-3v3m1-4v2m1-2v3m1-3v3m1-2v3m1-3v3m1-4v2m1-3v6m1-4v3m1-3v1m0 1v1m1-5v4m1-2v3m1-2v2m2-4v4m1-3v3m1-3v3m1-3v3m1-4v5m1-5v4m1-3v1m1-2v4m1-3v2m1-3v1m0 1v2m1-1v1m1-2v2m1-3v3m1-3v2m1-3v3m1-1v2m1-4v3m25-1v2m1-4v4m1-3v4m1-3v1m1-3v3m1-3v4m1-3v4m1-4v2m1-2v3m1-3v2m1-3v4m24-4v3m1-2v2m1-2v2m1-1v2m1-3v3m1-4v3m1-2v3m1-4v3m1-2v2m1-2v2m1-2v3m1-3v2m2-1v2m1-3v3m1-3v2m1-2v2m1-1v2m1-3v2m1-3v3m1-2v3m1-4v4m1-3v1m0 1v1m1-2v2m1-3v3m1-4v1m1-1v4m1-4v4m1-4v2m1-1v3m1-4v3m1-2v1m1-2v2m1 0v1m1-2v3m1-4v2m1-1v2m1-1v1m25-2v1m1-2v3m1-1v2m1-2v2m1-4v2m1-2v2m1 1v1m1-2v1m0 1v1m1-6v1m0 1v2m1-1v2m1-3v2"/><path stroke="#606000" d="M21.5 252v1m0 8v1m1-11v1m0 11v1m1-16v1m0 13v3m1-13v1m1 8v3m2-13v1m1 12v5m1-20v2m0 12v1m1 201v1m0 13v1m1-17v3m0 13v2m1-18v5m0 10v3m1 0v1m1-3v1m1-22v9m0 12v2m1-1v2m1-18v3m0 13v2m1-17v1m0 14v1m1-15v3m1 9v6m1-17v1m0 10v1m1-13v1m0 13v1m1-16v2m0 11v1m1-16v2m0 12v1m1-1v1m1-17v5m0 11v1m1-1v2m1-12v2m0 8v1m1 2v6m1-22v2m0 10v3m1-1v3m1-15v1m0 10v1m1 0v2m1-21v6m0 13v6m1-21v4m0 11v11m1-24v1m1-1v1m0 15v4m1-20v1m2-1v2m0 1v1m0 9v4m1-18v2m0 12v1m1-15v1m0 13v5m1-5v4m1-16v2m0 11v2m1-16v2m0 13v2m1-4v1m1-15v2m0 19v2m1-26v5m0 11v3m2-18v3m0 14v2m1-16v1m0 12v1m2-16v3m0 12v1m1-15v3m1-2v1m0 13v3m1-23v6m1-2v3m1-5v5m1-1v1m0 14v2m1-18v2m0 12v3m1-17v1m0 14v1m1-16v2m0 11v4m1 1v3m1-22v3m0 11v4m1-18v2m0 14v1m2-22v6m1 1v2m0 13v2m1-4v4m1-19v1m1 2v1m0 11v1m1-18v4m0 11v2m1-15v1m0 14v2m1-14v2m1-3v1m1 0v2m1-7v2m1 4v1m0 11v1m1-14v1m0 11v1m1-2v3m1-18v4m0 11v2m1-216v1m1-22v9m0 15v1m1-21v3m2 1v1m0 11v3m1-14v1m1-9v4m0 15v1m1-13v1m0 11v1m1 1v2m1-2v2m1-2v1m1-13v1m0 11v1m1-2v2m1-14v1m1-2v1m0 12v2m1-2v5m1-18v2m0 11v2m1-14v1m0 10v2m1-14v2m0 11v1m1-13v2m0 9v3m1-17v3m0 1v2m0 10v1m1-17v4m0 10v1m1-11v1m1 224v1m1-14v1m0 14v1m1-16v2m1 13v3m1-16v1m0 12v2m1-22v4m0 17v2m1-18v1m0 13v6m1-6v12m1-25v3m2-11v10m0 12v2m1-15v1m0 13v3m1-21v5m1-5v2m1-6v8m0 10v2m1-17v3m0 16v5m1-21v1m0 14v3m1-19v3m0 13v2m2-17v3m1-3v2m0 10v1m1-10v1m1-1v1m1-2v1m0 14v1m1-19v1m0 13v2m1-18v4m1 0v3m0 11v1m1-16v2m0 15v1m2-5v2m1-17v5m1-1v1m0 12v1m1-19v3m0 13v3m1-16v2m1-5v4m0 15v7m1-25v3m1 12v1m1-13v1m0 11v2m2-16v1m0 14v2m1-16v2m0 11v2m1-14v1m0 11v1m1-13v1m1 12v3m2-3v2m1-16v1m0 14v4m1-17v1m1-1v1m0 11v2m1-14v1m1-3v1m1 14v4m1-4v2m1-18v1m0 15v1m1-17v3m0 11v1m1-1v2m1-14v3m0 12v1m1-15v1m0 11v2m1-14v2m0 11v1m1-20v5m0 13v1m1-14v2m0 11v4m1-17v2m0 11v1m1-16v3m0 17v4m1-22v1m0 12v1m1-12v1m0 10v10m1-9v1m1-16v1m0 13v1m1 0v2m1-15v1m0 10v5m1-17v4m0 10v1m1-16v1m0 14v2m2-231v2m0 11v2m1-15v1m2 10v7m1-22v5m0 13v1m1-13v1m0 9v1m1-15v3m0 13v2m2-17v2m0 11v1m2-12v1m0 10v1m1-14v1m0 12v1m1-16v3m0 13v3m1-3v2m1-16v2m0 14v1m1-5v3m1-2v2m1-16v5m0 10v1m1-13v1m0 10v1m1-2v1m1-17v5m0 14v1m1-15v1m0 11v2m1-13v1m0 12v3m1-15v1m0 11v1m1 202v1m1-2v1m0 11v1m1-14v1m0 14v1m2-15v1m0 11v2m1-18v4m1-5v6m0 10v1m1-17v4m0 16v4m1-5v1m1-3v2m1-14v2m1-8v2m0 17v1m1-16v2m0 13v3m1-4v3m1-4v1m1 2v1m1-17v5m0 8v3m1-14v2m0 12v1m1-17v3m0 10v4m1-20v3m0 12v1m1-11v1m0 13v1m1-17v2m0 13v4m1-18v1m0 13v1m1-14v1m0 12v1m1-16v1m0 13v1m1-14v1m0 14v1m1-16v1m0 13v1m1-18v2m0 14v1m1-17v4m1-3v4m0 13v3m1-5v3m1-15v1m0 14v2m1-4v1m1-17v4m0 11v1m1-13v1m0 14v1m1-3v2m1-3v2m1-19v3m0 13v1m1-14v3m0 11v3m1-14v1m1-2v1m1-1v1m2-4v3m0 13v2m1-17v3m1 1v1m0 9v2m1-17v2m0 1v1m0 9v5m1-17v2m1-2v2m0 12v1m1-1v6m1-22v2m1 1v1m1-2v1m1 0v2m0 11v1m1-18v2m0 15v2m1 1v1m1-16v1m1-4v4m0 12v2m1-18v3m0 12v1m1-13v2m0 9v2m1-13v1m0 11v1m1-21v10m0 10v1m1-4v1m1-9v1m1-3v1m0 12v1m1-13v2m0 10v3m1-20v4m0 12v7m1-5v1m1-13v1m0 12v1m1-20v4m1-2v3m0 11v2m1-1v1m1-229v1m0 13v1m1-14v1m0 10v1m1 2v6m1-21v2m0 10v2m1-12v1m0 9v2m1-2v1m1 1v1m1-18v3m0 13v6m1-17v1m0 9v1m1-11v1m1-4v1m0 11v1m1 1v1m1-13v1m0 10v1m1-14v3m0 11v1m1-1v3m1-16v3m1-2v1m0 11v3m1-16v2m0 11v1m1-17v1m0 14v2m1-15v2m0 11v8m1-20v1m0 12v2m1-13v1m0 10v3m2-16v2m0 9v1m1 199v4m0 13v2m1-13v1m0 9v1m1-13v2m0 12v4m1-18v1m0 14v1m1-4v2m1-13v1m1-3v2m0 12v6m1-7v5m1-19v4m0 11v3m1-17v2m1-4v2m0 14v10m1-10v1m1-17v3m1 0v1m0 13v1m1-4v2m1-14v3m0 13v2m1-5v2m1-1v1m1-17v2m0 15v2m1-16v1m0 12v3m2-16v2m0 11v2m1-15v3m0 14v1m1-4v1m1-17v3m0 11v6m1-19v2m0 13v1m1-15v1m0 11v5m1-15v1m0 9v1m1-12v2m0 10v1m1-15v1m0 14v2m1-16v1m0 12v1m1-14v3m0 11v2m1-15v1m1 10v3m1-14v2m0 12v1m1-5v4m1-15v1m0 12v2m1-15v1m1-2v3m0 15v1m1-17v1m0 12v2m1-3v1m1-17v3m0 12v2m1 0v1m1-21v5m0 13v2m1-16v2m0 13v2m1-13v2m2-4v1m0 11v1m2-14v3m0 9v5m1-18v1m0 15v3m1-3v2m1-16v2m1-5v3m0 12v1m1 1v9m1-24v3m0 10v2m1-15v2m1 14v1m1-18v4m0 12v2m1-2v3m1-17v1m0 12v2m1-16v1m1-1v1m1 13v1m1-15v1m0 13v1m1-13v2m0 10v2m1-19v2m1 17v11m1-26v1m0 12v2m1-14v1m0 11v3m1-16v2m0 11v2m1-3v3m1-230v3m0 9v1m2-14v4m1-5v4m0 11v1m1-14v2m1-3v2m0 12v1m1-12v1m0 9v2m2-2v5m1-18v3m0 11v2m1-15v1m0 14v3m1-18v1m0 12v1m1-13v1m0 11v2m1-15v2m0 11v1m1-16v3m0 12v5m1-19v1m1-8v9m0 12v2m1-14v1m0 10v1m1 0v1m1-11v1m1-6v1m1 0v2m0 11v1m1 1v2m1-18v2m0 13v3m1 195v6m0 10v3m1-15v1m0 14v2m1-15v1m0 9v8m1-6v1m2-16v2m0 12v2m1-13v1m1 9v4m2-17v1m0 12v8m1-20v1m0 12v4m1-5v2m1-1v1m2-2v1m2-14v1m0 14v1m1-3v2m1-12v1m0 10v3m1-1v2m1-15v1m0 9v1m2-13v2m0 11v1m1-13v1m0 10v1m1 1v1m1-2v1m1-14v1m0 12v3m1-15v2m1-4v2m0 13v2m1-16v1m0 15v1m1-18v2m0 1v1m0 10v1m1-15v4m0 11v2m1-16v2m0 14v2m1-16v1m0 13v1m1-19v1m0 15v3m1-17v1m0 14v1m1-17v2m1-2v1m0 14v5m1-21v2m0 12v1m1-13v1m0 11v1m1-14v1m0 15v1m1-19v4m1-2v1m0 11v1m1 3v1m1-4v2m1-2v1m1-16v1m0 15v1m1-17v4m0 12v2m1-3v1m1-15v4m2-3v1m0 13v2m1-15v1m0 12v2m1-15v1m1 0v1m0 12v5m1-18v1m0 13v2m1-4v1m1-14v1m0 12v2m2-15v2m0 12v3m1-17v1m0 12v3m1-15v1m0 11v1m1-16v4m0 10v2m1-15v3m1 11v2m1-14v1m0 12v2m2-17v2m0 13v1m1-15v1m0 13v3m1-18v2m1-2v1m0 13v9m1-29v3m0 18v7m1-238v3m0 11v3m1-18v2m1-1v1m0 15v1m1-2v2m1-15v1m0 2v1m0 8v1m1-11v1m0 9v3m1-15v2m0 12v1m1-16v1m0 14v1m1-2v2m1-15v1m0 10v6m1-17v1m2-4v5m0 10v1m1-10v1m0 8v1m1-13v2m0 11v3m1-16v1m0 12v1m1 0v1m1-13v1m0 10v1m1-13v1m1 10v1m1-17v2m0 15v4m1-4v5m1-16v1m0 11v3m1-16v1m0 13v2m1 199v1m0 12v2m1-16v1m0 12v7m2-22v2m0 13v2m1-13v1m0 9v6m1-24v7m0 14v1m1-14v1m0 12v2m1-17v1m0 12v1m1-19v4m0 15v6m1-19v2m0 11v4m1-17v1m0 11v1m1-15v3m1-4v2m0 14v1m1-16v4m0 13v3m1-18v1m1-1v2m1-4v1m0 12v4m1-21v6m1-2v2m0 11v2m1-18v4m0 12v3m1-14v3m0 10v3m1-19v4m0 13v1m1-4v2m1-1v2m1-16v3m1-4v3m1-2v2m0 13v1m1-14v1m0 11v2m1-15v1m0 14v2m1-16v1m1-3v1m1-2v3m0 13v1m1-19v5m0 12v1m1-21v1m1 6v1m0 11v1m1 1v1m1-3v1m1-12v1m1-2v1m0 12v1m1-18v3m0 14v1m1-18v6m0 10v1m1-14v1m0 13v1m1-1v3m1-3v2m1-13v1m0 12v6m1-19v1m0 11v3m1-24v8m1 11v1m1-11v1m0 12v3m2-4v3m1-5v1m1-11v1m0 10v1m1-14v1m0 13v1m1-15v1m0 11v1m1-12v1m0 12v4m1-21v1m0 17v1m1-3v2m1-16v1m0 15v5m1-20v1m0 12v1m1-15v2m0 12v5m1-17v1m0 9v3m1 4v2m1-24v3m2-2v2m0 17v1m1-14v1m0 11v1m1-15v1m0 10v1m1-14v2m0 11v1m1-12v1m0 11v6m1-18v1m0 11v2m1-15v2m1-223v7m1 12v4m1-3v1m1-13v1m0 10v2m1-15v2m0 10v1m1-15v4m1 10v1m1 0v2m2-17v1m0 15v2m2-23v8m1-3v3m0 11v1m1-14v1m0 13v6m1-29v9m0 14v1m1-16v4m0 15v1m1-17v1m0 11v3m1-14v1m1-4v1m1 0v2m0 12v1m2-14v1m0 11v3m1-4v1m1 215v2m1-1v1m1-19v3m0 15v6m1-21v3m0 11v1m1-17v4m1 0v1m0 12v1m1-15v2m1 11v5m1-18v1m1 13v3m1-16v1m0 12v1m1-14v1m0 9v1m1-14v2m0 14v1m1-16v3m1 10v4m1-3v4m1-17v2m0 11v1m1-17v1m0 16v3m1-17v1m0 10v4m1-17v1m1 14v1m1-15v1m1 1v1m0 10v2m1-16v2m0 14v1m1-14v1m1-3v2m0 12v1m1-13v1m0 12v2m1-3v3m1-19v4m0 10v1m1-12v1m1 12v1m1-2v9m1-20v1m2-3v2m0 14v3m1-17v1m0 11v1m1 0v2m1-15v1m0 9v7m1-2v2m1-18v3m0 9v4m1-2v3m1-19v4m1-5v6m0 10v3m1-17v1m0 15v4m1-20v3m1-3v3m0 12v1m1-15v1m0 13v3m1-4v3m2-15v1m0 11v1m1-13v1m0 11v1m1-14v1m0 13v4m2-23v5m1-2v5m0 9v1m1-14v1m0 15v3m1-16v1m0 10v3m1-3v1m1 0v1m1-15v1m1-1v2m0 11v1m1 0v3m1-20v5m0 10v2m1-13v2m0 8v3m1-14v2m1-6v5m0 14v2m1-17v1m0 12v2m1-19v5m0 12v7m1-22v3m0 13v4m1-21v3m0 12v3m1-15v1m1 0v1m0 11v2m1-230v2m1-3v2m0 11v1m1-12v2m0 9v1m1-12v1m1 0v1m0 11v1m1-15v1m0 10v2m1-16v2m0 14v1m1-2v1m1-12v1m0 10v1m1-2v2m1-18v6m0 13v4m1-16v1m1-2v2m0 9v3m1-2v1m1-15v1m0 1v2m1 11v1m1-13v1m1-2v1m0 12v4m1-7v1m1-13v3m0 11v5m2-18v1m0 14v2m1-21v2m0 15v1m1-18v4m0 13v4m1 197v3m0 11v3m1-17v2m0 13v3m1-3v6m1-9v1m1 3v4m1-21v1m0 14v1m1-16v2m0 14v1m1-15v2m0 14v2m1-16v1m0 12v2m1-21v4m0 12v3m1-1v1m1-2v1m1-2v1m1-17v5m0 11v1m1-14v2m0 13v3m1-19v1m0 15v1m1-16v1m0 14v1m1-15v1m0 13v1m1-15v1m0 12v2m1-17v2m0 13v1m1-14v2m0 11v1m1-13v1m0 10v4m1-18v2m0 13v4m1-15v1m0 10v2m1-16v4m0 9v2m1-13v1m0 10v3m1-18v4m0 12v4m1-3v1m2-3v1m1-14v1m0 13v1m1-17v4m0 12v2m1-14v1m0 12v1m1-17v2m0 13v2m1-21v2m0 15v6m1-18v1m1 0v2m0 11v1m1-16v1m1-4v8m0 9v1m1-16v4m0 12v1m1-17v3m0 13v2m2-15v1m1 11v1m1-14v1m0 15v2m1-4v1m1-14v1m0 13v1m1-1v1m2-15v1m0 14v2m1-4v1m1-14v1m0 12v3m1-14v1m0 12v2m1-3v2m1-17v1m0 15v6m1-24v4m0 13v1m1-18v4m0 14v1m1-1v5m1-8v2m1-13v1m1 11v1m1-14v2m0 10v1m1-13v2m0 11v1m1-15v1m0 11v1m1-11v1m0 12v1m1-17v2m0 12v3m1-17v2m1 15v1m1-15v1m0 11v1m1-13v1m0 11v2m1 5v4m1-11v1m1-232v4m0 12v1m1-15v1m0 12v1m1-18v4m1 2v2m0 10v1m1-15v1m0 12v1m1-13v1m0 12v1m2-12v1m0 9v2m1-13v1m0 11v3m1-15v2m0 12v1m1-3v6m1-19v1m1-3v1m0 16v5m2-24v4m0 15v1m1-21v6m0 13v1m1 0v5m1-21v1m0 12v3m1 0v1m1-15v1m0 11v11m1-22v1m0 11v5m1-21v1m0 17v1m1-17v1m0 11v1m2 202v1m0 12v3m1-14v1m0 11v1m1-18v5m1 12v1m1-13v1m1-8v7m0 11v1m1-13v1m0 11v7m1-6v7m1-9v3m1 0v4m1-18v1m0 12v1m1-19v5m0 11v1m2-12v1m1-4v3m1-3v2m1 11v1m1-13v1m0 13v2m1-14v2m0 13v2m1-21v4m0 13v1m1-14v1m1-5v2m0 13v1m1-16v4m0 13v3m1-17v1m0 11v1m1-12v2m0 11v1m1-16v1m0 14v1m1-21v8m0 10v3m1-16v2m0 11v1m1-13v2m1-4v1m0 15v1m1-16v1m0 13v3m1-19v3m0 13v2m1-2v6m1-20v1m0 12v3m1-14v1m1-1v1m0 13v2m1-16v1m2-6v6m0 10v2m1-24v3m0 20v1m1-19v5m0 13v1m1-13v1m0 14v5m1-8v1m1-14v1m1 1v1m1 9v1m1-15v2m0 12v1m1-13v2m0 9v2m1-11v1m0 10v3m2-18v2m0 13v1m1-15v3m0 12v2m1-3v2m1-2v1m1 1v3m1-18v1m0 12v1m1-17v5m0 10v1m1-14v1m1-4v4m0 13v4m1-18v2m0 14v2m1-18v4m1-5v4m0 11v1m1-14v2m0 9v1m1-13v2m0 11v1m1 3v2m1-3v1m2 0v1m1-17v1m0 12v3m1-17v1m0 15v2m1-4v1m1 0v1m1-234v2m0 14v2m1-14v1m0 11v1m1-23v6m0 16v2m1-16v2m0 14v2m1-15v1m0 11v1m1-14v2m0 14v1m1-23v7m0 13v2m1-13v1m0 7v3m1-13v1m1-8v9m0 10v2m1-3v1m1-12v1m1-7v6m0 14v1m1-4v1m1-13v1m0 10v3m1-12v1m0 13v3m1-17v1m1-10v7m0 14v4m1-4v2m1-16v1m1 12v4m1-18v3m1-4v3m1-2v2m0 12v1m1 214v1m1-14v1m0 12v2m1-16v2m0 12v3m1-3v2m1-17v4m0 11v1m1-21v7m0 13v1m1-14v2m0 10v2m1-18v7m1 12v3m1-18v1m0 12v4m1-17v1m0 14v1m1-17v1m0 12v3m1-15v3m1-4v3m1-1v2m0 9v1m2-12v1m0 12v1m1-17v1m0 15v2m1-20v6m1-7v6m0 11v5m1-18v2m0 11v1m1-12v1m2-3v2m0 12v3m1-14v1m0 10v1m1-12v1m0 10v1m1-18v4m1 15v5m2-26v6m0 13v1m1-13v1m1-2v3m1-2v1m0 12v3m1-17v2m1 11v2m1-15v2m0 10v1m1 2v1m1-20v3m0 14v1m1-14v1m0 12v1m1-13v1m0 12v1m1-1v3m1-4v1m1-1v3m1-16v1m0 13v2m2-3v4m1-18v2m0 13v1m1-15v2m0 10v2m1-12v1m0 11v4m1-24v7m1 1v1m1 10v2m1-15v1m0 12v6m1-22v2m0 13v2m1-15v2m0 11v2m1-16v3m0 12v1m1-13v1m0 12v2m1-14v1m0 11v1m1-4v1m1-13v4m0 10v2m1-18v3m0 13v1m1-14v2m2-6v5m0 15v4m1-19v1m1-2v1m0 12v2m1-14v1m0 10v1m2-1v2m1-15v1m1 13v1m1-15v2m0 12v4m1-219v1m1-13v2m0 9v5m1-16v1m0 10v4m1-16v2m0 10v1m1-14v1m0 13v2m1-17v1m0 14v1m1-13v2m0 10v2m1-14v1m0 11v2m1-17v3m0 12v1m1-1v2m1-15v1m1-1v1m0 15v1m1-25v7m1 0v3m0 12v3m1-15v1m1-8v6m1-1v2m0 10v1m1-15v4m0 10v2m1-13v1m0 15v1m1-6v2m1-16v4m0 11v2m1-17v5m0 9v8m1-22v4m0 10v1m1-11v1m0 9v1m1 196v6m0 12v4m1 2v2m1-8v3m1-14v1m0 11v1m1-15v3m0 11v2m1-14v2m0 11v2m1-17v2m0 12v1m1-11v1m0 10v1m1-2v3m1-15v1m0 14v8m2-23v1m0 13v1m1-17v1m0 16v2m1-19v3m0 14v1m1-18v1m0 14v1m1-13v1m0 11v1m0 1v1m1-20v1m1 0v3m0 11v1m1 3v3m1-19v1m0 11v1m1-13v2m1 13v1m1-16v1m1 0v2m0 11v1m1-16v2m0 12v2m2-14v1m1 13v2m1-16v1m1-5v2m0 13v1m1-13v3m1 11v2m1-2v1"/><path stroke="#a0a000" d="M22.5 252v2m0 7v2m1-14v3m0 9v1m1-9v1m0 7v1m2-11v3m0 8v2m1-12v1m0 8v4m1-14v2m0 9v2m1-13v2m0 9v1m1 203v2m0 8v3m1-13v1m0 10v2m1-11v1m0 8v1m1-2v5m1-18v4m0 9v3m1-12v1m0 9v2m1-13v4m0 7v3m1-13v1m0 9v3m1-14v1m0 10v3m1-11v1m0 7v1m1-12v1m0 9v2m1-10v1m0 6v3m1-11v1m0 8v4m1-13v1m0 9v1m1-13v2m0 8v2m1-10v1m0 8v1m1-11v2m0 7v2m1-11v2m0 8v1m1-8v1m0 6v1m1-10v3m0 7v3m1-14v2m1-3v2m0 8v3m1-11v3m0 5v2m1-11v2m0 9v1m1-13v3m0 8v2m1-11v2m0 7v2m1-12v1m0 10v4m1-15v1m0 11v3m1-15v2m0 11v1m1-15v4m0 6v5m1-13v1m0 8v2m1-12v1m0 10v1m1-13v2m0 10v1m1-13v3m0 9v1m1-10v1m0 7v3m1-12v1m0 11v1m1-15v3m0 8v2m1-12v2m0 12v5m1-19v2m0 8v1m1-9v1m0 8v1m1-13v3m0 9v2m1-13v3m0 7v2m1-14v3m0 10v1m1-12v1m1 0v2m0 8v2m1-13v3m0 7v3m1-14v3m0 9v2m1-13v2m0 8v1m1-11v2m0 9v2m1-13v2m0 10v2m1-14v2m0 9v1m1-13v2m0 10v2m1-13v3m1-2v2m0 8v5m1-15v1m0 7v2m1-12v3m0 9v2m1-12v2m0 6v3m1-14v4m0 9v1m1-11v2m0 7v4m1-15v2m0 10v1m1-14v3m0 11v2m1-13v1m0 9v1m1-13v2m0 8v1m1-12v3m0 9v2m1-1v3m1-14v2m0 8v2m1-10v1m0 8v1m1-15v5m0 8v2m1-10v1m0 9v1m1-12v1m1-3v5m0 6v1m1-11v2m1-215v2m0 7v1m1-12v1m0 11v3m1-17v5m1-4v3m0 9v2m1-13v3m1-2v2m1-7v7m0 6v2m1-11v2m0 8v1m1-12v3m0 9v2m1-12v1m0 8v3m1-13v3m0 8v2m1-11v1m0 8v2m1-12v2m0 7v2m1-11v2m0 7v2m1-12v1m0 10v1m1-11v2m0 8v1m1-11v1m0 9v1m1-11v1m0 8v1m1-10v2m0 8v1m1-3v2m1-11v1m0 2v1m0 8v1m1-12v3m0 5v2m1-9v1m0 8v2m1 201v2m0 8v2m1-12v3m0 7v4m1-13v2m0 8v3m1-12v1m0 10v1m1-12v1m0 10v1m1-12v2m0 9v2m1-15v2m0 9v2m1-13v3m0 6v4m1-10v1m0 7v3m1-13v2m0 8v2m1-11v1m0 10v1m1 0v1m1-13v1m0 9v1m1-14v2m0 11v3m1-14v1m0 8v1m1-12v4m0 9v3m1-15v2m0 10v2m1-13v2m0 8v3m1-14v2m0 9v1m1-10v1m0 10v2m1-14v1m1 1v2m0 6v5m1-13v1m0 7v4m1-13v1m0 10v3m1-17v3m0 9v1m1-12v2m0 9v2m1-10v1m0 8v2m1-13v2m0 9v4m1-15v3m0 7v2m1-2v1m1-10v1m0 7v3m1-11v1m0 9v2m1-15v3m0 9v1m1-11v3m0 7v3m1-14v2m0 9v4m1-15v3m0 9v2m1-3v1m1-11v1m0 9v1m1 0v1m1-14v5m0 8v1m1-12v2m0 8v1m1-11v1m1-1v2m0 9v1m1-13v3m0 9v1m1-12v1m0 10v4m1-15v1m0 9v2m1-13v3m0 8v3m1-12v2m1 7v2m1-11v2m0 8v2m1-14v2m0 10v1m1-13v1m0 12v1m1-14v3m0 9v2m1-15v4m0 8v3m1-13v1m0 9v1m1-11v3m0 6v2m1-9v1m0 8v3m1-13v1m0 9v1m1-10v1m0 7v3m1-14v1m0 10v2m1-11v1m0 8v2m1-11v1m0 8v2m1-12v2m0 9v6m1-17v2m0 7v3m1-10v1m0 7v2m1-11v2m0 7v3m1-14v2m0 9v2m1-12v1m0 11v1m1-3v1m1-8v1m0 8v1m1-14v3m0 8v3m1-12v1m0 8v1m1-225v1m0 8v2m1-12v3m0 8v5m1-16v1m0 10v4m1-16v3m0 6v2m1-10v3m0 8v2m1-11v1m0 7v1m1-11v3m0 7v3m1-3v1m1-11v2m1-2v1m0 8v2m1-10v2m0 6v2m1-12v3m0 8v1m1-12v3m0 7v3m1-13v3m1-2v2m0 9v3m1-15v2m0 8v1m1-11v2m0 8v2m1-9v1m0 8v1m1-11v1m0 8v1m1-12v4m1-4v2m0 9v3m1-13v3m0 7v1m1-10v1m0 10v1m1-11v1m0 7v3m1 204v1m0 8v1m1-11v2m0 8v1m1-12v1m0 10v3m1-3v3m1-13v1m0 9v1m1-12v1m1 0v2m0 7v1m1-12v2m0 10v4m1-15v2m0 10v2m1-14v3m0 8v1m1-2v2m1-16v4m0 9v4m1-13v2m0 9v2m1-11v1m0 7v2m1-11v1m0 8v1m1 2v1m1-11v1m1-2v1m0 8v3m1-13v1m0 8v1m1-13v3m0 8v1m1-9v2m0 9v2m1-14v2m0 10v1m1-13v2m0 8v3m1-1v1m1-14v3m0 8v2m1-2v4m1-14v2m0 9v2m1-15v2m0 10v2m1-12v2m0 9v1m1-11v1m0 8v4m1-15v3m0 9v1m1-11v2m0 9v3m1-14v3m0 7v2m1-2v1m1-11v2m0 9v3m1-15v2m0 9v2m1-12v1m0 8v2m1-14v3m0 8v2m1-10v1m0 9v1m1-10v1m0 8v2m1-12v1m0 9v3m1-13v1m0 9v2m1-13v3m0 7v2m1-12v2m0 10v1m1-12v1m0 10v1m1-3v2m1-13v1m0 1v2m0 6v1m1-10v2m0 9v2m1-13v1m0 9v2m1-13v3m0 8v2m1-14v3m0 9v1m1-11v2m0 8v1m1-12v2m0 8v2m1-10v1m0 8v2m1-15v5m0 9v1m1-11v2m0 8v4m1-14v2m0 7v1m1-10v2m0 8v2m1-13v2m0 8v2m1-2v1m1-10v1m0 9v1m1-2v2m1-13v1m1 11v2m1-13v1m0 10v1m1-1v1m1-13v1m1 0v3m0 8v2m1-3v4m1-15v2m0 10v3m1-14v2m0 8v1m1-11v3m0 8v1m1-227v1m0 10v2m1-12v1m0 8v1m1-13v2m0 10v4m1-13v1m0 7v2m1-9v1m0 7v1m1-10v1m0 8v1m1-11v2m0 10v1m1-14v2m0 9v2m1-2v1m1-9v1m0 6v2m1-12v2m0 8v1m1-8v1m0 7v2m1-2v1m1-10v1m0 9v1m1-3v3m1-10v1m0 8v2m1-12v2m0 7v2m1-2v2m1-15v5m0 8v1m1-11v2m0 8v1m1-11v2m0 8v2m1-10v1m0 8v1m1-11v1m0 8v1m1-10v1m1 212v2m0 9v2m1-2v1m1-10v1m0 9v2m1-13v1m0 10v3m1-15v2m0 8v2m1-10v2m0 7v3m1-13v1m0 9v2m1-12v2m0 8v1m1-10v2m0 8v1m1-12v3m0 8v4m1-17v2m0 11v1m1-13v2m0 9v2m1-13v1m0 11v2m1-13v2m0 9v2m1-15v3m0 8v1m1-9v1m0 9v3m1-13v1m1-5v4m0 10v1m1-14v2m0 12v1m1-13v2m0 7v3m1-13v2m0 11v2m1-13v1m0 8v2m1-2v6m1-16v1m0 10v2m1-13v2m0 7v2m1-11v2m0 9v2m1-13v2m0 8v1m1-9v1m0 6v2m1-9v1m0 8v1m1-13v3m0 9v2m1-13v2m0 8v2m1-10v2m0 7v2m1-12v2m0 7v2m1-11v1m0 6v3m1-9v1m0 8v3m1-14v2m0 7v1m1-10v2m1-2v1m0 10v1m1-11v1m0 10v4m1-15v1m0 9v2m1-13v3m1-4v2m0 9v1m1-13v4m0 10v1m1-15v4m0 8v1m1-12v1m0 11v1m1-1v2m1-13v2m0 8v1m1-11v1m1-3v3m0 9v1m1-10v2m0 6v1m1-12v4m0 10v1m1-13v2m0 10v1m1-12v1m0 8v3m1-14v3m0 8v1m1-12v4m0 8v2m2-13v2m0 8v3m1-14v4m0 7v2m1-11v1m0 8v3m1-12v1m0 8v3m1-13v2m1-3v4m0 9v1m1-14v2m0 10v2m1-15v4m0 8v2m1-13v3m0 8v2m1-10v2m0 7v1m1-15v5m0 8v2m1-15v5m0 9v3m1-14v2m0 9v1m1-11v2m0 8v1m1-11v1m0 8v2m1-13v3m0 8v1m1-224v1m0 7v1m1-11v1m0 9v3m1-11v1m0 7v2m1-11v2m0 8v1m1-11v2m0 8v2m1-13v2m0 9v1m1-2v1m1-11v1m0 9v3m1-13v1m1 0v1m0 7v3m1-12v2m0 7v5m1-14v2m0 8v2m1-11v2m0 8v1m1-11v1m0 9v1m1-12v2m1-3v3m0 7v2m1-11v2m0 9v1m1-11v1m0 7v2m1-11v2m0 9v1m1-9v1m0 7v1m1-14v4m0 8v7m1-17v1m1-1v3m0 6v4m1-14v2m0 8v3m1 204v1m1-2v2m0 8v4m1-12v1m1-7v5m0 11v1m1-14v4m0 8v3m1-14v2m0 9v1m1-10v1m0 7v2m1-12v4m0 6v1m1-10v1m0 9v2m1-14v3m0 7v2m1-11v3m0 8v1m1-12v1m0 8v2m1-11v1m0 10v1m1-12v1m0 9v4m1-15v3m0 8v1m1-12v2m0 8v2m1-12v3m0 8v3m1-13v3m0 7v1m1-2v3m1-11v2m0 9v2m1-12v1m1-6v5m0 8v4m1-13v1m0 9v1m1-11v1m1-3v2m0 10v2m1-13v3m0 7v2m1-12v2m0 7v1m0 1v1m1-10v2m0 6v2m1-12v2m0 10v1m1-13v3m0 7v5m1-13v1m0 8v1m1-10v1m0 8v2m1-12v2m0 8v4m1-13v1m0 8v4m1-17v1m0 13v1m1-13v2m0 10v2m1-14v2m0 8v2m1-13v3m0 7v4m1-14v2m0 9v1m1-11v1m0 9v1m1-12v2m0 10v3m1-14v1m0 10v2m1-14v2m1-1v3m0 9v2m1-17v5m0 8v1m1-11v1m0 9v1m1-14v3m0 11v1m1-12v4m0 6v2m1-12v1m0 8v2m1-10v1m0 7v2m1-11v2m0 9v1m1-13v3m0 9v1m1-12v2m0 9v1m1-12v2m0 8v3m1-12v2m0 8v2m1-12v3m0 9v1m1-16v1m0 12v1m1-12v1m0 9v2m1-12v2m0 8v2m1-11v2m0 7v3m1-13v1m0 10v1m1-11v1m0 9v1m1-11v2m0 7v1m1-10v1m0 7v1m1-10v1m0 7v1m0 1v2m1-11v2m0 7v3m1-13v1m0 10v2m1-13v2m0 9v2m1-13v1m0 10v2m1-13v2m0 7v2m1-12v4m1-8v7m0 9v2m1-228v2m0 7v2m1-13v4m0 8v3m1-15v3m0 9v3m1-12v1m0 9v1m1-12v2m0 7v2m1-9v1m0 7v1m1-10v2m0 9v1m1-14v3m0 8v3m1-12v1m0 8v2m1-12v1m0 8v1m1-10v1m0 9v3m1-12v1m0 7v5m1-13v1m0 8v1m1-1v1m1-10v1m0 8v2m1-12v2m0 9v1m1-18v9m0 7v3m1-11v1m0 6v3m1-11v2m0 7v2m1-12v2m0 8v1m1-14v5m0 8v2m1-11v1m0 7v3m1-1v2m1-12v2m0 8v3m1 211v3m1-13v3m0 8v1m1-14v4m0 8v2m1-13v2m0 9v2m1-10v1m0 7v1m1-11v2m0 7v5m1-12v1m0 9v2m1-14v1m0 10v1m1-14v4m0 9v2m1-2v2m1-12v2m0 8v1m1-11v2m0 9v1m1-14v3m0 8v3m1-1v3m1-14v1m0 10v3m1-13v2m0 6v2m1-13v3m0 8v1m1-11v1m0 12v1m1-14v2m1-3v4m0 7v1m1-8v1m0 7v2m1-12v1m0 7v5m1-14v2m1-4v4m0 8v2m1-11v2m0 8v1m1-12v1m0 8v1m1-10v3m0 9v1m1-12v1m0 8v2m1-12v2m0 9v3m1-13v1m0 9v2m1-14v4m0 8v3m1-14v2m0 9v2m1-13v3m0 8v1m1-19v7m0 11v2m1-13v3m0 6v2m1-10v2m0 8v2m1-14v2m0 8v2m1-10v2m0 8v3m1-14v2m0 8v2m1-14v4m0 8v2m1-11v1m0 8v1m1-12v3m1-1v1m0 8v2m1-13v3m0 9v1m1-10v2m0 7v3m1-12v1m0 8v2m1-13v2m1-1v1m0 8v1m1-9v1m0 9v2m1-3v1m1-14v4m0 7v4m1-13v2m0 8v1m1-9v1m0 7v2m1-12v2m0 9v2m1-13v2m0 7v2m1-10v2m0 8v2m1-16v4m0 10v3m1-14v1m0 9v2m1-13v4m0 7v4m1-14v3m0 8v1m1-12v3m0 7v2m1-11v1m0 7v1m1-11v3m0 11v4m1-19v3m0 8v2m1-14v5m0 8v3m1-15v3m0 11v3m1-4v3m2-14v1m1 0v2m0 7v2m1-11v1m0 9v1m1-11v1m0 8v2m1-227v3m0 8v1m1-11v2m0 5v4m1-12v2m0 8v3m1-2v1m1-2v1m1-10v2m0 6v3m1-12v2m0 8v1m1-10v2m0 7v2m1-12v2m0 7v5m1-16v4m0 8v3m1-12v2m0 6v2m1-11v2m0 8v1m1-11v3m1-4v3m0 9v1m1-14v2m0 11v1m1-11v1m0 9v5m1-15v1m0 8v2m1-3v4m1-14v4m0 6v1m1-9v2m0 9v1m1-13v4m0 6v2m1-11v1m0 8v2m1-12v2m0 8v1m1 205v1m0 9v1m1-12v5m0 7v1m1-15v3m0 10v2m1-12v1m0 9v1m1-12v4m0 6v2m1-11v1m0 9v2m1-12v3m0 7v2m1-13v2m0 9v1m1-12v1m0 10v2m1-14v5m0 6v3m1-12v1m0 9v2m1-12v1m1-3v4m0 8v2m1-12v1m0 9v1m1-12v3m1-6v5m0 9v1m1-11v1m0 9v1m1-15v5m0 10v1m1-13v1m0 8v1m1-12v3m0 1v1m0 8v1m1-10v1m0 6v3m1-13v3m0 9v2m1-12v2m1-4v3m0 8v3m1-12v1m0 9v2m1-13v1m0 9v2m1-11v1m0 8v3m1-12v1m0 9v1m1-12v2m0 6v2m1-10v2m0 9v1m1-13v3m1-1v2m0 7v1m1-10v1m0 9v2m1-15v4m0 9v2m1-13v2m0 8v4m1-13v2m0 8v1m1-14v3m0 10v2m1-12v2m1 8v4m1-13v1m0 7v1m1-12v2m0 10v2m1-12v1m0 10v2m1-5v1m0 1v1m1-13v2m0 10v3m1-13v2m0 8v2m1-12v2m0 7v3m1-13v2m0 9v2m1-14v2m0 10v1m1-10v1m0 8v2m1-12v1m0 9v1m1-11v2m0 8v1m1-12v2m0 9v2m1-13v3m0 8v1m1-13v2m0 10v1m1-10v1m0 7v1m1-12v4m0 9v2m1-12v1m0 7v1m1-11v3m0 8v1m1-11v2m0 9v1m1-13v1m0 9v2m1-11v1m0 9v1m1-14v3m0 11v1m1-12v3m0 6v1m1-2v1m1-9v2m0 8v1m1-12v2m0 9v3m1-14v2m0 9v1m1-12v3m0 7v2m1-12v1m0 11v1m1-14v3m0 8v1m1-11v2m0 11v2m1-14v1m0 7v3m1-226v1m0 8v1m1-11v3m0 7v1m1-9v1m0 7v1m1-10v1m0 9v2m1-11v1m0 8v2m1-13v2m1-4v4m0 9v1m1-15v4m0 8v2m1-10v2m0 7v1m1-11v1m1-1v3m0 8v2m1-11v2m0 7v2m1-11v1m0 7v1m1-11v1m0 9v2m1-13v1m0 2v2m0 7v2m1-13v2m0 8v3m1-11v1m0 6v3m1-11v2m0 8v2m1-13v3m1-2v2m0 7v2m1-1v4m1-15v2m0 9v3m1-17v5m0 7v3m1-13v4m0 6v3m1 204v2m0 7v2m1-12v2m0 9v2m1-14v2m0 8v4m1-13v2m0 7v1m1-10v3m0 9v2m1-16v3m0 8v3m1-13v4m0 7v3m1-12v1m0 9v4m1-13v1m0 7v4m1-15v2m0 8v2m1-11v2m0 8v3m1-14v3m0 9v1m1-13v1m0 9v2m1-11v2m0 8v1m1-11v3m0 9v1m1-15v4m0 8v3m1-14v2m0 9v3m1-13v2m0 9v2m1-13v2m0 7v3m1-13v2m1 8v3m1-11v1m0 8v1m1-12v2m0 10v1m1-10v1m0 8v1m1-10v1m0 7v1m1-10v1m0 8v1m1-11v3m0 8v1m1-11v2m0 7v3m1-4v4m1-11v1m0 7v1m1-12v4m0 8v1m1-12v3m0 8v1m1-11v1m0 9v2m1-14v3m0 8v2m1-17v6m1-2v2m0 8v2m1-10v2m0 7v2m1-14v3m0 11v2m1-12v1m0 7v1m1-11v2m0 7v3m1-13v3m0 8v2m1-16v5m0 10v2m1-13v1m1-2v1m0 10v1m1-12v4m0 9v2m1-14v1m0 10v1m1-12v2m0 9v2m1-13v3m0 6v4m1-13v2m0 9v1m1-12v2m0 8v4m1-14v3m0 8v1m1-12v3m0 8v1m1-1v3m1-12v1m0 9v1m1-14v5m0 8v2m1-14v2m0 9v2m1-13v2m0 9v3m1-16v3m0 9v4m1-14v1m0 9v1m1-10v1m0 8v2m1-11v2m0 8v1m1-11v1m0 8v1m1-10v1m0 9v1m1-13v3m1-1v2m0 8v2m1-14v3m0 8v1m1-12v3m0 8v1m1-11v2m0 10v2m1-13v1m0 8v2m1-11v1m0 9v1m1-11v2m0 8v8m1-20v2m0 10v1m1-227v1m0 9v2m1-13v3m0 8v1m1-13v3m0 9v3m1-2v1m1-13v3m1-2v2m0 9v1m1-11v2m0 7v3m1-4v2m1-10v1m0 9v1m1-10v1m0 10v1m1-14v3m0 7v2m1-12v1m0 9v2m1-14v3m0 10v3m1-11v1m0 6v1m1-12v3m0 9v3m1-14v1m0 9v3m1-3v4m1-15v3m1 0v1m0 8v3m1-13v1m0 8v2m1-10v1m0 9v1m1-15v4m0 8v5m1-15v2m0 7v2m1 1v1m1 202v3m0 6v3m1 0v1m1-12v2m0 7v2m1-12v1m0 9v3m1-2v1m1-11v1m0 9v1m1-11v1m0 9v1m1-12v2m0 8v3m1-14v3m0 8v1m1-11v3m0 9v2m1-13v3m0 7v2m1-13v2m0 8v1m1-12v2m0 9v3m1-12v1m0 9v3m1-14v2m0 8v2m1-13v3m0 9v1m1-13v1m1-1v3m0 7v3m1-10v2m0 8v3m1-15v2m0 9v2m1-2v2m1-15v2m0 1v1m0 7v1m1-10v2m0 10v1m1-13v1m0 9v1m1 0v2m1-14v3m0 10v1m1-12v1m1-2v2m0 8v1m1-10v1m0 7v4m1-15v4m0 8v3m1-14v2m0 10v1m1-13v3m0 9v1m1-12v2m0 8v2m1-13v5m0 6v1m1 0v1m1-11v2m0 8v3m1-13v2m0 8v2m1-14v3m0 9v1m1-10v1m0 7v1m1-19v9m0 10v1m1-13v3m0 7v3m1-11v1m0 10v3m1-14v1m0 8v2m1-12v3m0 7v4m1-15v2m0 1v1m0 7v2m1-12v3m0 7v1m1-12v2m0 9v1m1-10v1m0 7v1m1-8v1m0 7v2m1-11v2m0 8v1m1-13v3m0 8v2m1-11v2m0 7v3m1-11v1m0 6v3m1-11v2m0 6v3m1-13v5m0 5v1m0 1v3m1-14v3m0 7v2m1-2v1m1-12v3m0 9v2m1-14v3m0 9v1m1-12v2m0 9v3m1-12v1m0 8v1m1-11v1m0 7v1m0 1v1m1-11v1m1-2v2m0 8v1m1-12v3m0 9v4m1-17v3m0 11v2m1-16v2m0 10v1m1-10v2m0 7v5m1-15v2m0 8v2m1-13v3m0 9v3m1-14v2m0 8v2m1-12v3m0 8v2m1-231v3m0 10v1m1-11v2m0 6v3m1-16v6m0 8v2m1-12v3m0 8v3m1-12v3m0 6v2m1-11v1m0 9v4m1-15v1m0 10v2m2-12v1m0 8v1m1-9v1m0 8v1m1-13v4m1-2v1m0 8v4m1-14v3m0 7v4m1-13v3m0 5v2m1-11v3m0 6v1m1-8v2m0 8v3m1-13v1m0 8v1m1-13v1m0 11v2m1-12v1m0 9v2m1-13v2m0 10v1m1-13v2m0 9v1m1-11v2m0 6v1m1-10v3m0 8v2m1-13v2m0 9v1m1 203v2m0 8v2m1-12v2m0 9v1m1-12v2m0 8v2m1-9v1m0 6v2m1-2v2m1-13v2m0 9v2m1-11v2m0 7v1m1 1v1m1-14v1m0 11v3m1-14v1m0 1v1m0 8v1m1-12v2m0 9v3m1-15v4m0 7v1m1-9v1m0 7v3m1-12v2m0 9v2m1-12v1m0 7v1m1-12v4m0 8v1m1-11v1m0 1v1m0 6v3m1-15v2m0 10v3m1-12v1m0 8v1m1-11v2m0 8v1m1-11v3m0 6v2m1-10v1m0 9v2m1-15v3m0 9v2m1-12v3m0 7v2m1-10v1m0 8v1m1-4v4m1-13v2m0 10v2m1-12v1m0 9v3m1-15v4m0 7v4m1-15v2m0 10v1m1-11v1m0 9v1m1-10v1m0 9v2m1-13v1m0 9v2m1-12v1m0 8v3m1-2v1m1-11v1m0 8v1m1-12v3m0 9v3m1-16v3m0 9v2m1-12v1m0 10v1m1-11v1m0 9v2m1-15v2m0 11v2m1-2v1m1-11v1m0 9v1m1-12v2m0 9v2m1-12v1m0 8v1m1-10v2m0 8v1m1-12v3m0 8v2m1-12v1m0 8v1m1 1v1m1-13v2m0 8v1m1-1v2m1-12v2m0 8v2m1-12v2m0 8v2m1-14v4m1-2v3m0 7v1m1-11v2m0 8v2m1-11v2m0 8v2m1-11v1m0 9v1m1-4v1m1-8v1m0 8v1m1-13v2m0 9v2m1-1v1m1-12v1m0 9v3m1-13v2m0 8v5m1-14v1m0 7v2m1-11v2m0 9v1m1-11v1m1-2v2m0 10v1m1-13v3m0 7v1m1-12v3m0 7v2m1-12v2m0 9v2m1-12v1m0 10v1m1-226v1m0 9v1m1-10v1m0 7v1m1-10v2m0 7v1m1-10v1m0 8v1m1-12v3m0 8v2m1-14v2m0 10v2m1-10v1m0 8v1m1-11v2m0 8v1m1-12v2m0 7v3m1-13v2m0 9v2m1-12v2m0 9v2m1-13v2m0 9v4m1-17v4m0 8v1m1-10v2m0 9v1m1-11v1m0 8v3m1-14v2m0 9v1m1-11v2m0 7v1m1-10v3m0 6v1m1-10v1m0 9v5m1-16v1m0 9v1m1-10v1m0 8v2m1-10v1m0 7v1m1-2v2m1-1v1m1 203v2m0 9v1m1-11v3m0 10v4m1-16v2m0 6v2m1-10v1m0 8v2m1-1v1m1-10v1m0 7v3m1-13v1m0 10v1m1-1v2m1-12v1m0 8v2m1-11v2m0 8v4m1-15v1m0 9v2m1-11v1m0 9v3m1-15v2m0 9v5m1-14v2m0 9v3m1-16v2m0 10v2m1-11v1m0 9v1m0 1v1m1-18v3m0 11v3m1-14v2m1-3v2m0 10v4m1-15v2m0 7v2m1-10v1m0 9v3m1-14v2m0 9v3m1-14v1m0 8v3m1-10v1m0 8v2m1-13v3m0 8v1m1-11v1m0 9v8m1-18v1m0 7v2m1-11v3m0 9v2m1-13v2m0 7v2m1-14v2m0 10v1m1 0v2m1-14v1m0 10v3m1-14v5m0 8v1"/><path stroke="#d8d800" d="M21.5 253v2m0 5v1m1-7v1m0 4v2m1-9v2m0 5v2m1-7v1m1-3v2m0 5v2m1-7v2m1-3v1m0 6v1m1-8v3m0 4v2m1-9v2m0 5v2m1 206v1m0 6v1m1-9v1m0 7v2m1-8v1m0 4v3m1-10v2m1-2v1m1 0v1m0 7v1m1-7v1m0 4v2m1-9v1m0 7v1m1-10v3m0 5v2m1-7v1m0 4v2m1-10v3m0 5v1m1-7v6m1-7v1m0 5v2m1-8v2m0 4v3m1-10v2m0 5v1m1-7v2m0 5v1m1-8v2m1-2v1m0 6v1m1-1v1m1-6v1m0 5v1m1-9v2m0 5v1m1-9v3m0 3v2m1-1v1m1-7v1m0 5v3m1-9v1m0 5v2m1-7v1m0 5v1m1-9v3m0 5v2m1-10v2m0 1v1m0 4v3m1-10v1m0 5v5m1-10v1m1-1v1m1-3v2m0 6v2m1-10v2m0 6v2m1-9v1m0 6v2m1-8v2m0 4v1m1-8v2m0 8v1m1-11v1m1-1v2m0 6v4m1-12v2m0 4v2m1-7v1m0 6v1m1-9v1m0 3v1m0 2v2m1-8v1m0 4v2m1-9v2m0 4v4m1-10v2m0 6v3m1-9v1m0 6v1m1-8v1m0 5v1m1-8v2m0 6v1m1-9v2m0 5v1m1-8v2m0 5v2m1-9v1m0 7v2m1-10v2m0 5v2m1-10v3m0 1v2m0 3v1m1-1v1m1-8v1m0 6v1m1-9v1m0 5v1m1-7v2m0 5v2m1-8v1m1-2v1m0 7v1m1-8v1m0 5v1m1-9v2m0 5v1m0 1v1m1-10v1m0 7v3m1-10v2m0 6v1m1-10v1m0 6v1m1-8v2m0 5v2m1-8v3m0 5v1m1-9v1m0 6v1m1-7v1m0 5v2m1-9v1m0 6v1m1-7v2m0 4v3m1-10v1m0 8v1m1-3v1m1-8v1m0 7v1m1-217v2m1-10v2m0 6v3m1-9v1m0 6v1m1-9v1m0 7v1m1-8v1m0 5v2m1-8v1m0 5v2m1-8v1m0 4v1m1-7v1m0 1v1m0 4v1m1-8v1m0 7v1m1-9v1m0 6v1m1-7v2m0 5v1m1-8v1m0 4v3m1-8v1m0 5v1m1-7v1m0 5v1m1-9v1m0 7v2m1-8v1m0 6v1m1-9v2m0 5v2m1-8v1m0 5v1m1-7v1m0 1v1m0 3v2m1-9v2m1 0v1m0 6v1m1-4v1m1-6v1m0 4v3m1 205v2m1-1v1m0 4v2m1-7v1m0 6v1m1-8v1m0 7v2m1-10v2m0 6v2m1-3v3m1-11v1m0 6v2m1-8v1m0 4v1m1-5v1m0 5v1m1-8v1m0 4v3m1-8v2m0 6v2m1-11v2m0 6v4m1-11v3m0 5v1m1-11v2m0 7v2m1-10v1m1 0v2m0 5v2m1-10v1m0 6v3m1-9v1m0 6v1m1-9v2m0 6v1m1-8v3m0 5v2m1-11v2m0 6v1m1-6v1m0 3v2m1-7v3m0 3v1m1-8v1m0 7v2m1-11v3m0 5v1m1-9v3m0 5v1m1-7v2m0 5v1m1-9v2m0 6v1m1-8v1m0 4v2m1-7v1m0 5v1m1-8v1m0 5v1m1-7v1m0 6v2m1-10v1m0 7v1m1-7v1m0 5v1m1-9v2m0 5v2m1-8v1m0 7v1m1-10v2m0 6v1m1-9v1m0 6v2m1-6v1m0 5v1m1-8v2m0 5v1m1-9v1m0 6v1m1-9v2m0 6v2m1-9v1m0 6v2m1-9v1m0 7v1m1-10v3m0 6v1m1-10v2m0 6v1m1-8v1m0 6v1m1-7v1m0 6v1m1-10v5m0 3v1m1-7v1m0 5v2m1-10v1m0 6v3m1-11v5m0 4v3m1-10v1m0 7v1m1-9v1m1-2v2m0 6v1m1-7v2m0 3v1m1-6v2m0 3v3m1-9v2m0 5v2m1-8v1m0 5v1m1-10v1m0 8v1m1-8v2m0 5v1m1-8v1m0 6v1m1-8v1m0 7v1m1-3v1m1-6v1m0 4v2m1-7v1m0 5v1m1-9v3m0 5v1m1-9v1m0 8v2m1-11v2m0 5v2m1 1v1m1-10v1m0 6v1m1-8v1m0 6v1m1-223v1m0 4v3m1-7v1m0 6v1m1-10v3m0 6v1m1-9v2m0 3v1m1-5v2m0 5v1m1-8v2m0 4v1m1-7v3m0 3v1m1-8v1m0 5v2m1-8v2m0 6v1m1-10v3m0 4v1m1-6v1m0 4v1m1-7v1m0 6v1m1-8v1m0 5v1m1-7v1m0 7v2m1-10v1m0 6v2m1-10v2m0 5v1m1-8v3m0 4v1m1-6v1m0 5v2m1-2v1m1-1v1m1-9v4m0 3v2m1-7v1m0 5v1m1-8v2m0 5v3m1-9v1m0 5v1m1 208v1m0 6v1m1-2v2m1-10v3m0 6v1m1-9v2m0 5v2m1-9v2m0 4v3m1-10v3m0 5v2m1-8v1m0 5v1m1-9v2m0 6v2m1-9v1m0 8v1m1-9v1m0 6v1m1-9v2m0 5v1m1-10v3m1-1v3m0 5v1m1-8v1m0 5v1m1-8v2m0 5v1m1-9v2m0 7v3m1-4v2m1-1v1m1-9v1m0 6v1m1-9v4m0 3v1m1-6v1m0 5v3m1-10v2m0 5v3m1-10v2m0 5v1m1-9v1m0 6v4m1-10v1m0 6v1m1-10v4m1-2v1m0 6v2m1-11v2m1 0v1m0 5v3m1-9v2m0 5v1m1-8v1m0 6v2m1-8v1m0 5v3m1-2v1m1-10v3m0 5v2m1-8v1m0 5v3m1-10v1m0 6v2m1-9v3m0 4v1m1-9v1m1 0v2m0 5v2m1-1v1m1-9v1m0 5v3m1-9v1m0 6v2m1-8v1m0 5v1m1-8v3m0 4v3m1-10v1m0 7v2m1-9v1m0 5v1m1-7v3m1-4v1m0 7v1m1-10v2m0 6v1m1-8v1m1-2v2m0 6v1m1-8v1m0 6v1m1-9v2m1-1v2m0 4v2m1-8v1m0 7v1m1-2v2m1-2v1m1-7v3m0 4v1m1-9v1m0 6v1m1-8v8m1-8v2m0 5v2m1-9v1m0 6v1m1-10v3m0 5v1m1-7v1m0 6v2m1-10v2m0 5v3m1-9v2m0 5v2m1-11v3m0 3v1m0 2v2m1-8v1m0 5v2m1-3v2m1-9v1m0 4v1m0 2v2m1-9v2m0 5v1m1-7v1m0 4v3m1-225v2m0 4v4m1-9v1m0 5v2m1-10v2m0 7v1m1-8v1m1 5v2m1-8v2m0 5v1m1-8v1m0 7v2m1-11v1m1 0v1m0 6v1m1-7v1m0 4v1m1-8v2m0 5v1m1-6v2m0 4v1m1-9v2m0 6v1m1-8v1m0 7v1m1-10v2m0 4v2m1-6v1m0 6v1m1-8v1m0 5v1m1-9v3m0 3v3m1-8v1m0 6v1m1-8v1m0 6v1m1-8v3m0 4v1m1 0v1m1-9v1m0 5v2m1-8v1m0 6v1m1 206v3m0 4v2m1-8v1m0 6v1m1-1v2m1-10v1m0 7v2m1-10v2m0 5v1m1-6v1m0 5v1m1-9v1m0 7v1m1-8v2m0 4v2m1-7v2m0 5v1m1-8v2m0 5v1m1-11v2m0 7v2m1-10v2m0 6v1m1-10v2m0 6v1m0 1v1m1-9v2m0 5v2m1-10v3m0 4v1m1-7v2m1 5v2m1-10v1m0 8v1m1-11v1m0 8v3m1-10v1m0 5v1m1-8v3m0 6v2m1-10v1m0 6v1m1-8v2m0 4v2m1-9v3m0 5v2m1-9v1m1-1v1m0 6v2m1-9v3m0 3v2m1-7v1m0 4v1m1-6v2m0 5v1m1-9v1m0 6v2m1-9v3m0 4v1m1-6v1m0 4v2m1-2v1m1-8v1m0 4v1m1-5v1m0 6v1m1-9v1m1-1v2m0 5v3m1-11v3m0 5v2m1-9v2m0 3v2m0 1v2m1-10v1m0 6v2m1-8v2m0 6v1m1-11v2m0 6v1m1-8v2m0 6v2m1-10v1m0 6v1m1-10v2m0 8v1m1-8v1m0 6v1m1-9v4m0 3v1m1-9v4m0 4v2m1-10v3m0 5v1m1-7v1m1-2v2m0 1v3m0 3v1m1-10v1m0 6v3m1-10v1m0 6v1m1-7v1m0 5v1m1-7v1m0 6v1m1-10v3m0 5v2m1-9v1m0 5v2m1-1v1m1-7v1m1-2v1m0 6v1m1-8v2m0 6v2m1-9v2m0 5v2m1-11v3m0 6v1m1-9v1m1 6v1m1-1v2m1-9v3m0 4v1m1-8v2m0 5v2m1-9v1m0 6v2m1-8v1m0 6v1m1-9v1m0 6v1m1-8v2m0 5v1m1-222v1m0 5v1m1-9v1m0 7v1m1-1v1m1-7v1m0 6v1m1-8v2m0 3v3m1-9v2m0 6v1m1-9v4m0 1v3m1-9v2m0 6v1m1-9v2m0 6v2m1-9v1m0 5v1m1-7v1m1-1v1m1 0v1m0 5v2m1-9v2m0 5v2m1-9v1m0 7v2m1-10v2m0 4v1m1-7v2m0 6v1m1-9v2m1-2v1m0 7v1m1-7v1m0 4v2m1-9v1m0 6v1m1-9v3m0 5v2m1-8v2m0 3v1m1-8v3m0 4v1m1 208v1m0 7v1m1-9v2m0 5v1m1-7v2m0 4v2m1-10v2m0 8v1m1-9v1m0 4v3m1-9v1m0 7v1m1-8v1m0 5v1m1-6v1m1-3v3m0 4v2m1-9v1m0 5v1m1-6v2m0 5v1m1-10v3m1-3v2m0 7v1m1-10v3m0 5v1m1-8v2m0 4v2m1-9v4m1-3v2m1-1v1m1-2v2m0 4v1m1-6v2m0 5v2m1-2v1m1-9v1m1-1v1m0 7v1m1-9v1m0 6v2m1-10v3m0 5v2m1-8v1m0 5v1m1-8v2m0 4v1m0 1v1m1-3v2m1 0v2m1-9v1m0 5v1m1 0v1m1-8v1m0 1v1m0 3v2m1-8v2m0 4v2m1-8v2m0 4v2m1-12v2m0 9v2m1-10v1m0 7v2m1-10v1m0 6v1m1-8v3m1-4v3m0 5v1m1-9v2m0 6v1m1-9v2m0 7v1m1-10v3m0 4v3m1-10v2m0 5v2m1-7v1m0 5v3m1-10v1m0 6v1m1-9v1m1-2v3m0 6v2m1-7v1m0 4v1m1-9v2m0 5v1m1-7v1m0 5v1m1-7v2m0 5v2m1-9v1m0 6v2m1-9v2m0 6v1m1-9v2m0 5v1m1-7v1m0 5v2m1-2v4m1-14v4m0 6v2m1-10v3m0 4v2m1-8v1m0 6v1m1-7v1m0 5v1m1-9v2m0 6v2m1-9v2m0 6v1m1-8v1m0 5v1m1-8v3m0 3v1m1-8v2m0 6v1m2-9v3m0 5v2m1-9v1m0 6v2m1-10v2m0 6v2m1-9v2m1-1v1m0 6v2m1-10v2m0 3v4m1-218v1m1-7v1m0 6v1m1-9v3m1-2v2m0 5v2m1-8v1m0 4v1m1-6v1m0 5v1m1-7v2m0 5v2m1-10v1m0 4v3m1-8v2m0 4v2m1-9v3m0 3v2m1-8v3m0 5v1m1-8v3m0 3v1m1-7v1m1 0v2m0 4v1m1-8v1m0 6v1m1-8v1m0 6v2m1-8v1m0 5v1m1-7v1m1-1v1m0 5v1m1-8v2m1-2v1m0 5v2m1-8v1m0 5v1m1-7v1m0 6v2m1-8v1m0 4v3m1 205v2m1 0v1m1-2v2m0 4v2m1-9v2m1 0v1m0 5v1m1-8v1m1 0v1m0 6v2m1-11v2m0 6v2m1-9v1m0 6v2m1-9v2m0 5v2m1-1v1m1-8v1m0 3v1m0 1v3m1-10v3m0 3v2m1-8v3m0 4v3m1-10v1m0 7v2m1-8v1m0 4v1m1-8v1m0 5v2m1-9v1m0 7v4m1-11v2m0 5v1m1-7v1m0 5v1m1-6v1m0 4v2m1-9v1m0 5v1m1-7v2m0 4v3m1-9v1m0 6v1m1-7v1m0 6v1m1-10v1m0 6v1m1-1v4m1-10v2m0 4v2m1-8v1m0 7v1m1-9v1m0 5v3m1-8v1m0 6v1m1-9v2m0 5v2m1-8v1m0 5v2m1-11v1m0 4v1m0 2v1m0 1v1m1-3v1m1-6v1m0 1v1m0 1v4m1-10v2m0 3v3m1-6v1m0 6v1m1-9v2m0 5v1m1-8v2m0 4v2m1-8v2m1-2v1m0 6v3m1-10v2m0 5v1m1-8v1m0 7v1m1-7v1m0 5v1m1-8v1m0 6v1m1-9v1m0 6v2m1-9v2m0 5v1m1-7v2m0 5v2m1-11v1m0 8v1m1-9v1m0 4v2m1-7v2m0 3v1m0 1v1m1-7v2m0 4v1m1-8v1m0 7v1m1-9v2m0 3v2m1-6v1m0 6v1m1-10v2m0 7v1m1-10v3m0 5v1m1-7v2m0 4v1m1-1v2m1-8v2m0 4v1m1-8v2m1-2v1m0 6v4m1-12v2m1-1v2m0 5v1m1-9v2m0 5v1m0 1v2m1-9v1m0 3v4m1-10v2m0 7v1m1-10v2m0 6v2m1-8v1m0 5v1m1-8v1m0 6v2m1-9v1m0 6v1m1-222v2m0 4v2m1-8v1m1-2v1m1-1v1m0 5v3m1-9v1m0 6v1m1-7v1m1-2v1m0 5v2m1-7v1m1-2v1m0 5v1m1-7v2m0 5v1m1-7v1m1-2v1m0 5v2m1-7v1m0 5v2m1-9v2m0 5v2m1-11v3m0 6v2m1-9v2m0 1v1m0 3v2m1-9v2m0 5v1m1-8v1m1 0v2m0 5v2m1-9v1m0 4v4m1-3v1m1-8v1m0 5v2m1-8v1m0 6v1m1 207v1m0 6v2m1-1v2m1-11v2m0 6v2m1-9v2m0 4v3m1-7v1m0 4v1m1-8v1m0 5v3m1-1v1m1-9v1m0 7v1m1-10v2m0 7v1m1-7v1m0 4v1m1-8v3m0 5v1m1-9v2m0 4v2m1-7v1m0 6v1m1-9v2m0 6v1m1-1v1m1-1v1m1-9v1m1 8v1m1-11v2m0 5v1m1-8v1m0 1v1m0 6v1m1-8v1m0 4v1m1-7v1m0 6v2m1-8v1m0 5v2m1-9v1m0 6v1m1-8v1m0 4v4m1-10v2m0 5v2m1-8v1m0 6v1m1-8v1m0 5v3m1-9v1m1-1v1m0 7v1m1-9v1m0 8v1m1-9v2m1-3v1m0 7v1m1-9v1m1-1v1m0 6v1m1-1v2m1-10v1m0 7v2m1-8v1m0 5v1m1-8v2m0 6v1m1-8v1m1-3v4m0 5v1m1-9v2m0 4v4m1-10v2m0 3v2m0 1v1m1-10v2m0 5v3m1-8v1m0 6v1m1-8v1m1-2v1m0 6v2m1-10v2m0 5v1m0 1v1m1-8v1m0 6v1m1-9v2m0 5v2m1-8v1m0 6v1m1-9v1m0 5v3m1-8v1m0 5v2m1-10v4m0 5v1m1-8v1m0 4v2m1-7v1m0 5v3m1-9v1m0 4v2m1-7v1m0 6v1m1-8v1m0 4v4m1-11v1m0 7v1m1-8v1m0 6v2m1-10v3m0 6v2m1-8v1m0 3v2m1-8v1m0 2v1m0 2v1m1-6v1m0 6v1m1-9v2m0 6v1m1-9v2m0 5v2m1-8v1m0 5v1m1-9v3m0 6v2m1-10v2m1-2v1m0 7v3m1-11v2m0 4v1m1-222v2m0 4v2m1-7v1m0 5v1m1-2v2m1-8v2m0 6v1m1-8v1m0 6v1m1-9v1m0 5v2m1-8v1m0 6v2m1-10v2m1 0v1m0 5v1m1-9v2m0 6v1m1-7v1m0 5v2m1-2v2m1-8v2m1-4v1m0 7v1m1 0v1m1-9v1m0 5v2m1-7v1m0 4v1m1-6v1m0 5v2m1-8v1m0 5v1m1-7v2m0 4v1m1-9v2m0 6v2m1-9v2m0 4v3m1-9v1m1 0v1m0 4v1m1 209v1m0 4v2m1-8v2m0 6v1m1-10v2m1-1v2m0 4v1m1-6v1m0 4v4m1-11v3m0 3v2m1-6v1m0 5v1m1-8v3m0 5v1m1-8v1m0 5v1m1-9v2m0 4v2m1-7v1m1-1v1m0 6v2m1-11v2m1 0v1m0 6v1m1-7v2m0 5v2m1-10v2m0 5v1m1-9v1m0 7v1m1-8v1m0 5v3m1-9v1m0 5v1m1-8v1m0 8v2m1-11v2m1-1v1m0 6v1m1-9v1m0 8v1m1-2v2m1-8v1m0 5v1m1-8v2m0 5v1m1-7v1m0 4v3m1-8v2m1-5v4m1-1v1m0 4v2m1-7v2m0 4v2m1-8v1m0 6v1m1-9v2m0 4v3m1-9v2m0 5v1m1-9v4m0 4v1m1-9v2m0 4v2m1 0v1m1-9v7m0 3v1m1-3v1m1-8v1m0 5v1m1-7v2m0 5v1m1-9v1m0 6v3m1-10v2m0 6v3m1-12v2m0 6v2m1-7v1m0 5v3m1-11v2m0 6v2m1-9v1m0 6v2m1-3v1m1-7v2m0 5v2m1-9v4m0 3v1m1-7v2m0 5v1m1-8v1m0 5v2m1-9v1m0 6v2m1-8v1m0 6v2m1-8v1m0 4v3m1-10v3m0 5v1m1-9v3m0 4v2m1-10v1m0 6v2m1-9v1m0 6v2m1-8v1m0 5v2m1-7v1m0 6v1m1-9v2m0 4v2m1-8v2m0 5v2m1-9v2m0 5v1m1-7v1m0 6v1m1-9v1m0 5v2m1-8v2m1 5v3m1-10v2m0 4v2m1-8v3m0 5v1m1-8v2m0 4v2m1-10v1m0 7v2m1-225v2m0 5v2m1-8v3m0 4v1m1-9v1m0 6v2m1-8v2m0 4v3m1-9v2m0 4v1m0 1v1m1-9v2m0 5v2m1-2v1m1-8v1m0 5v1m1-7v2m0 6v1m1-8v2m0 5v3m1-10v1m0 4v2m1-9v2m0 5v2m1-9v2m0 6v2m1-7v1m1-3v2m0 5v2m1-10v2m0 6v1m1-8v2m0 5v1m1-8v1m0 6v2m1-8v1m0 6v1m1-9v1m0 5v2m1-7v1m0 6v2m1-10v2m0 5v1m1-8v2m1-1v1m0 6v2m1 206v1m0 4v1m1-7v2m0 6v2m1-9v1m0 4v2m1-9v2m0 6v1m1-8v2m0 6v1m1-9v2m0 5v2m1-9v1m0 6v2m1-3v2m1-8v2m0 5v1m1-7v2m0 5v2m1-4v3m1-9v2m0 5v1m1-9v1m0 2v2m0 2v2m1-8v1m0 6v2m1-9v1m0 6v1m1-8v1m0 1v1m0 4v2m1-11v2m0 7v1m1-8v1m1 7v2m1-10v1m0 7v1m1-10v2m0 6v2m1-11v1m0 1v1m1-1v2m0 6v2m1-11v2m0 5v2m1-8v1m0 7v1m1-9v2m0 6v2m1-10v2m0 6v1m1-9v1m0 5v2m1-8v1m0 5v1m1-7v1m0 5v2m1-9v3m0 4v3m1-9v2m0 5v2m1-9v1m0 4v3m1-6v1m0 4v1m1-9v2m0 7v1m1-8v1m0 6v1m1-2v2m1-9v2m0 6v1m1-8v1m0 5v1m1-9v2m0 6v2m1-9v1m0 5v1m1-7v2m0 5v3m1-10v2m0 5v1m1-7v1m0 3v3m1-7v1m0 4v2m1-1v1m1-9v2m0 6v1m1-8v2m0 4v1m1-6v1m0 5v1m1-7v1m0 6v1m1-9v2m0 5v1m1-2v2m1-7v1m0 3v2m2-5v1m0 5v1m1-8v1m0 5v1m1-9v2m0 6v1m1-8v3m0 4v2m1-9v1m0 6v2m1-9v1m0 6v2m1-8v1m0 5v2m1-9v1m0 7v1m1-9v2m0 4v2m1-7v1m0 2v1m0 1v2m1-8v2m0 5v2m1-10v2m0 6v3m1-12v4m0 5v1m1-7v1m0 5v1m1-8v1m0 6v1m1-8v2m0 4v3m1-9v2m1-1v1m0 6v1m1-226v4m0 5v1m1-8v3m1-4v2m0 4v2m1-7v1m0 6v1m1-1v1m1-8v1m0 7v1m1-10v2m0 7v1m1-4v3m1-8v2m0 5v1m1-7v2m0 4v2m1-8v2m0 4v2m1-9v2m0 4v2m1-7v3m1-2v1m0 3v1m1-6v1m0 4v1m1-5v2m0 5v1m1-9v2m0 4v2m1-11v3m0 5v3m1-9v1m0 7v1m1-9v1m0 4v1m0 1v3m1-10v1m0 7v1m1-8v1m1-1v2m0 4v2m1-9v1m0 6v2m1 206v1m0 6v1m1-8v1m0 7v1m1-9v3m0 4v1m1-6v1m0 4v1m1-9v2m0 6v1m1-9v2m0 6v1m1-7v2m0 4v1m1-8v3m0 6v1m1-12v3m0 7v1m1-10v1m0 1v1m0 6v1m1-9v2m0 6v1m1-8v1m0 5v1m1-1v1m1 1v1m1-9v1m0 5v1m1-7v2m1-3v1m0 5v2m1-10v3m0 5v2m1-8v1m0 5v2m1-8v2m0 5v1m1-7v1m0 1v1m0 2v1m1-7v1m0 5v3m1-10v1m0 7v1m1-7v2m0 4v1m1-7v1m0 6v1m1-9v1m1-2v2m0 5v3m1-9v1m0 6v2m1-8v1m0 5v1m1-9v1m0 6v1m0 1v1m1-9v1m0 7v1m1-8v1m0 5v3m1-10v1m0 6v2m1-9v2m0 4v2m1-8v2m0 6v1m1-9v1m0 6v1m1-8v2m0 5v2m1-10v2m0 6v1m1-9v2m0 6v2m1-9v1m0 1v1m0 4v2m1-11v3m0 7v1m1-10v1m0 8v1m1-9v2m1-2v1m0 6v2m1-9v1m0 5v2m1-7v1m0 4v3m1-8v1m0 5v2m1-9v2m0 5v1m1-8v1m0 8v1m1-10v4m0 3v1m1-8v2m0 5v1m1-8v3m0 3v2m1-8v2m0 5v1m1-8v1m0 6v2m1-8v1m0 5v1m1-8v1m0 6v1m1-7v1m0 6v1m1-8v1m0 5v3m1-11v1m0 6v1m1-6v1m0 6v1m1-10v3m0 3v3m1-9v1m0 8v1m1-10v1m0 7v1m1-2v2m1-8v1m0 5v1m1-2v4m1-9v1m0 6v2m1-9v2m0 6v2m1-9v1m0 4v2m1-8v2m0 3v2m1-8v2m0 6v1m1-9v1m0 7v2m1-224v2m0 5v2m1-8v2m0 3v2m1-7v1m0 5v1m1-8v1m0 6v1m1-8v2m0 4v2m1-10v2m0 6v2m1-7v1m0 6v1m1-8v1m0 5v2m1-9v1m0 4v2m1-8v3m0 5v1m1-8v1m0 6v2m1-9v2m0 5v2m1-9v2m0 4v2m1-7v2m0 5v2m1-9v1m0 5v2m1-9v1m0 4v4m1-8v1m0 5v1m1-1v1m1-8v1m0 7v1m1-10v3m0 5v1m1-8v2m0 3v3m1-7v3m0 3v1m1-9v2m1-1v1m0 6v1m1 206v2m0 5v2m1-7v1m0 5v4m1-10v1m0 4v1m1-7v3m0 4v1m1-9v1m0 8v1m1-8v1m0 5v1m1-9v2m0 5v3m1-8v1m0 6v1m1-9v1m1 0v1m0 5v2m1-10v2m0 6v1m1-8v1m0 5v3m1-10v2m1 0v1m0 5v3m1-11v1m0 7v2m1-8v1m0 7v1m1-12v5m0 4v2m1-2v2m1-10v1m0 8v1m1-9v1m1-1v1m0 5v3m1-2v2m1-10v1m0 6v1m1-6v2m0 3v3m1-8v1m0 6v1m1-9v2m0 5v2m1-9v1m1 0v1m0 5v3m1-9v1m0 5v1m1-10v4m0 5v1m1-8v3m0 5v1m1-11v2m0 1v1m0 4v2m1 0v2"/><path stroke="#ffff00" d="M21.5 255v5m1-5v4m1-5v5m1-4v6m1-7v5m1-3v6m1-8v6m1-4v4m1-5v5m1 209v6m1-7v7m1-5v4m1-5v7m1-8v8m1-7v7m1-5v4m1-6v7m1-6v5m1-4v4m1-5v5m2-6v5m1-4v4m1-5v5m1-4v5m1-5v5m1-6v6m1-5v5m1-4v5m1-6v5m1-5v3m1-3v4m1-5v5m1-5v5m1-4v5m1-5v5m1-6v1m0 1v4m1-6v5m1-4v5m1-5v6m1-7v6m1-6v6m1-6v6m1-4v4m1-5v8m1-9v7m1-6v6m1-6v4m1-4v6m1-7v3m0 1v2m1-5v4m1-5v4m1-4v6m1-5v6m1-6v5m1-5v6m1-6v5m1-5v5m1-6v7m1-6v5m1-5v1m0 2v3m1-7v7m1-6v6m1-7v5m1-4v5m1-5v5m1-6v7m1-6v5m1-6v5m0 1v1m1-8v7m1-5v6m1-8v6m1-5v5m1-3v5m1-7v6m1-5v5m1-6v6m1-4v4m1-6v8m1-7v5m1-6v7m1-221v5m1-6v6m1-5v6m1-7v7m1-6v5m1-5v5m1-5v4m1-5v1m0 1v4m1-6v7m1-7v6m1-4v5m1-6v4m1-4v5m1-5v5m1-7v7m1-5v6m1-6v5m1-7v1m0 1v5m1-5v1m0 1v3m1-5v5m1-4v6m1-7v4m1-4v4m1 210v6m1-6v4m1-4v6m1-6v7m1-6v6m1-7v6m1-7v6m1-5v4m1-3v5m1-6v4m1-3v6m1-7v6m1-4v5m1-8v7m1-7v7m1-5v5m1-7v6m1-5v6m1-6v6m1-4v5m1-7v6m1-4v3m1-2v3m1-6v7m1-6v5m1-5v5m1-4v5m1-6v6m1-6v4m1-4v5m1-6v5m1-5v6m1-7v7m1-5v5m1-6v5m1-5v7m1-7v6m1-7v6m1-3v5m1-5v5m1-7v6m1-6v6m1-6v6m1-6v7m1-6v6m1-7v6m1-6v6m1-5v6m1-4v3m1-5v5m1-7v6m1-3v4m1-6v7m1-7v7m1-7v6m1-4v3m1-3v3m1-4v5m1-5v5m1-8v8m1-5v5m1-6v6m1-6v7m1-8v6m1-4v4m1-4v5m1-5v5m1-7v8m1-7v5m1-4v7m1-8v6m1-6v6m1-221v4m1-3v6m1-6v6m1-6v3m1-2v5m1-5v4m1-3v3m1-6v5m1-4v6m1-6v4m1-4v4m1-5v6m1-6v5m1-5v7m1-7v6m1-6v5m1-4v4m1-4v5m1-7v7m1-6v6m1-4v3m1-4v5m1-5v5m1-5v5m1 210v6m1-7v6m1-5v6m1-6v5m1-5v4m1-4v5m1-5v5m1-6v6m1-6v8m1-7v6m1-6v5m1-6v6m1-4v5m1-6v5m1-5v5m1-6v7m1-6v5m1-6v7m1-7v6m1-4v3m1-4v5m1-5v5m1-5v5m1-7v6m1-5v6m1-5v6m1-7v6m1-7v8m1-7v5m1-4v5m1-6v6m1-5v5m1-5v6m1-6v5m1-5v5m1-6v6m1-4v4m1-7v7m1-5v5m1-6v7m1-7v5m1-5v6m1-5v5m1-4v4m1-6v7m1-6v5m1-3v3m1-6v7m1-7v6m1-6v7m1-7v6m1-6v6m1-6v6m1-5v4m1-5v7m1-7v6m1-6v6m1-3v4m1-7v6m2-5v5m1-6v6m1-6v5m1-5v6m1-6v5m1-4v5m1-6v3m0 1v2m1-5v5m1-7v6m1-6v4m0 1v2m1-5v5m1-5v4m1-220v4m1-4v5m1-6v7m1-6v6m1-6v5m1-4v5m1-6v7m1-8v8m1-7v6m1-5v4m1-5v5m1-3v4m1-6v6m1-6v7m1-7v4m1-3v6m1-6v5m1-5v3m1-4v6m1-6v6m1-4v4m1-6v7m1-7v5m1-5v6m1 210v4m1-5v6m1-7v7m1-7v7m1-6v5m1-4v5m1-7v7m1-5v4m1-3v5m1-5v5m1-8v7m1-6v6m1-7v6m0 1v1m1-6v5m1-5v4m1-4v7m1-9v7m1-7v8m1-9v8m1-6v5m1-4v6m1-7v6m1-5v4m1-4v5m1-6v6m1-6v6m1-4v3m1-4v4m1-3v5m1-7v6m1-4v4m1-4v4m1-6v6m1-6v4m1-3v6m1-7v6m1-5v5m1-5v5m1-5v3m0 2v1m1-7v6m1-4v6m1-8v6m1-5v6m1-7v6m1-7v8m1-6v6m1-4v3m1-4v4m1-5v5m1-5v5m1-5v1m0 3v3m1-8v6m1-6v6m1-7v1m0 1v5m1-5v6m1-6v5m1-6v5m1-5v6m1-7v1m0 1v6m1-7v6m1-5v6m1-5v5m1-6v6m1-7v7m1-8v7m1-5v5m1-4v4m1-5v5m1-6v6m1-5v6m1-7v6m1-5v5m1-220v5m1-7v7m1-6v6m1-5v6m1-5v3m1-4v6m1-4v1m1-4v6m1-6v6m1-6v5m1-5v6m1-6v7m1-6v5m1-5v5m1-6v7m1-6v4m1-4v6m1-6v5m1-6v7m1-5v4m1-6v6m1-5v5m1-4v3m1-4v4m1 210v7m1-6v5m1-4v4m1-6v8m1-7v4m1-5v7m1-6v5m1-4v5m1-5v4m1-6v5m1-3v5m1-6v5m1-6v7m1-6v5m1-5v4m1-3v4m1-5v6m1-6v6m1-6v4m1-3v5m1-7v7m1-7v7m1-7v7m1-7v6m1-5v5m1-5v5m1-5v4m1-4v4m1-6v8m1-6v5m1-6v7m1-6v1m0 1v3m1-4v4m1-4v4m1-8v9m1-7v7m1-7v6m1-4v4m1-5v5m1-6v6m1-6v7m1-6v4m1-5v5m1-4v5m1-6v6m1-7v8m1-7v6m1-4v4m1-6v5m1-5v5m1-4v5m1-6v6m1-5v6m1-6v5m1-5v5m1-5v5m1-6v6m1-5v4m1-5v6m1-5v5m1-6v6m1-5v6m1-6v5m1-4v3m1-5v5m1-5v7m1-6v5m1-6v6m1-6v6m1-5v5m1-5v6m1-6v3m1-220v6m1-5v6m1-5v6m1-6v5m1-5v4m1-4v5m1-4v5m1-7v4m1-3v4m1-4v3m1-3v5m1-4v3m1-5v7m1-5v4m1-6v6m1-6v6m1-5v5m1-5v5m1-5v5m1-5v6m1-7v5m1-5v5m1-5v6m1-5v4m1 210v7m1-6v7m1-7v4m1-5v7m1-6v5m1-6v6m1-5v6m1-7v6m1-6v6m1-5v5m1-6v7m1-6v3m0 1v1m1-4v3m1-3v4m1-6v7m1-5v4m1-6v5m1-6v7m1-5v5m1-5v5m1-4v4m1-6v5m1-4v4m1-5v6m1-5v6m1-8v6m1-5v5m1-4v4m1-5v7m1-7v5m1-4v6m1-6v5m1-5v5m1-8v4m0 1v2m0 1v1m1-7v5m1-4v1m0 1v1m1-4v3m1-2v6m1-6v5m1-5v4m1-4v6m1-7v6m1-5v5m1-6v7m1-5v5m1-6v6m1-7v6m1-5v5m1-4v5m1-8v8m1-7v4m1-3v3m0 1v1m1-4v4m1-6v7m1-6v3m1-3v6m1-7v7m1-6v5m1-4v4m1-6v6m1-4v4m1-5v5m1-6v6m1-6v6m1-5v5m1-6v5m0 1v1m1-6v3m1-4v7m1-7v6m1-5v5m1-6v6m1-6v6m1-219v4m1-5v4m1-5v7m1-7v5m1-5v6m1-5v5m1-6v5m1-4v6m1-7v5m1-4v5m1-5v5m1-6v5m1-4v5m1-5v5m1-6v6m1-5v1m0 1v3m1-5v5m1-6v6m1-4v4m1-5v4m1-4v5m1-6v5m1-5v6m1 209v6m1-4v5m1-7v6m1-5v4m1-3v4m1-6v5m1-4v6m1-7v7m1-7v7m1-5v4m1-4v5m1-6v4m1-4v6m1-6v6m1-7v7m1-8v8m1-7v8m1-9v9m1-8v5m1-4v6m1-6v4m1-5v6m1-5v5m1-6v6m1-6v4m1-4v5m1-5v6m1-6v5m1-5v5m1-5v7m1-7v8m1-6v5m1-7v7m1-7v8m1-8v6m1-6v6m1-7v7m1-5v5m1-5v6m1-6v6m1-5v5m1-6v4m1-4v3m1-4v5m1-4v6m1-6v6m1-7v6m1-6v5m0 1v1m1-6v6m1-6v5m1-5v6m1-7v5m1-4v5m1-4v5m1-6v4m1-4v5m1-5v4m1-4v6m1-6v4m1-6v7m1-6v6m1-5v6m1-5v3m1-5v2m0 1v2m1-4v6m1-6v6m1-6v5m1-5v5m1-5v6m1-6v6m1-7v7m1-6v4m1-219v4m1-4v5m1-6v5m1-4v6m1-6v6m1-7v5m1-5v6m1-6v6m1-5v5m1-6v6m1-5v5m1-5v5m1-4v5m1-8v7m1-5v6m1-7v5m1-4v4m1-4v5m1-5v5m1-4v4m1-6v6m1-5v4m1-5v6m1-5v4m1 211v4m1-4v6m1-7v6m1-5v4m1-4v4m1-4v3m1-3v5m1-4v5m1-6v5m1-6v4m1-4v7m1-7v6m1-7v7m1-6v6m1-4v5m1-6v5m1-7v7m1-6v5m1-5v5m1-6v8m1-7v6m1-6v6m1-7v8m1-7v6m1-5v5m1-5v5m1-5v4m1-3v5m1-6v5m1-5v4m1-3v4m1-5v6m1-6v4m1-4v5m1-4v4m1-6v4m1-4v6m1-1v3m1-8v6m1-6v5m1-4v5m1-7v6m1-5v6m1-7v6m1-4v5m1-6v6m1-6v6m1-6v5m1-4v5m1-3v3m1-4v5m1-6v5m1-6v6m1-5v6m1-5v4m1-4v5m1-5v4m1-7v6m1-6v6m1-5v5m1-4v6m1-6v4m1-4v5m1-5v5m1-5v6m1-7v5m1-4v6m1-8v7m1-5v4m1-3v5m1-5v4m1-7v7m1-221v5m1-3v4m1-7v6m1-4v4m1-4v4m0 1v1m1-6v5m1-6v6m1-6v5m1-4v6m1-5v5m1-6v4m1-5v5m1-5v6m1-4v5m1-6v5m1-6v6m1-5v5m1-6v6m1-5v6m1-7v5m1-4v6m1-6v5m1-5v5m1-5v6m1 209v4m1-4v6m1-6v4m1-5v6m1-5v6m1-6v5m1-6v6m1-7v6m1-4v5m1-4v5m1-6v4m1-4v5m1-7v2m0 2v2m1-5v6m1-6v6m1-6v1m0 1v4m1-7v7m1-6v6m1-5v6m1-7v7m1-7v6m1-6v6m1-5v6m1-7v5m1-5v7m1-6v6m1-6v6m1-7v5m1-5v5m1-5v5m1-4v4m1-4v5m1-6v4m1-2v4m1-6v7m1-6v6m1-7v6m1-5v6m1-6v5m1-6v6m1-6v5m1-4v5m1-5v5m1-5v3m1-3v4m1-5v6m1-6v6m1-5v4m1-4v5m1-5v6m1-6v5m1-6v5m1-4v3m1-4v6m1-4v4m1-5v5m1-6v6m1-4v4m1-6v6m1-6v6m1-5v5m1-6v6m1-5v4m1-6v1m0 1v2m0 1v1m1-4v5m1-6v6m1-5v5m1-5v5m1-6v6m1-5v4m1-4v6m1-6v6m1-221v5m1-4v3m1-5v4m1-4v6m1-5v5m1-6v7m1-7v7m1-7v4m1-3v5m1-4v4m1-4v4m1-5v4m1-2v4m1-5v3m1-4v4m1-2v5m1-6v4m1-6v5m1-5v7m1-7v4m0 1v1m1-6v7m1-6v5m1-4v4m1-6v6m1 209v6m1-6v7m1-5v4m1-4v4m1-6v6m1-6v6m1-4v4m1-4v6m1-8v7m1-6v6m1-6v6m1-6v5m1-6v6m1-6v8m1-7v5m1-4v6m1-7v4m1-5v5m1-5v5m1-4v5m1-5v1m0 1v2m1-5v5m1-6v7m1-4v4m1-5v6m1-7v5m1-5v5m1-5v6m1-5v5m1-7v6m0 1v1m1-7v7m1-6v5m1-6v6m1-5v4m1-4v6m1-7v6m1-5v5m1-6v6m1-6v6m1-6v1m0 1v4m1-6v7m1-8v8m1-6v7m1-8v6m1-6v5m1-4v4m1-4v5m1-5v5m1-6v8m1-5v3m1-5v5m1-4v3m1-4v5m1-6v6m1-5v5m1-6v6m1-5v6m1-6v5m1-7v6m1-4v6m1-6v3m1-5v8m1-8v7m1-7v6m1-5v5m1-6v5m1-4v6m1-5v6m1-6v4m1-4v3m1-4v6m1-7v7m1-220v5m1-4v3m1-4v5m1-6v6m1-5v4m1-6v6m1-4v6m1-6v5m1-6v4m1-3v5m1-6v6m1-5v5m1-5v4m1-3v5m1-6v5m1-6v4m1-3v5m1-5v5m1-6v7m1-6v5m1-5v3m1-1v3m1-6v6m1-6v6m1 209v5m1-4v5m1-5v4m1-3v4m1-7v8m1-6v5m1-6v5m1-4v6m1-7v7m1-6v5m1-6v6m1-6v5m1-5v7m1-6v5m1-7v7m1-5v7m1-6v4m1-7v7m1-7v8m1-7v6m1-6v5m1-6v7m1-7v6m1-3v3m1-4v6m1-6v5m1-6v6m1-5v5m1-5v5m1-5v5m1-4v5m1-8v1m0 1v4m1-4v6"/><path stroke="#a8a800" d="M101.5 262V466M197.5 262V466M293.5 262V466M389.5 262V466M484.5 262V466M580.5 262V466M676.5 262V466M772.5 262V466M868.5 262V466M963.5 262V466M29.5 262V466M125.5 262V466M221.5 262V466M317.5 262V466M412.5 262V466M508.5 262V466M604.5 262V466M700.5 262V466M796.5 262V466M891.5 262V466M987.5 262V466"/><path stroke="#5c5c00" d="M31.5 262V466"/></g>
<path fill="#bcb090" d="M21 30h1v1h-1zM21 43h1v1h-1zM21 56h1v1h-1zM21 69h1v1h-1zM21 95h1v1h-1zM21 108h1v1h-1zM21 121h1v1h-1zM21 134h1v1h-1zM21 160h1v1h-1zM21 173h1v1h-1zM21 186h1v1h-1zM21 199h1v1h-1zM21 225h1v1h-1zM21 238h1v1h-1zM21 251h1v1h-1zM21 264h1v1h-1zM21 290h1v1h-1zM21 303h1v1h-1zM21 316h1v1h-1zM21 329h1v1h-1zM21 342h1v1h-1zM21 355h1v1h-1zM21 368h1v1h-1zM21 381h1v1h-1zM21 394h1v1h-1zM21 420h1v1h-1zM21 433h1v1h-1zM21 446h1v1h-1zM21 459h1v1h-1zM21 485h1v1h-1zM21 498h1v1h-1zM21 511h1v1h-1zM21 524h1v1h-1zM21 550h1v1h-1zM21 563h1v1h-1zM21 576h1v1h-1zM21 589h1v1h-1zM21 615h1v1h-1zM21 628h1v1h-1zM21 641h1v1h-1zM21 654h1v1h-1zM22 82h1v1h-1zM22 147h1v1h-1zM22 212h1v1h-1zM22 277h1v1h-1zM22 407h1v1h-1zM22 472h1v1h-1zM22 537h1v1h-1zM22 602h1v1h-1zM23 30h1v1h-1zM23 43h1v1h-1zM23 56h1v1h-1zM23 69h1v1h-1zM23 95h1v1h-1zM23 108h1v1h-1zM23 121h1v1h-1zM23 134h1v1h-1zM23 160h1v1h-1zM23 173h1v1h-1zM23 186h1v1h-1zM23 199h1v1h-1zM23 225h1v1h-1zM23 238h1v1h-1zM23 251h1v1h-1zM23 264h1v1h-1zM23 290h1v1h-1zM23 303h1v1h-1zM23 316h1v1h-1zM23 329h1v1h-1zM23 342h1v1h-1zM23 355h1v1h-1zM23 368h1v1h-1zM23 381h1v1h-1zM23 394h1v1h-1zM23 420h1v1h-1zM23 433h1v1h-1zM23 446h1v1h-1zM23 459h1v1h-1zM23 485h1v1h-1zM23 498h1v1h-1zM23 511h1v1h-1zM23 524h1v1h-1zM23 550h1v1h-1zM23 563h1v1h-1zM23 576h1v1h-1zM23 589h1v1h-1zM23 615h1v1h-1zM23 628h1v1h-1zM23 641h1v1h-1zM23 654h1v1h-1zM24 82h1v1h-1zM24 147h1v1h-1zM24 212h1v1h-1zM24 277h1v1h-1zM24 407h1v1h-1zM24 472h1v1h-1zM24 537h1v1h-1zM24 602h1v1h-1zM25 342h1v1h-1zM26 82h1v1h-1zM26 147h1v1h-1zM26 212h1v1h-1zM26 277h1v1h-1zM26 407h1v1h-1zM26 472h1v1h-1zM26 537h1v1h-1zM26 602h1v1h-1zM27 342h1v1h-1zM29 342h1v1h-1zM31 342h1v1h-1zM33 342h1v1h-1zM35 342h1v1h-1zM37 342h1v1h-1zM39 342h1v1h-1zM41 17h1v1h-1zM41 19h1v1h-1zM41 82h1v1h-1zM41 147h1v1h-1zM41 212h1v1h-1zM41 277h1v1h-1zM41 339h1v1h-1zM41 341h1v1h-1zM41 342h1v1h-1zM41 343h1v1h-1zM41 345h1v1h-1zM41 407h1v1h-1zM41 472h1v1h-1zM41 537h1v1h-1zM41 602h1v1h-1zM41 665h1v1h-1zM41 667h1v1h-1zM43 342h1v1h-1zM45 342h1v1h-1zM47 342h1v1h-1zM49 342h1v1h-1zM51 342h1v1h-1zM53 342h1v1h-1zM55 342h1v1h-1zM57 342h1v1h-1zM59 342h1v1h-1zM61 17h1v1h-1zM61 19h1v1h-1zM61 82h1v1h-1zM61 147h1v1h-1zM61 212h1v1h-1zM61 277h1v1h-1zM61 339h1v1h-1zM61 341h1v1h-1zM61 342h1v1h-1zM61 343h1v1h-1zM61 345h1v1h-1zM61 407h1v1h-1zM61 472h1v1h-1zM61 537h1v1h-1zM61 602h1v1h-1zM61 665h1v1h-1zM61 667h1v1h-1zM63 342h1v1h-1zM65 342h1v1h-1zM67 342h1v1h-1zM69 342h1v1h-1zM71 342h1v1h-1zM73 342h1v1h-1zM75 342h1v1h-1zM77 342h1v1h-1zM79 342h1v1h-1zM81 17h1v1h-1zM81 19h1v1h-1zM81 82h1v1h-1zM81 147h1v1h-1zM81 212h1v1h-1zM81 277h1v1h-1zM81 339h1v1h-1zM81 341h1v1h-1zM81 342h1v1h-1zM81 343h1v1h-1zM81 345h1v1h-1zM81 407h1v1h-1zM81 472h1v1h-1zM81 537h1v1h-1zM81 602h1v1h-1zM81 665h1v1h-1zM81 667h1v1h-1zM83 342h1v1h-1zM85 342h1v1h-1zM87 342h1v1h-1zM89 342h1v1h-1zM91 342h1v1h-1zM93 342h1v1h-1zM95 342h1v1h-1zM97 342h1v1h-1zM99 342h1v1h-1zM101 17h1v1h-1zM101 19h1v1h-1zM101 82h1v1h-1zM101 147h1v1h-1zM101 212h1v1h-1zM101 277h1v1h-1zM101 339h1v1h-1zM101 341h1v1h-1zM101 342h1v1h-1zM101 343h1v1h-1zM101 345h1v1h-1zM101 407h1v1h-1zM101 472h1v1h-1zM101 537h1v1h-1zM101 602h1v1h-1zM101 665h1v1h-1zM101 667h1v1h-1zM103 342h1v1h-1zM105 342h1v1h-1zM107 342h1v1h-1zM109 342h1v1h-1zM111 342h1v1h-1zM113 342h1v1h-1zM115 342h1v1h-1zM117 342h1v1h-1zM119 342h1v1h-1zM121 18h1v1h-1zM121 20h1v1h-1zM121 22h1v1h-1zM121 30h1v1h-1zM121 43h1v1h-1zM121 56h1v1h-1zM121 69h1v1h-1zM121 82h1v1h-1zM121 95h1v1h-1zM121 108h1v1h-1zM121 121h1v1h-1zM121 134h1v1h-1zM121 147h1v1h-1zM121 160h1v1h-1zM121 173h1v1h-1zM121 186h1v1h-1zM121 199h1v1h-1zM121 212h1v1h-1zM121 225h1v1h-1zM121 238h1v1h-1zM121 251h1v1h-1zM121 264h1v1h-1zM121 277h1v1h-1zM121 290h1v1h-1zM121 303h1v1h-1zM121 316h1v1h-1zM121 329h1v1h-1zM121 339h1v1h-1zM121 341h1v1h-1zM121 342h1v1h-1zM121 343h1v1h-1zM121 345h1v1h-1zM121 355h1v1h-1zM121 368h1v1h-1zM121 381h1v1h-1zM121 394h1v1h-1zM121 407h1v1h-1zM121 420h1v1h-1zM121 433h1v1h-1zM121 446h1v1h-1zM121 459h1v1h-1zM121 472h1v1h-1zM121 485h1v1h-1zM121 498h1v1h-1zM121 511h1v1h-1zM121 524h1v1h-1zM121 537h1v1h-1zM121 550h1v1h-1zM121 563h1v1h-1zM121 576h1v1h-1zM121 589h1v1h-1zM121 602h1v1h-1zM121 615h1v1h-1zM121 628h1v1h-1zM121 641h1v1h-1zM121 654h1v1h-1zM121 662h1v1h-1zM121 664h1v1h-1zM121 666h1v1h-1zM123 342h1v1h-1zM125 342h1v1h-1zM127 342h1v1h-1zM129 342h1v1h-1zM131 342h1v1h-1zM133 342h1v1h-1zM135 342h1v1h-1zM137 342h1v1h-1zM139 342h1v1h-1zM141 17h1v1h-1zM141 19h1v1h-1zM141 82h1v1h-1zM141 147h1v1h-1zM141 212h1v1h-1zM141 277h1v1h-1zM141 339h1v1h-1zM141 341h1v1h-1zM141 342h1v1h-1zM141 343h1v1h-1zM141 345h1v1h-1zM141 407h1v1h-1zM141 472h1v1h-1zM141 537h1v1h-1zM141 602h1v1h-1zM141 665h1v1h-1zM141 667h1v1h-1zM143 342h1v1h-1zM145 342h1v1h-1zM147 342h1v1h-1zM149 342h1v1h-1zM151 342h1v1h-1zM153 342h1v1h-1zM155 342h1v1h-1zM157 342h1v1h-1zM159 342h1v1h-1zM161 17h1v1h-1zM161 19h1v1h-1zM161 82h1v1h-1zM161 147h1v1h-1zM161 212h1v1h-1zM161 277h1v1h-1zM161 339h1v1h-1zM161 341h1v1h-1zM161 342h1v1h-1zM161 343h1v1h-1zM161 345h1v1h-1zM161 407h1v1h-1zM161 472h1v1h-1zM161 537h1v1h-1zM161 602h1v1h-1zM161 665h1v1h-1zM161 667h1v1h-1zM163 342h1v1h-1zM165 342h1v1h-1zM167 342h1v1h-1zM169 342h1v1h-1zM171 342h1v1h-1zM173 342h1v1h-1zM175 342h1v1h-1zM177 342h1v1h-1zM179 342h1v1h-1zM181 17h1v1h-1zM181 19h1v1h-1zM181 82h1v1h-1zM181 147h1v1h-1zM181 212h1v1h-1zM181 277h1v1h-1zM181 339h1v1h-1zM181 341h1v1h-1zM181 342h1v1h-1zM181 343h1v1h-1zM181 345h1v1h-1zM181 407h1v1h-1zM181 472h1v1h-1zM181 537h1v1h-1zM181 602h1v1h-1zM181 665h1v1h-1zM181 667h1v1h-1zM183 342h1v1h-1zM185 342h1v1h-1zM187 342h1v1h-1zM189 342h1v1h-1zM191 342h1v1h-1zM193 342h1v1h-1zM195 342h1v1h-1zM197 342h1v1h-1zM199 342h1v1h-1zM201 17h1v1h-1zM201 19h1v1h-1zM201 82h1v1h-1zM201 147h1v1h-1zM201 212h1v1h-1zM201 277h1v1h-1zM201 339h1v1h-1zM201 341h1v1h-1zM201 342h1v1h-1zM201 343h1v1h-1zM201 345h1v1h-1zM201 407h1v1h-1zM201 472h1v1h-1zM201 537h1v1h-1zM201 602h1v1h-1zM201 665h1v1h-1zM201 667h1v1h-1zM203 342h1v1h-1zM205 342h1v1h-1zM207 342h1v1h-1zM209 342h1v1h-1zM211 342h1v1h-1zM213 342h1v1h-1zM215 342h1v1h-1zM217 342h1v1h-1zM219 342h1v1h-1zM221 18h1v1h-1zM221 20h1v1h-1zM221 22h1v1h-1zM221 30h1v1h-1zM221 43h1v1h-1zM221 56h1v1h-1zM221 69h1v1h-1zM221 82h1v1h-1zM221 95h1v1h-1zM221 108h1v1h-1zM221 121h1v1h-1zM221 134h1v1h-1zM221 147h1v1h-1zM221 160h1v1h-1zM221 173h1v1h-1zM221 186h1v1h-1zM221 199h1v1h-1zM221 212h1v1h-1zM221 225h1v1h-1zM221 238h1v1h-1zM221 251h1v1h-1zM221 264h1v1h-1zM221 277h1v1h-1zM221 290h1v1h-1zM221 303h1v1h-1zM221 316h1v1h-1zM221 329h1v1h-1zM221 339h1v1h-1zM221 341h1v1h-1zM221 342h1v1h-1zM221 343h1v1h-1zM221 345h1v1h-1zM221 355h1v1h-1zM221 368h1v1h-1zM221 381h1v1h-1zM221 394h1v1h-1zM221 407h1v1h-1zM221 420h1v1h-1zM221 433h1v1h-1zM221 446h1v1h-1zM221 459h1v1h-1zM221 472h1v1h-1zM221 485h1v1h-1zM221 498h1v1h-1zM221 511h1v1h-1zM221 524h1v1h-1zM221 537h1v1h-1zM221 550h1v1h-1zM221 563h1v1h-1zM221 576h1v1h-1zM221 589h1v1h-1zM221 602h1v1h-1zM221 615h1v1h-1zM221 628h1v1h-1zM221 641h1v1h-1zM221 654h1v1h-1zM221 662h1v1h-1zM221 664h1v1h-1zM221 666h1v1h-1zM223 342h1v1h-1zM225 342h1v1h-1zM227 342h1v1h-1zM229 342h1v1h-1zM231 342h1v1h-1zM233 342h1v1h-1zM235 342h1v1h-1zM237 342h1v1h-1zM239 342h1v1h-1zM241 17h1v1h-1zM241 19h1v1h-1zM241 82h1v1h-1zM241 147h1v1h-1zM241 212h1v1h-1zM241 277h1v1h-1zM241 339h1v1h-1zM241 341h1v1h-1zM241 342h1v1h-1zM241 343h1v1h-1zM241 345h1v1h-1zM241 407h1v1h-1zM241 472h1v1h-1zM241 537h1v1h-1zM241 602h1v1h-1zM241 665h1v1h-1zM241 667h1v1h-1zM243 342h1v1h-1zM245 342h1v1h-1zM247 342h1v1h-1zM249 342h1v1h-1zM251 342h1v1h-1zM253 342h1v1h-1zM255 342h1v1h-1zM257 342h1v1h-1zM259 342h1v1h-1zM261 17h1v1h-1zM261 19h1v1h-1zM261 82h1v1h-1zM261 147h1v1h-1zM261 212h1v1h-1zM261 277h1v1h-1zM261 339h1v1h-1zM261 341h1v1h-1zM261 342h1v1h-1zM261 343h1v1h-1zM261 345h1v1h-1zM261 407h1v1h-1zM261 472h1v1h-1zM261 537h1v1h-1zM261 602h1v1h-1zM261 665h1v1h-1zM261 667h1v1h-1zM263 342h1v1h-1zM265 342h1v1h-1zM267 342h1v1h-1zM269 342h1v1h-1zM271 342h1v1h-1zM273 342h1v1h-1zM275 342h1v1h-1zM277 342h1v1h-1zM279 342h1v1h-1zM281 17h1v1h-1zM281 19h1v1h-1zM281 82h1v1h-1zM281 147h1v1h-1zM281 212h1v1h-1zM281 277h1v1h-1zM281 339h1v1h-1zM281 341h1v1h-1zM281 342h1v1h-1zM281 343h1v1h-1zM281 345h1v1h-1zM281 407h1v1h-1zM281 472h1v1h-1zM281 537h1v1h-1zM281 602h1v1h-1zM281 665h1v1h-1zM281 667h1v1h-1zM283 342h1v1h-1zM285 342h1v1h-1zM287 342h1v1h-1zM289 342h1v1h-1zM291 342h1v1h-1zM293 342h1v1h-1zM295 342h1v1h-1zM297 342h1v1h-1zM299 342h1v1h-1zM301 17h1v1h-1zM301 19h1v1h-1zM301 82h1v1h-1zM301 147h1v1h-1zM301 212h1v1h-1zM301 277h1v1h-1zM301 339h1v1h-1zM301 341h1v1h-1zM301 342h1v1h-1zM301 343h1v1h-1zM301 345h1v1h-1zM301 407h1v1h-1zM301 472h1v1h-1zM301 537h1v1h-1zM301 602h1v1h-1zM301 665h1v1h-1zM301 667h1v1h-1zM303 342h1v1h-1zM305 342h1v1h-1zM307 342h1v1h-1zM309 342h1v1h-1zM311 342h1v1h-1zM313 342h1v1h-1zM315 342h1v1h-1zM317 342h1v1h-1zM319 342h1v1h-1zM321 18h1v1h-1zM321 20h1v1h-1zM321 22h1v1h-1zM321 30h1v1h-1zM321 43h1v1h-1zM321 56h1v1h-1zM321 69h1v1h-1zM321 82h1v1h-1zM321 95h1v1h-1zM321 108h1v1h-1zM321 121h1v1h-1zM321 134h1v1h-1zM321 147h1v1h-1zM321 160h1v1h-1zM321 173h1v1h-1zM321 186h1v1h-1zM321 199h1v1h-1zM321 212h1v1h-1zM321 225h1v1h-1zM321 238h1v1h-1zM321 251h1v1h-1zM321 264h1v1h-1zM321 277h1v1h-1zM321 290h1v1h-1zM321 303h1v1h-1zM321 316h1v1h-1zM321 329h1v1h-1zM321 339h1v1h-1zM321 341h1v1h-1zM321 342h1v1h-1zM321 343h1v1h-1zM321 345h1v1h-1zM321 355h1v1h-1zM321 368h1v1h-1zM321 381h1v1h-1zM321 394h1v1h-1zM321 407h1v1h-1zM321 420h1v1h-1zM321 433h1v1h-1zM321 446h1v1h-1zM321 459h1v1h-1zM321 472h1v1h-1zM321 485h1v1h-1zM321 498h1v1h-1zM321 511h1v1h-1zM321 524h1v1h-1zM321 537h1v1h-1zM321 550h1v1h-1zM321 563h1v1h-1zM321 576h1v1h-1zM321 589h1v1h-1zM321 602h1v1h-1zM321 615h1v1h-1zM321 628h1v1h-1zM321 641h1v1h-1zM321 654h1v1h-1zM321 662h1v1h-1zM321 664h1v1h-1zM321 666h1v1h-1zM323 342h1v1h-1zM325 342h1v1h-1zM327 342h1v1h-1zM329 342h1v1h-1zM331 342h1v1h-1zM333 342h1v1h-1zM335 342h1v1h-1zM337 342h1v1h-1zM339 342h1v1h-1zM341 17h1v1h-1zM341 19h1v1h-1zM341 82h1v1h-1zM341 147h1v1h-1zM341 212h1v1h-1zM341 277h1v1h-1zM341 339h1v1h-1zM341 341h1v1h-1zM341 342h1v1h-1zM341 343h1v1h-1zM341 345h1v1h-1zM341 407h1v1h-1zM341 472h1v1h-1zM341 537h1v1h-1zM341 602h1v1h-1zM341 665h1v1h-1zM341 667h1v1h-1zM343 342h1v1h-1zM345 342h1v1h-1zM347 342h1v1h-1zM349 342h1v1h-1zM351 342h1v1h-1zM353 342h1v1h-1zM355 342h1v1h-1zM357 342h1v1h-1zM359 342h1v1h-1zM361 17h1v1h-1zM361 19h1v1h-1zM361 82h1v1h-1zM361 147h1v1h-1zM361 212h1v1h-1zM361 277h1v1h-1zM361 339h1v1h-1zM361 341h1v1h-1zM361 342h1v1h-1zM361 343h1v1h-1zM361 345h1v1h-1zM361 407h1v1h-1zM361 472h1v1h-1zM361 537h1v1h-1zM361 602h1v1h-1zM361 665h1v1h-1zM361 667h1v1h-1zM363 342h1v1h-1zM365 342h1v1h-1zM367 342h1v1h-1zM369 342h1v1h-1zM371 342h1v1h-1zM373 342h1v1h-1zM375 342h1v1h-1zM377 342h1v1h-1zM379 342h1v1h-1zM381 17h1v1h-1zM381 19h1v1h-1zM381 82h1v1h-1zM381 147h1v1h-1zM381 212h1v1h-1zM381 277h1v1h-1zM381 339h1v1h-1zM381 341h1v1h-1zM381 342h1v1h-1zM381 343h1v1h-1zM381 345h1v1h-1zM381 407h1v1h-1zM381 472h1v1h-1zM381 537h1v1h-1zM381 602h1v1h-1zM381 665h1v1h-1zM381 667h1v1h-1zM383 342h1v1h-1zM385 342h1v1h-1zM387 342h1v1h-1zM389 342h1v1h-1zM391 342h1v1h-1zM393 342h1v1h-1zM395 342h1v1h-1zM397 342h1v1h-1zM399 342h1v1h-1zM401 17h1v1h-1zM401 19h1v1h-1zM401 82h1v1h-1zM401 147h1v1h-1zM401 212h1v1h-1zM401 277h1v1h-1zM401 339h1v1h-1zM401 341h1v1h-1zM401 342h1v1h-1zM401 343h1v1h-1zM401 345h1v1h-1zM401 407h1v1h-1zM401 472h1v1h-1zM401 537h1v1h-1zM401 602h1v1h-1zM401 665h1v1h-1zM401 667h1v1h-1zM403 342h1v1h-1zM405 342h1v1h-1zM407 342h1v1h-1zM409 342h1v1h-1zM411 342h1v1h-1zM413 342h1v1h-1zM415 342h1v1h-1zM417 342h1v1h-1zM419 342h1v1h-1zM421 18h1v1h-1zM421 20h1v1h-1zM421 22h1v1h-1zM421 30h1v1h-1zM421 43h1v1h-1zM421 56h1v1h-1zM421 69h1v1h-1zM421 82h1v1h-1zM421 95h1v1h-1zM421 108h1v1h-1zM421 121h1v1h-1zM421 134h1v1h-1zM421 147h1v1h-1zM421 160h1v1h-1zM421 173h1v1h-1zM421 186h1v1h-1zM421 199h1v1h-1zM421 212h1v1h-1zM421 225h1v1h-1zM421 238h1v1h-1zM421 251h1v1h-1zM421 264h1v1h-1zM421 277h1v1h-1zM421 290h1v1h-1zM421 303h1v1h-1zM421 316h1v1h-1zM421 329h1v1h-1zM421 339h1v1h-1zM421 341h1v1h-1zM421 342h1v1h-1zM421 343h1v1h-1zM421 345h1v1h-1zM421 355h1v1h-1zM421 368h1v1h-1zM421 381h1v1h-1zM421 394h1v1h-1zM421 407h1v1h-1zM421 420h1v1h-1zM421 433h1v1h-1zM421 446h1v1h-1zM421 459h1v1h-1zM421 472h1v1h-1zM421 485h1v1h-1zM421 498h1v1h-1zM421 511h1v1h-1zM421 524h1v1h-1zM421 537h1v1h-1zM421 550h1v1h-1zM421 563h1v1h-1zM421 576h1v1h-1zM421 589h1v1h-1zM421 602h1v1h-1zM421 615h1v1h-1zM421 628h1v1h-1zM421 641h1v1h-1zM421 654h1v1h-1zM421 662h1v1h-1zM421 664h1v1h-1zM421 666h1v1h-1zM423 342h1v1h-1zM425 342h1v1h-1zM427 342h1v1h-1zM429 342h1v1h-1zM431 342h1v1h-1zM433 342h1v1h-1zM435 342h1v1h-1zM437 342h1v1h-1zM439 342h1v1h-1zM441 17h1v1h-1zM441 19h1v1h-1zM441 82h1v1h-1zM441 147h1v1h-1zM441 212h1v1h-1zM441 277h1v1h-1zM441 339h1v1h-1zM441 341h1v1h-1zM441 342h1v1h-1zM441 343h1v1h-1zM441 345h1v1h-1zM441 407h1v1h-1zM441 472h1v1h-1zM441 537h1v1h-1zM441 602h1v1h-1zM441 665h1v1h-1zM441 667h1v1h-1zM443 342h1v1h-1zM445 342h1v1h-1zM447 342h1v1h-1zM449 342h1v1h-1zM451 342h1v1h-1zM453 342h1v1h-1zM455 342h1v1h-1zM457 342h1v1h-1zM459 342h1v1h-1zM461 17h1v1h-1zM461 19h1v1h-1zM461 82h1v1h-1zM461 147h1v1h-1zM461 212h1v1h-1zM461 277h1v1h-1zM461 339h1v1h-1zM461 341h1v1h-1zM461 342h1v1h-1zM461 343h1v1h-1zM461 345h1v1h-1zM461 407h1v1h-1zM461 472h1v1h-1zM461 537h1v1h-1zM461 602h1v1h-1zM461 665h1v1h-1zM461 667h1v1h-1zM463 342h1v1h-1zM465 342h1v1h-1zM467 342h1v1h-1zM469 342h1v1h-1zM471 342h1v1h-1zM473 342h1v1h-1zM475 342h1v1h-1zM477 342h1v1h-1zM479 342h1v1h-1zM481 17h1v1h-1zM481 19h1v1h-1zM481 82h1v1h-1zM481 147h1v1h-1zM481 212h1v1h-1zM481 277h1v1h-1zM481 339h1v1h-1zM481 341h1v1h-1zM481 342h1v1h-1zM481 343h1v1h-1zM481 345h1v1h-1zM481 407h1v1h-1zM481 472h1v1h-1zM481 537h1v1h-1zM481 602h1v1h-1zM481 665h1v1h-1zM481 667h1v1h-1zM483 342h1v1h-1zM485 342h1v1h-1zM487 342h1v1h-1zM489 342h1v1h-1zM491 342h1v1h-1zM493 342h1v1h-1zM495 342h1v1h-1zM497 342h1v1h-1zM499 342h1v1h-1zM501 17h1v1h-1zM501 19h1v1h-1zM501 82h1v1h-1zM501 147h1v1h-1zM501 212h1v1h-1zM501 277h1v1h-1zM501 339h1v1h-1zM501 341h1v1h-1zM501 342h1v1h-1zM501 343h1v1h-1zM501 345h1v1h-1zM501 407h1v1h-1zM501 472h1v1h-1zM501 537h1v1h-1zM501 602h1v1h-1zM501 665h1v1h-1zM501 667h1v1h-1zM503 342h1v1h-1zM505 342h1v1h-1zM507 342h1v1h-1zM509 342h1v1h-1zM511 342h1v1h-1zM513 342h1v1h-1zM515 342h1v1h-1zM517 342h1v1h-1zM518 30h1v1h-1zM518 43h1v1h-1zM518 56h1v1h-1zM518 69h1v1h-1zM518 82h1v1h-1zM518 95h1v1h-1zM518 108h1v1h-1zM518 121h1v1h-1zM518 134h1v1h-1zM518 147h1v1h-1zM518 160h1v1h-1zM518 173h1v1h-1zM518 186h1v1h-1zM518 199h1v1h-1zM518 212h1v1h-1zM518 225h1v1h-1zM518 238h1v1h-1zM518 251h1v1h-1zM518 264h1v1h-1zM518 277h1v1h-1zM518 290h1v1h-1zM518 303h1v1h-1zM518 316h1v1h-1zM518 329h1v1h-1zM518 355h1v1h-1zM518 368h1v1h-1zM518 381h1v1h-1zM518 394h1v1h-1zM518 407h1v1h-1zM518 420h1v1h-1zM518 433h1v1h-1zM518 446h1v1h-1zM518 459h1v1h-1zM518 472h1v1h-1zM518 485h1v1h-1zM518 498h1v1h-1zM518 511h1v1h-1zM518 524h1v1h-1zM518 537h1v1h-1zM518 550h1v1h-1zM518 563h1v1h-1zM518 576h1v1h-1zM518 589h1v1h-1zM518 602h1v1h-1zM518 615h1v1h-1zM518 628h1v1h-1zM518 641h1v1h-1zM518 654h1v1h-1zM519 342h1v1h-1zM520 30h1v1h-1zM520 43h1v1h-1zM520 56h1v1h-1zM520 69h1v1h-1zM520 82h1v1h-1zM520 95h1v1h-1zM520 108h1v1h-1zM520 121h1v1h-1zM520 134h1v1h-1zM520 147h1v1h-1zM520 160h1v1h-1zM520 173h1v1h-1zM520 186h1v1h-1zM520 199h1v1h-1zM520 212h1v1h-1zM520 225h1v1h-1zM520 238h1v1h-1zM520 251h1v1h-1zM520 264h1v1h-1zM520 277h1v1h-1zM520 290h1v1h-1zM520 303h1v1h-1zM520 316h1v1h-1zM520 329h1v1h-1zM520 355h1v1h-1zM520 368h1v1h-1zM520 381h1v1h-1zM520 394h1v1h-1zM520 407h1v1h-1zM520 420h1v1h-1zM520 433h1v1h-1zM520 446h1v1h-1zM520 459h1v1h-1zM520 472h1v1h-1zM520 485h1v1h-1zM520 498h1v1h-1zM520 511h1v1h-1zM520 524h1v1h-1zM520 537h1v1h-1zM520 550h1v1h-1zM520 563h1v1h-1zM520 576h1v1h-1zM520 589h1v1h-1zM520 602h1v1h-1zM520 615h1v1h-1zM520 628h1v1h-1zM520 641h1v1h-1zM520 654h1v1h-1zM521 18h1v1h-1zM521 20h1v1h-1zM521 22h1v1h-1zM521 24h1v1h-1zM521 26h1v1h-1zM521 28h1v1h-1zM521 30h1v1h-1zM521 32h1v1h-1zM521 34h1v1h-1zM521 36h1v1h-1zM521 38h1v1h-1zM521 40h1v1h-1zM521 42h1v1h-1zM521 43h1v1h-1zM521 44h1v1h-1zM521 46h1v1h-1zM521 48h1v1h-1zM521 50h1v1h-1zM521 52h1v1h-1zM521 54h1v1h-1zM521 56h1v1h-1zM521 58h1v1h-1zM521 60h1v1h-1zM521 62h1v1h-1zM521 64h1v1h-1zM521 66h1v1h-1zM521 68h1v1h-1zM521 69h1v1h-1zM521 70h1v1h-1zM521 72h1v1h-1zM521 74h1v1h-1zM521 76h1v1h-1zM521 78h1v1h-1zM521 80h1v1h-1zM521 82h1v1h-1zM521 84h1v1h-1zM521 86h1v1h-1zM521 88h1v1h-1zM521 90h1v1h-1zM521 92h1v1h-1zM521 94h1v1h-1zM521 95h1v1h-1zM521 96h1v1h-1zM521 98h1v1h-1zM521 100h1v1h-1zM521 102h1v1h-1zM521 104h1v1h-1zM521 106h1v1h-1zM521 108h1v1h-1zM521 110h1v1h-1zM521 112h1v1h-1zM521 114h1v1h-1zM521 116h1v1h-1zM521 118h1v1h-1zM521 120h1v1h-1zM521 121h1v1h-1zM521 122h1v1h-1zM521 124h1v1h-1zM521 126h1v1h-1zM521 128h1v1h-1zM521 130h1v1h-1zM521 132h1v1h-1zM521 134h1v1h-1zM521 136h1v1h-1zM521 138h1v1h-1zM521 140h1v1h-1zM521 142h1v1h-1zM521 144h1v1h-1zM521 146h1v1h-1zM521 147h1v1h-1zM521 148h1v1h-1zM521 150h1v1h-1zM521 152h1v1h-1zM521 154h1v1h-1zM521 156h1v1h-1zM521 158h1v1h-1zM521 160h1v1h-1zM521 162h1v1h-1zM521 164h1v1h-1zM521 166h1v1h-1zM521 168h1v1h-1zM521 170h1v1h-1zM521 172h1v1h-1zM521 173h1v1h-1zM521 174h1v1h-1zM521 176h1v1h-1zM521 178h1v1h-1zM521 180h1v1h-1zM521 182h1v1h-1zM521 184h1v1h-1zM521 186h1v1h-1zM521 188h1v1h-1zM521 190h1v1h-1zM521 192h1v1h-1zM521 194h1v1h-1zM521 196h1v1h-1zM521 198h1v1h-1zM521 199h1v1h-1zM521 200h1v1h-1zM521 202h1v1h-1zM521 204h1v1h-1zM521 206h1v1h-1zM521 208h1v1h-1zM521 210h1v1h-1zM521 212h1v1h-1zM521 214h1v1h-1zM521 216h1v1h-1zM521 218h1v1h-1zM521 220h1v1h-1zM521 222h1v1h-1zM521 224h1v1h-1zM521 225h1v1h-1zM521 226h1v1h-1zM521 228h1v1h-1zM521 230h1v1h-1zM521 232h1v1h-1zM521 234h1v1h-1zM521 236h1v1h-1zM521 238h1v1h-1zM521 240h1v1h-1zM521 242h1v1h-1zM521 244h1v1h-1zM521 246h1v1h-1zM521 248h1v1h-1zM521 250h1v1h-1zM521 251h1v1h-1zM521 252h1v1h-1zM521 254h1v1h-1zM521 256h1v1h-1zM521 258h1v1h-1zM521 260h1v1h-1zM521 262h1v1h-1zM521 264h1v1h-1zM521 266h1v1h-1zM521 268h1v1h-1zM521 270h1v1h-1zM521 272h1v1h-1zM521 274h1v1h-1zM521 276h1v1h-1zM521 277h1v1h-1zM521 278h1v1h-1zM521 280h1v1h-1zM521 282h1v1h-1zM521 284h1v1h-1zM521 286h1v1h-1zM521 288h1v1h-1zM521 290h1v1h-1zM521 292h1v1h-1zM521 294h1v1h-1zM521 296h1v1h-1zM521 298h1v1h-1zM521 300h1v1h-1zM521 302h1v1h-1zM521 303h1v1h-1zM521 304h1v1h-1zM521 306h1v1h-1zM521 308h1v1h-1zM521 310h1v1h-1zM521 312h1v1h-1zM521 314h1v1h-1zM521 316h1v1h-1zM521 318h1v1h-1zM521 320h1v1h-1zM521 322h1v1h-1zM521 324h1v1h-1zM521 326h1v1h-1zM521 328h1v1h-1zM521 329h1v1h-1zM521 330h1v1h-1zM521 332h1v1h-1zM521 334h1v1h-1zM521 336h1v1h-1zM521 338h1v1h-1zM521 340h1v1h-1zM521 342h1v1h-1zM521 344h1v1h-1zM521 346h1v1h-1zM521 348h1v1h-1zM521 350h1v1h-1zM521 352h1v1h-1zM521 354h1v1h-1zM521 355h1v1h-1zM521 356h1v1h-1zM521 358h1v1h-1zM521 360h1v1h-1zM521 362h1v1h-1zM521 364h1v1h-1zM521 366h1v1h-1zM521 368h1v1h-1zM521 370h1v1h-1zM521 372h1v1h-1zM521 374h1v1h-1zM521 376h1v1h-1zM521 378h1v1h-1zM521 380h1v1h-1zM521 381h1v1h-1zM521 382h1v1h-1zM521 384h1v1h-1zM521 386h1v1h-1zM521 388h1v1h-1zM521 390h1v1h-1zM521 392h1v1h-1zM521 394h1v1h-1zM521 396h1v1h-1zM521 398h1v1h-1zM521 400h1v1h-1zM521 402h1v1h-1zM521 404h1v1h-1zM521 406h1v1h-1zM521 407h1v1h-1zM521 408h1v1h-1zM521 410h1v1h-1zM521 412h1v1h-1zM521 414h1v1h-1zM521 416h1v1h-1zM521 418h1v1h-1zM521 420h1v1h-1zM521 422h1v1h-1zM521 424h1v1h-1zM521 426h1v1h-1zM521 428h1v1h-1zM521 430h1v1h-1zM521 432h1v1h-1zM521 433h1v1h-1zM521 434h1v1h-1zM521 436h1v1h-1zM521 438h1v1h-1zM521 440h1v1h-1zM521 442h1v1h-1zM521 444h1v1h-1zM521 446h1v1h-1zM521 448h1v1h-1zM521 450h1v1h-1zM521 452h1v1h-1zM521 454h1v1h-1zM521 456h1v1h-1zM521 458h1v1h-1zM521 459h1v1h-1zM521 460h1v1h-1zM521 462h1v1h-1zM521 464h1v1h-1zM521 466h1v1h-1zM521 468h1v1h-1zM521 470h1v1h-1zM521 472h1v1h-1zM521 474h1v1h-1zM521 476h1v1h-1zM521 478h1v1h-1zM521 480h1v1h-1zM521 482h1v1h-1zM521 484h1v1h-1zM521 485h1v1h-1zM521 486h1v1h-1zM521 488h1v1h-1zM521 490h1v1h-1zM521 492h1v1h-1zM521 494h1v1h-1zM521 496h1v1h-1zM521 498h1v1h-1zM521 500h1v1h-1zM521 502h1v1h-1zM521 504h1v1h-1zM521 506h1v1h-1zM521 508h1v1h-1zM521 510h1v1h-1zM521 511h1v1h-1zM521 512h1v1h-1zM521 514h1v1h-1zM521 516h1v1h-1zM521 518h1v1h-1zM521 520h1v1h-1zM521 522h1v1h-1zM521 524h1v1h-1zM521 526h1v1h-1zM521 528h1v1h-1zM521 530h1v1h-1zM521 532h1v1h-1zM521 534h1v1h-1zM521 536h1v1h-1zM521 537h1v1h-1zM521 538h1v1h-1zM521 540h1v1h-1zM521 542h1v1h-1zM521 544h1v1h-1zM521 546h1v1h-1zM521 548h1v1h-1zM521 550h1v1h-1zM521 552h1v1h-1zM521 554h1v1h-1zM521 556h1v1h-1zM521 558h1v1h-1zM521 560h1v1h-1zM521 562h1v1h-1zM521 563h1v1h-1zM521 564h1v1h-1zM521 566h1v1h-1zM521 568h1v1h-1zM521 570h1v1h-1zM521 572h1v1h-1zM521 574h1v1h-1zM521 576h1v1h-1zM521 578h1v1h-1zM521 580h1v1h-1zM521 582h1v1h-1zM521 584h1v1h-1zM521 586h1v1h-1zM521 588h1v1h-1zM521 589h1v1h-1zM521 590h1v1h-1zM521 592h1v1h-1zM521 594h1v1h-1zM521 596h1v1h-1zM521 598h1v1h-1zM521 600h1v1h-1zM521 602h1v1h-1zM521 604h1v1h-1zM521 606h1v1h-1zM521 608h1v1h-1zM521 610h1v1h-1zM521 612h1v1h-1zM521 614h1v1h-1zM521 615h1v1h-1zM521 616h1v1h-1zM521 618h1v1h-1zM521 620h1v1h-1zM521 622h1v1h-1zM521 624h1v1h-1zM521 626h1v1h-1zM521 628h1v1h-1zM521 630h1v1h-1zM521 632h1v1h-1zM521 634h1v1h-1zM521 636h1v1h-1zM521 638h1v1h-1zM521 640h1v1h-1zM521 641h1v1h-1zM521 642h1v1h-1zM521 644h1v1h-1zM521 646h1v1h-1zM521 648h1v1h-1zM521 650h1v1h-1zM521 652h1v1h-1zM521 654h1v1h-1zM521 656h1v1h-1zM521 658h1v1h-1zM521 660h1v1h-1zM521 662h1v1h-1zM521 664h1v1h-1zM521 666h1v1h-1zM522 30h1v1h-1zM522 43h1v1h-1zM522 56h1v1h-1zM522 69h1v1h-1zM522 82h1v1h-1zM522 95h1v1h-1zM522 108h1v1h-1zM522 121h1v1h-1zM522 134h1v1h-1zM522 147h1v1h-1zM522 160h1v1h-1zM522 173h1v1h-1zM522 186h1v1h-1zM522 199h1v1h-1zM522 212h1v1h-1zM522 225h1v1h-1zM522 238h1v1h-1zM522 251h1v1h-1zM522 264h1v1h-1zM522 277h1v1h-1zM522 290h1v1h-1zM522 303h1v1h-1zM522 316h1v1h-1zM522 329h1v1h-1zM522 355h1v1h-1zM522 368h1v1h-1zM522 381h1v1h-1zM522 394h1v1h-1zM522 407h1v1h-1zM522 420h1v1h-1zM522 433h1v1h-1zM522 446h1v1h-1zM522 459h1v1h-1zM522 472h1v1h-1zM522 485h1v1h-1zM522 498h1v1h-1zM522 511h1v1h-1zM522 524h1v1h-1zM522 537h1v1h-1zM522 550h1v1h-1zM522 563h1v1h-1zM522 576h1v1h-1zM522 589h1v1h-1zM522 602h1v1h-1zM522 615h1v1h-1zM522 628h1v1h-1zM522 641h1v1h-1zM522 654h1v1h-1zM523 342h1v1h-1zM524 30h1v1h-1zM524 43h1v1h-1zM524 56h1v1h-1zM524 69h1v1h-1zM524 82h1v1h-1zM524 95h1v1h-1zM524 108h1v1h-1zM524 121h1v1h-1zM524 134h1v1h-1zM524 147h1v1h-1zM524 160h1v1h-1zM524 173h1v1h-1zM524 186h1v1h-1zM524 199h1v1h-1zM524 212h1v1h-1zM524 225h1v1h-1zM524 238h1v1h-1zM524 251h1v1h-1zM524 264h1v1h-1zM524 277h1v1h-1zM524 290h1v1h-1zM524 303h1v1h-1zM524 316h1v1h-1zM524 329h1v1h-1zM524 355h1v1h-1zM524 368h1v1h-1zM524 381h1v1h-1zM524 394h1v1h-1zM524 407h1v1h-1zM524 420h1v1h-1zM524 433h1v1h-1zM524 446h1v1h-1zM524 459h1v1h-1zM524 472h1v1h-1zM524 485h1v1h-1zM524 498h1v1h-1zM524 511h1v1h-1zM524 524h1v1h-1zM524 537h1v1h-1zM524 550h1v1h-1zM524 563h1v1h-1zM524 576h1v1h-1zM524 589h1v1h-1zM524 602h1v1h-1zM524 615h1v1h-1zM524 628h1v1h-1zM524 641h1v1h-1zM524 654h1v1h-1zM525 342h1v1h-1zM527 342h1v1h-1zM529 342h1v1h-1zM531 342h1v1h-1zM533 342h1v1h-1zM535 342h1v1h-1zM537 342h1v1h-1zM539 342h1v1h-1zM541 17h1v1h-1zM541 19h1v1h-1zM541 82h1v1h-1zM541 147h1v1h-1zM541 212h1v1h-1zM541 277h1v1h-1zM541 339h1v1h-1zM541 341h1v1h-1zM541 342h1v1h-1zM541 343h1v1h-1zM541 345h1v1h-1zM541 407h1v1h-1zM541 472h1v1h-1zM541 537h1v1h-1zM541 602h1v1h-1zM541 665h1v1h-1zM541 667h1v1h-1zM543 342h1v1h-1zM545 342h1v1h-1zM547 342h1v1h-1zM549 342h1v1h-1zM551 342h1v1h-1zM553 342h1v1h-1zM555 342h1v1h-1zM557 342h1v1h-1zM559 342h1v1h-1zM561 17h1v1h-1zM561 19h1v1h-1zM561 82h1v1h-1zM561 147h1v1h-1zM561 212h1v1h-1zM561 277h1v1h-1zM561 339h1v1h-1zM561 341h1v1h-1zM561 342h1v1h-1zM561 343h1v1h-1zM561 345h1v1h-1zM561 407h1v1h-1zM561 472h1v1h-1zM561 537h1v1h-1zM561 602h1v1h-1zM561 665h1v1h-1zM561 667h1v1h-1zM563 342h1v1h-1zM565 342h1v1h-1zM567 342h1v1h-1zM569 342h1v1h-1zM571 342h1v1h-1zM573 342h1v1h-1zM575 342h1v1h-1zM577 342h1v1h-1zM579 342h1v1h-1zM581 17h1v1h-1zM581 19h1v1h-1zM581 82h1v1h-1zM581 147h1v1h-1zM581 212h1v1h-1zM581 277h1v1h-1zM581 339h1v1h-1zM581 341h1v1h-1zM581 342h1v1h-1zM581 343h1v1h-1zM581 345h1v1h-1zM581 407h1v1h-1zM581 472h1v1h-1zM581 537h1v1h-1zM581 602h1v1h-1zM581 665h1v1h-1zM581 667h1v1h-1zM583 342h1v1h-1zM585 342h1v1h-1zM587 342h1v1h-1zM589 342h1v1h-1zM591 342h1v1h-1zM593 342h1v1h-1zM595 342h1v1h-1zM597 342h1v1h-1zM599 342h1v1h-1zM601 17h1v1h-1zM601 19h1v1h-1zM601 82h1v1h-1zM601 147h1v1h-1zM601 212h1v1h-1zM601 277h1v1h-1zM601 339h1v1h-1zM601 341h1v1h-1zM601 342h1v1h-1zM601 343h1v1h-1zM601 345h1v1h-1zM601 407h1v1h-1zM601 472h1v1h-1zM601 537h1v1h-1zM601 602h1v1h-1zM601 665h1v1h-1zM601 667h1v1h-1zM603 342h1v1h-1zM605 342h1v1h-1zM607 342h1v1h-1zM609 342h1v1h-1zM611 342h1v1h-1zM613 342h1v1h-1zM615 342h1v1h-1zM617 342h1v1h-1zM619 342h1v1h-1zM621 18h1v1h-1zM621 20h1v1h-1zM621 22h1v1h-1zM621 30h1v1h-1zM621 43h1v1h-1zM621 56h1v1h-1zM621 69h1v1h-1zM621 82h1v1h-1zM621 95h1v1h-1zM621 108h1v1h-1zM621 121h1v1h-1zM621 134h1v1h-1zM621 147h1v1h-1zM621 160h1v1h-1zM621 173h1v1h-1zM621 186h1v1h-1zM621 199h1v1h-1zM621 212h1v1h-1zM621 225h1v1h-1zM621 238h1v1h-1zM621 251h1v1h-1zM621 264h1v1h-1zM621 277h1v1h-1zM621 290h1v1h-1zM621 303h1v1h-1zM621 316h1v1h-1zM621 329h1v1h-1zM621 339h1v1h-1zM621 341h1v1h-1zM621 342h1v1h-1zM621 343h1v1h-1zM621 345h1v1h-1zM621 355h1v1h-1zM621 368h1v1h-1zM621 381h1v1h-1zM621 394h1v1h-1zM621 407h1v1h-1zM621 420h1v1h-1zM621 433h1v1h-1zM621 446h1v1h-1zM621 459h1v1h-1zM621 472h1v1h-1zM621 485h1v1h-1zM621 498h1v1h-1zM621 511h1v1h-1zM621 524h1v1h-1zM621 537h1v1h-1zM621 550h1v1h-1zM621 563h1v1h-1zM621 576h1v1h-1zM621 589h1v1h-1zM621 602h1v1h-1zM621 615h1v1h-1zM621 628h1v1h-1zM621 641h1v1h-1zM621 654h1v1h-1zM621 662h1v1h-1zM621 664h1v1h-1zM621 666h1v1h-1zM623 342h1v1h-1zM625 342h1v1h-1zM627 342h1v1h-1zM629 342h1v1h-1zM631 342h1v1h-1zM633 342h1v1h-1zM635 342h1v1h-1zM637 342h1v1h-1zM639 342h1v1h-1zM641 17h1v1h-1zM641 19h1v1h-1zM641 82h1v1h-1zM641 147h1v1h-1zM641 212h1v1h-1zM641 277h1v1h-1zM641 339h1v1h-1zM641 341h1v1h-1zM641 342h1v1h-1zM641 343h1v1h-1zM641 345h1v1h-1zM641 407h1v1h-1zM641 472h1v1h-1zM641 537h1v1h-1zM641 602h1v1h-1zM641 665h1v1h-1zM641 667h1v1h-1zM643 342h1v1h-1zM645 342h1v1h-1zM647 342h1v1h-1zM649 342h1v1h-1zM651 342h1v1h-1zM653 342h1v1h-1zM655 342h1v1h-1zM657 342h1v1h-1zM659 342h1v1h-1zM661 17h1v1h-1zM661 19h1v1h-1zM661 82h1v1h-1zM661 147h1v1h-1zM661 212h1v1h-1zM661 277h1v1h-1zM661 339h1v1h-1zM661 341h1v1h-1zM661 342h1v1h-1zM661 343h1v1h-1zM661 345h1v1h-1zM661 407h1v1h-1zM661 472h1v1h-1zM661 537h1v1h-1zM661 602h1v1h-1zM661 665h1v1h-1zM661 667h1v1h-1zM663 342h1v1h-1zM665 342h1v1h-1zM667 342h1v1h-1zM669 342h1v1h-1zM671 342h1v1h-1zM673 342h1v1h-1zM675 342h1v1h-1zM677 342h1v1h-1zM679 342h1v1h-1zM681 17h1v1h-1zM681 19h1v1h-1zM681 82h1v1h-1zM681 147h1v1h-1zM681 212h1v1h-1zM681 277h1v1h-1zM681 339h1v1h-1zM681 341h1v1h-1zM681 342h1v1h-1zM681 343h1v1h-1zM681 345h1v1h-1zM681 407h1v1h-1zM681 472h1v1h-1zM681 537h1v1h-1zM681 602h1v1h-1zM681 665h1v1h-1zM681 667h1v1h-1zM683 342h1v1h-1zM685 342h1v1h-1zM687 342h1v1h-1zM689 342h1v1h-1zM691 342h1v1h-1zM693 342h1v1h-1zM695 342h1v1h-1zM697 342h1v1h-1zM699 342h1v1h-1zM701 17h1v1h-1zM701 19h1v1h-1zM701 82h1v1h-1zM701 147h1v1h-1zM701 212h1v1h-1zM701 277h1v1h-1zM701 339h1v1h-1zM701 341h1v1h-1zM701 342h1v1h-1zM701 343h1v1h-1zM701 345h1v1h-1zM701 407h1v1h-1zM701 472h1v1h-1zM701 537h1v1h-1zM701 602h1v1h-1zM701 665h1v1h-1zM701 667h1v1h-1zM703 342h1v1h-1zM705 342h1v1h-1zM707 342h1v1h-1zM709 342h1v1h-1zM711 342h1v1h-1zM713 342h1v1h-1zM715 342h1v1h-1zM717 342h1v1h-1zM719 342h1v1h-1zM721 18h1v1h-1zM721 20h1v1h-1zM721 22h1v1h-1zM721 30h1v1h-1zM721 43h1v1h-1zM721 56h1v1h-1zM721 69h1v1h-1zM721 82h1v1h-1zM721 95h1v1h-1zM721 108h1v1h-1zM721 121h1v1h-1zM721 134h1v1h-1zM721 147h1v1h-1zM721 160h1v1h-1zM721 173h1v1h-1zM721 186h1v1h-1zM721 199h1v1h-1zM721 212h1v1h-1zM721 225h1v1h-1zM721 238h1v1h-1zM721 251h1v1h-1zM721 264h1v1h-1zM721 277h1v1h-1zM721 290h1v1h-1zM721 303h1v1h-1zM721 316h1v1h-1zM721 329h1v1h-1zM721 339h1v1h-1zM721 341h1v1h-1zM721 342h1v1h-1zM721 343h1v1h-1zM721 345h1v1h-1zM721 355h1v1h-1zM721 368h1v1h-1zM721 381h1v1h-1zM721 394h1v1h-1zM721 407h1v1h-1zM721 420h1v1h-1zM721 433h1v1h-1zM721 446h1v1h-1zM721 459h1v1h-1zM721 472h1v1h-1zM721 485h1v1h-1zM721 498h1v1h-1zM721 511h1v1h-1zM721 524h1v1h-1zM721 537h1v1h-1zM721 550h1v1h-1zM721 563h1v1h-1zM721 576h1v1h-1zM721 589h1v1h-1zM721 602h1v1h-1zM721 615h1v1h-1zM721 628h1v1h-1zM721 641h1v1h-1zM721 654h1v1h-1zM721 662h1v1h-1zM721 664h1v1h-1zM721 666h1v1h-1zM723 342h1v1h-1zM725 342h1v1h-1zM727 342h1v1h-1zM729 342h1v1h-1zM731 342h1v1h-1zM733 342h1v1h-1zM735 342h1v1h-1zM737 342h1v1h-1zM739 342h1v1h-1zM741 17h1v1h-1zM741 19h1v1h-1zM741 82h1v1h-1zM741 147h1v1h-1zM741 212h1v1h-1zM741 277h1v1h-1zM741 339h1v1h-1zM741 341h1v1h-1zM741 342h1v1h-1zM741 343h1v1h-1zM741 345h1v1h-1zM741 407h1v1h-1zM741 472h1v1h-1zM741 537h1v1h-1zM741 602h1v1h-1zM741 665h1v1h-1zM741 667h1v1h-1zM743 342h1v1h-1zM745 342h1v1h-1zM747 342h1v1h-1zM749 342h1v1h-1zM751 342h1v1h-1zM753 342h1v1h-1zM755 342h1v1h-1zM757 342h1v1h-1zM759 342h1v1h-1zM761 17h1v1h-1zM761 19h1v1h-1zM761 82h1v1h-1zM761 147h1v1h-1zM761 212h1v1h-1zM761 277h1v1h-1zM761 339h1v1h-1zM761 341h1v1h-1zM761 342h1v1h-1zM761 343h1v1h-1zM761 345h1v1h-1zM761 407h1v1h-1zM761 472h1v1h-1zM761 537h1v1h-1zM761 602h1v1h-1zM761 665h1v1h-1zM761 667h1v1h-1zM763 342h1v1h-1zM765 342h1v1h-1zM767 342h1v1h-1zM769 342h1v1h-1zM771 342h1v1h-1zM773 342h1v1h-1zM775 342h1v1h-1zM777 342h1v1h-1zM779 342h1v1h-1zM781 17h1v1h-1zM781 19h1v1h-1zM781 82h1v1h-1zM781 147h1v1h-1zM781 212h1v1h-1zM781 277h1v1h-1zM781 339h1v1h-1zM781 341h1v1h-1zM781 342h1v1h-1zM781 343h1v1h-1zM781 345h1v1h-1zM781 407h1v1h-1zM781 472h1v1h-1zM781 537h1v1h-1zM781 602h1v1h-1zM781 665h1v1h-1zM781 667h1v1h-1zM783 342h1v1h-1zM785 342h1v1h-1zM787 342h1v1h-1zM789 342h1v1h-1zM791 342h1v1h-1zM793 342h1v1h-1zM795 342h1v1h-1zM797 342h1v1h-1zM799 342h1v1h-1zM801 17h1v1h-1zM801 19h1v1h-1zM801 82h1v1h-1zM801 147h1v1h-1zM801 212h1v1h-1zM801 277h1v1h-1zM801 339h1v1h-1zM801 341h1v1h-1zM801 342h1v1h-1zM801 343h1v1h-1zM801 345h1v1h-1zM801 407h1v1h-1zM801 472h1v1h-1zM801 537h1v1h-1zM801 602h1v1h-1zM801 665h1v1h-1zM801 667h1v1h-1zM803 342h1v1h-1zM805 342h1v1h-1zM807 342h1v1h-1zM809 342h1v1h-1zM811 342h1v1h-1zM813 342h1v1h-1zM815 342h1v1h-1zM817 342h1v1h-1zM819 342h1v1h-1zM821 18h1v1h-1zM821 20h1v1h-1zM821 22h1v1h-1zM821 30h1v1h-1zM821 43h1v1h-1zM821 56h1v1h-1zM821 69h1v1h-1zM821 82h1v1h-1zM821 95h1v1h-1zM821 108h1v1h-1zM821 121h1v1h-1zM821 134h1v1h-1zM821 147h1v1h-1zM821 160h1v1h-1zM821 173h1v1h-1zM821 186h1v1h-1zM821 199h1v1h-1zM821 212h1v1h-1zM821 225h1v1h-1zM821 238h1v1h-1zM821 251h1v1h-1zM821 264h1v1h-1zM821 277h1v1h-1zM821 290h1v1h-1zM821 303h1v1h-1zM821 316h1v1h-1zM821 329h1v1h-1zM821 339h1v1h-1zM821 341h1v1h-1zM821 342h1v1h-1zM821 343h1v1h-1zM821 345h1v1h-1zM821 355h1v1h-1zM821 368h1v1h-1zM821 381h1v1h-1zM821 394h1v1h-1zM821 407h1v1h-1zM821 420h1v1h-1zM821 433h1v1h-1zM821 446h1v1h-1zM821 459h1v1h-1zM821 472h1v1h-1zM821 485h1v1h-1zM821 498h1v1h-1zM821 511h1v1h-1zM821 524h1v1h-1zM821 537h1v1h-1zM821 550h1v1h-1zM821 563h1v1h-1zM821 576h1v1h-1zM821 589h1v1h-1zM821 602h1v1h-1zM821 615h1v1h-1zM821 628h1v1h-1zM821 641h1v1h-1zM821 654h1v1h-1zM821 662h1v1h-1zM821 664h1v1h-1zM821 666h1v1h-1zM823 342h1v1h-1zM825 342h1v1h-1zM827 342h1v1h-1zM829 342h1v1h-1zM831 342h1v1h-1zM833 342h1v1h-1zM835 342h1v1h-1zM837 342h1v1h-1zM839 342h1v1h-1zM841 17h1v1h-1zM841 19h1v1h-1zM841 82h1v1h-1zM841 147h1v1h-1zM841 212h1v1h-1zM841 277h1v1h-1zM841 339h1v1h-1zM841 341h1v1h-1zM841 342h1v1h-1zM841 343h1v1h-1zM841 345h1v1h-1zM841 407h1v1h-1zM841 472h1v1h-1zM841 537h1v1h-1zM841 602h1v1h-1zM841 665h1v1h-1zM841 667h1v1h-1zM843 342h1v1h-1zM845 342h1v1h-1zM847 342h1v1h-1zM849 342h1v1h-1zM851 342h1v1h-1zM853 342h1v1h-1zM855 342h1v1h-1zM857 342h1v1h-1zM859 342h1v1h-1zM861 17h1v1h-1zM861 19h1v1h-1zM861 82h1v1h-1zM861 147h1v1h-1zM861 212h1v1h-1zM861 277h1v1h-1zM861 339h1v1h-1zM861 341h1v1h-1zM861 342h1v1h-1zM861 343h1v1h-1zM861 345h1v1h-1zM861 407h1v1h-1zM861 472h1v1h-1zM861 537h1v1h-1zM861 602h1v1h-1zM861 665h1v1h-1zM861 667h1v1h-1zM863 342h1v1h-1zM865 342h1v1h-1zM867 342h1v1h-1zM869 342h1v1h-1zM871 342h1v1h-1zM873 342h1v1h-1zM875 342h1v1h-1zM877 342h1v1h-1zM879 342h1v1h-1zM881 17h1v1h-1zM881 19h1v1h-1zM881 82h1v1h-1zM881 147h1v1h-1zM881 212h1v1h-1zM881 277h1v1h-1zM881 339h1v1h-1zM881 341h1v1h-1zM881 342h1v1h-1zM881 343h1v1h-1zM881 345h1v1h-1zM881 407h1v1h-1zM881 472h1v1h-1zM881 537h1v1h-1zM881 602h1v1h-1zM881 665h1v1h-1zM881 667h1v1h-1zM883 342h1v1h-1zM885 342h1v1h-1zM887 342h1v1h-1zM889 342h1v1h-1zM891 342h1v1h-1zM893 342h1v1h-1zM895 342h1v1h-1zM897 342h1v1h-1zM899 342h1v1h-1zM901 17h1v1h-1zM901 19h1v1h-1zM901 82h1v1h-1zM901 147h1v1h-1zM901 212h1v1h-1zM901 277h1v1h-1zM901 339h1v1h-1zM901 341h1v1h-1zM901 342h1v1h-1zM901 343h1v1h-1zM901 345h1v1h-1zM901 407h1v1h-1zM901 472h1v1h-1zM901 537h1v1h-1zM901 602h1v1h-1zM901 665h1v1h-1zM901 667h1v1h-1zM903 342h1v1h-1zM905 342h1v1h-1zM907 342h1v1h-1zM909 342h1v1h-1zM911 342h1v1h-1zM913 342h1v1h-1zM915 342h1v1h-1zM917 342h1v1h-1zM919 342h1v1h-1zM921 18h1v1h-1zM921 20h1v1h-1zM921 22h1v1h-1zM921 30h1v1h-1zM921 43h1v1h-1zM921 56h1v1h-1zM921 69h1v1h-1zM921 82h1v1h-1zM921 95h1v1h-1zM921 108h1v1h-1zM921 121h1v1h-1zM921 134h1v1h-1zM921 147h1v1h-1zM921 160h1v1h-1zM921 173h1v1h-1zM921 186h1v1h-1zM921 199h1v1h-1zM921 212h1v1h-1zM921 225h1v1h-1zM921 238h1v1h-1zM921 251h1v1h-1zM921 264h1v1h-1zM921 277h1v1h-1zM921 290h1v1h-1zM921 303h1v1h-1zM921 316h1v1h-1zM921 329h1v1h-1zM921 339h1v1h-1zM921 341h1v1h-1zM921 342h1v1h-1zM921 343h1v1h-1zM921 345h1v1h-1zM921 355h1v1h-1zM921 368h1v1h-1zM921 381h1v1h-1zM921 394h1v1h-1zM921 407h1v1h-1zM921 420h1v1h-1zM921 433h1v1h-1zM921 446h1v1h-1zM921 459h1v1h-1zM921 472h1v1h-1zM921 485h1v1h-1zM921 498h1v1h-1zM921 511h1v1h-1zM921 524h1v1h-1zM921 537h1v1h-1zM921 550h1v1h-1zM921 563h1v1h-1zM921 576h1v1h-1zM921 589h1v1h-1zM921 602h1v1h-1zM921 615h1v1h-1zM921 628h1v1h-1zM921 641h1v1h-1zM921 654h1v1h-1zM921 662h1v1h-1zM921 664h1v1h-1zM921 666h1v1h-1zM923 342h1v1h-1zM925 342h1v1h-1zM927 342h1v1h-1zM929 342h1v1h-1zM931 342h1v1h-1zM933 342h1v1h-1zM935 342h1v1h-1zM937 342h1v1h-1zM939 342h1v1h-1zM941 17h1v1h-1zM941 19h1v1h-1zM941 82h1v1h-1zM941 147h1v1h-1zM941 212h1v1h-1zM941 277h1v1h-1zM941 339h1v1h-1zM941 341h1v1h-1zM941 342h1v1h-1zM941 343h1v1h-1zM941 345h1v1h-1zM941 407h1v1h-1zM941 472h1v1h-1zM941 537h1v1h-1zM941 602h1v1h-1zM941 665h1v1h-1zM941 667h1v1h-1zM943 342h1v1h-1zM945 342h1v1h-1zM947 342h1v1h-1zM949 342h1v1h-1zM951 342h1v1h-1zM953 342h1v1h-1zM955 342h1v1h-1zM957 342h1v1h-1zM959 342h1v1h-1zM961 17h1v1h-1zM961 19h1v1h-1zM961 82h1v1h-1zM961 147h1v1h-1zM961 212h1v1h-1zM961 277h1v1h-1zM961 339h1v1h-1zM961 341h1v1h-1zM961 342h1v1h-1zM961 343h1v1h-1zM961 345h1v1h-1zM961 407h1v1h-1zM961 472h1v1h-1zM961 537h1v1h-1zM961 602h1v1h-1zM961 665h1v1h-1zM961 667h1v1h-1zM963 342h1v1h-1zM965 342h1v1h-1zM967 342h1v1h-1zM969 342h1v1h-1zM971 342h1v1h-1zM973 342h1v1h-1zM975 342h1v1h-1zM977 342h1v1h-1zM979 342h1v1h-1zM981 17h1v1h-1zM981 19h1v1h-1zM981 82h1v1h-1zM981 147h1v1h-1zM981 212h1v1h-1zM981 277h1v1h-1zM981 339h1v1h-1zM981 341h1v1h-1zM981 342h1v1h-1zM981 343h1v1h-1zM981 345h1v1h-1zM981 407h1v1h-1zM981 472h1v1h-1zM981 537h1v1h-1zM981 602h1v1h-1zM981 665h1v1h-1zM981 667h1v1h-1zM983 342h1v1h-1zM985 342h1v1h-1zM987 342h1v1h-1zM989 342h1v1h-1zM991 342h1v1h-1zM993 342h1v1h-1zM995 342h1v1h-1zM997 342h1v1h-1zM999 342h1v1h-1zM1001 17h1v1h-1zM1001 19h1v1h-1zM1001 82h1v1h-1zM1001 147h1v1h-1zM1001 212h1v1h-1zM1001 277h1v1h-1zM1001 339h1v1h-1zM1001 341h1v1h-1zM1001 342h1v1h-1zM1001 343h1v1h-1zM1001 345h1v1h-1zM1001 407h1v1h-1zM1001 472h1v1h-1zM1001 537h1v1h-1zM1001 602h1v1h-1zM1001 665h1v1h-1zM1001 667h1v1h-1zM1003 342h1v1h-1zM1005 342h1v1h-1zM1007 342h1v1h-1zM1009 342h1v1h-1zM1011 342h1v1h-1zM1013 342h1v1h-1zM1015 82h1v1h-1zM1015 147h1v1h-1zM1015 212h1v1h-1zM1015 277h1v1h-1zM1015 342h1v1h-1zM1015 407h1v1h-1zM1015 472h1v1h-1zM1015 537h1v1h-1zM1015 602h1v1h-1zM1017 82h1v1h-1zM1017 147h1v1h-1zM1017 212h1v1h-1zM1017 277h1v1h-1zM1017 342h1v1h-1zM1017 407h1v1h-1zM1017 472h1v1h-1zM1017 537h1v1h-1zM1017 602h1v1h-1zM1018 30h1v1h-1zM1018 43h1v1h-1zM1018 56h1v1h-1zM1018 69h1v1h-1zM1018 95h1v1h-1zM1018 108h1v1h-1zM1018 121h1v1h-1zM1018 134h1v1h-1zM1018 160h1v1h-1zM1018 173h1v1h-1zM1018 186h1v1h-1zM1018 199h1v1h-1zM1018 225h1v1h-1zM1018 238h1v1h-1zM1018 251h1v1h-1zM1018 264h1v1h-1zM1018 290h1v1h-1zM1018 303h1v1h-1zM1018 316h1v1h-1zM1018 329h1v1h-1zM1018 355h1v1h-1zM1018 368h1v1h-1zM1018 381h1v1h-1zM1018 394h1v1h-1zM1018 420h1v1h-1zM1018 433h1v1h-1zM1018 446h1v1h-1zM1018 459h1v1h-1zM1018 485h1v1h-1zM1018 498h1v1h-1zM1018 511h1v1h-1zM1018 524h1v1h-1zM1018 550h1v1h-1zM1018 563h1v1h-1zM1018 576h1v1h-1zM1018 589h1v1h-1zM1018 615h1v1h-1zM1018 628h1v1h-1zM1018 641h1v1h-1zM1018 654h1v1h-1zM1019 82h1v1h-1zM1019 147h1v1h-1zM1019 212h1v1h-1zM1019 277h1v1h-1zM1019 342h1v1h-1zM1019 407h1v1h-1zM1019 472h1v1h-1zM1019 537h1v1h-1zM1019 602h1v1h-1zM1020 30h1v1h-1zM1020 43h1v1h-1zM1020 56h1v1h-1zM1020 69h1v1h-1zM1020 95h1v1h-1zM1020 108h1v1h-1zM1020 121h1v1h-1zM1020 134h1v1h-1zM1020 160h1v1h-1zM1020 173h1v1h-1zM1020 186h1v1h-1zM1020 199h1v1h-1zM1020 225h1v1h-1zM1020 238h1v1h-1zM1020 251h1v1h-1zM1020 264h1v1h-1zM1020 290h1v1h-1zM1020 303h1v1h-1zM1020 316h1v1h-1zM1020 329h1v1h-1zM1020 355h1v1h-1zM1020 368h1v1h-1zM1020 381h1v1h-1zM1020 394h1v1h-1zM1020 420h1v1h-1zM1020 433h1v1h-1zM1020 446h1v1h-1zM1020 459h1v1h-1zM1020 485h1v1h-1zM1020 498h1v1h-1zM1020 511h1v1h-1zM1020 524h1v1h-1zM1020 550h1v1h-1zM1020 563h1v1h-1zM1020 576h1v1h-1zM1020 589h1v1h-1zM1020 615h1v1h-1zM1020 628h1v1h-1zM1020 641h1v1h-1zM1020 654h1v1h-1z"/>
</g>
<!-- trigger position markers -->
<path fill="#ffa000" d="M517.5 1H525.5L521.5 4.5Z"/>
<path fill="#ffa000" d="M518 5H524.5Q525.5 5 525.5 6V14L521.5 16L517 14V6Q517 5 518 5Z"/>
<rect x="518.5" y="6.5" width="6" height="2" fill="#000"/>
<rect x="520.5" y="8" width="2" height="6" fill="#000"/>
<path fill="#ffa000" d="M515.5 17H527L521.2 23.5Z"/>
<path fill="#ffa000" d="M516.5 24H525.5Q527 24 527 25.5V36L521 39L515 36V25.5Q515 24 516.5 24Z"/>
<rect x="517" y="25" width="9" height="3.5" fill="#000"/>
<rect x="519.5" y="28" width="3.5" height="8" fill="#000"/>
<!-- ch1 marker -->
<path fill="#101010" d="M1 466H13L21 473L13 481H1Z"/>
<path fill="#ffff00" d="M0 464H12L19.5 472L12 480H0Z"/>
<path fill="#000" d="M5 470L8 467H9.8V478H7.6V469.8L5.8 471.6Z"/>
<!-- trigger level arrow -->
<path fill="#ffff00" d="M1010 455.5L1016 450V461Z"/>
<rect x="1015" y="454.5" width="6" height="2" fill="#ffff00"/>
</svg>

<div class="a" style="left:-1px;top:-2px;font-family:'Liberation Serif',serif;font-weight:700;font-size:20px;line-height:20px;color:#000;letter-spacing:0px;-webkit-text-stroke:0.5px #000">Tek</div>

<!-- channel readout -->
<div class="pn" style="left:20px;top:670px;width:556px;height:21px"></div>
<div class="a" style="left:26px;top:673px;width:25px;height:16px;border-radius:8px;background:#ffff00"></div>
<div class="a" style="left:26px;top:672px;width:25px;text-align:center;color:#000;font-weight:700;-webkit-text-stroke:0">1</div>
<div class="a" style="left:165px;top:673px;width:25px;height:16px;border-radius:8px;background:#00e0e8"></div>
<div class="a" style="left:165px;top:672px;width:25px;text-align:center;color:#000;font-weight:700;-webkit-text-stroke:0">2</div>

<!-- timebase -->
<div class="pn" style="left:584px;top:670px;width:148px;height:38px"></div>
<svg class="a" style="left:584px;top:686px" width="50" height="22" viewBox="584 686 50 22">
<rect x="589" y="691" width="12" height="13" rx="2" fill="#ffa000"/>
<rect x="590" y="692" width="10" height="2.5" fill="#000"/>
<rect x="593.5" y="692" width="2.5" height="11" fill="#000"/>
<rect x="602" y="697" width="6" height="1.2" fill="#ffa000"/>
<path fill="#ffa000" d="M607 694L611 697.6L607 701Z"/>
<path fill="#ffa000" d="M612 694H623L617.5 700Z"/>
</svg>

<!-- sample rate -->
<div class="pn" style="left:741px;top:670px;width:107px;height:38px"></div>

<!-- trigger -->
<div class="pn" style="left:857px;top:670px;width:165px;height:38px"></div>
<div class="a" style="left:889px;top:673px;width:25px;height:16px;border-radius:8px;background:#ffff00"></div>
<div class="a" style="left:889px;top:672px;width:25px;text-align:center;color:#000;font-weight:700;-webkit-text-stroke:0">1</div>
<svg class="a" style="left:920px;top:670px" width="30" height="20" viewBox="920 670 30 20">
<path d="M928 685H933L936 676H940" fill="none" stroke="#fff" stroke-width="2"/>
</svg>

<!-- buttons -->
<div class="bt" style="left:20px;width:114px"></div>
<div class="bt" style="left:138px;width:114px"></div>
<div class="bt gr" style="left:256px;width:114px"></div>
<div class="a" style="left:301px;top:742px;width:25px;height:16px;background:#c8d0f0"></div>
<div class="bt" style="left:374px;width:114px"></div>
<div class="bt" style="left:492px;width:114px"></div>
<svg class="a" style="left:530px;top:720px" width="40" height="24" viewBox="530 720 40 24">
<path fill="#d8e0f8" d="M549 727L560 738H538Z"/>
<path fill="#8090a8" d="M538 738H560L558 740H540Z"/>
</svg>
<div class="bt gr" style="left:728px;width:114px"></div>

<!-- date -->
<div class="pn" style="left:909px;top:729px;width:113px;height:37px"></div>
<div class="a" style="left:35.00px;top:-1px;color:#ffffff;letter-spacing:1.431px;font-size:15px">Stop</div>
<div class="a" style="left:69.00px;top:672px;color:#ffff00;letter-spacing:0.740px">1.00 V</div>
<div class="a" style="left:207.50px;top:672px;color:#00e8f0;letter-spacing:0.820px">1.00 V</div>
<div class="a" style="left:591.20px;top:672px;color:#ffffff;letter-spacing:0.700px">1.00ms</div>
<div class="a" style="left:623.50px;top:689px;color:#ffa000;letter-spacing:0.950px">0.00000 s</div>
<div class="a" style="left:748.10px;top:672px;color:#ffffff;letter-spacing:0.924px">1.00MS/s</div>
<div class="a" style="left:747.50px;top:689px;color:#ffffff;letter-spacing:1.255px">10k points</div>
<div class="a" style="left:958.50px;top:672px;color:#ffffff;letter-spacing:0.700px">260mV</div>
<div class="a" style="left:915.10px;top:732px;color:#ffffff;letter-spacing:1.360px">14 Jun 2019</div>
<div class="a" style="left:914.50px;top:748px;color:#ffffff;letter-spacing:1.129px">16:01:06</div>
<div class="a" style="left:61.50px;top:724px;color:#000000;letter-spacing:1.200px">Add</div>
<div class="a" style="left:23.90px;top:741px;color:#000000;letter-spacing:0.940px">Measurement</div>
<div class="a" style="left:164.00px;top:724px;color:#000000;letter-spacing:0.700px">Remove</div>
<div class="a" style="left:141.60px;top:741px;color:#000000;letter-spacing:1.020px">Measurement</div>
<div class="a" style="left:273.70px;top:724px;color:#5a5c54;letter-spacing:1.102px">Indicators</div>
<div class="a" style="left:301.50px;top:741px;color:#000000;letter-spacing:0.700px">Off</div>
<div class="a" style="left:390.50px;top:724px;color:#000000;letter-spacing:1.242px">Waveform</div>
<div class="a" style="left:386.30px;top:741px;color:#000000;letter-spacing:1.102px">Histograms</div>
<div class="a" style="left:529.00px;top:739px;color:#000000;letter-spacing:1.497px">More</div>
<div class="a" style="left:764.90px;top:715px;color:#5a5c54;letter-spacing:1.350px">Bring</div>
<div class="a" style="left:754.50px;top:732px;color:#5a5c54;letter-spacing:0.700px">Cursors</div>
<div class="a" style="left:743.90px;top:749px;color:#5a5c54;letter-spacing:0.698px">On Screen</div>
</body></html>
